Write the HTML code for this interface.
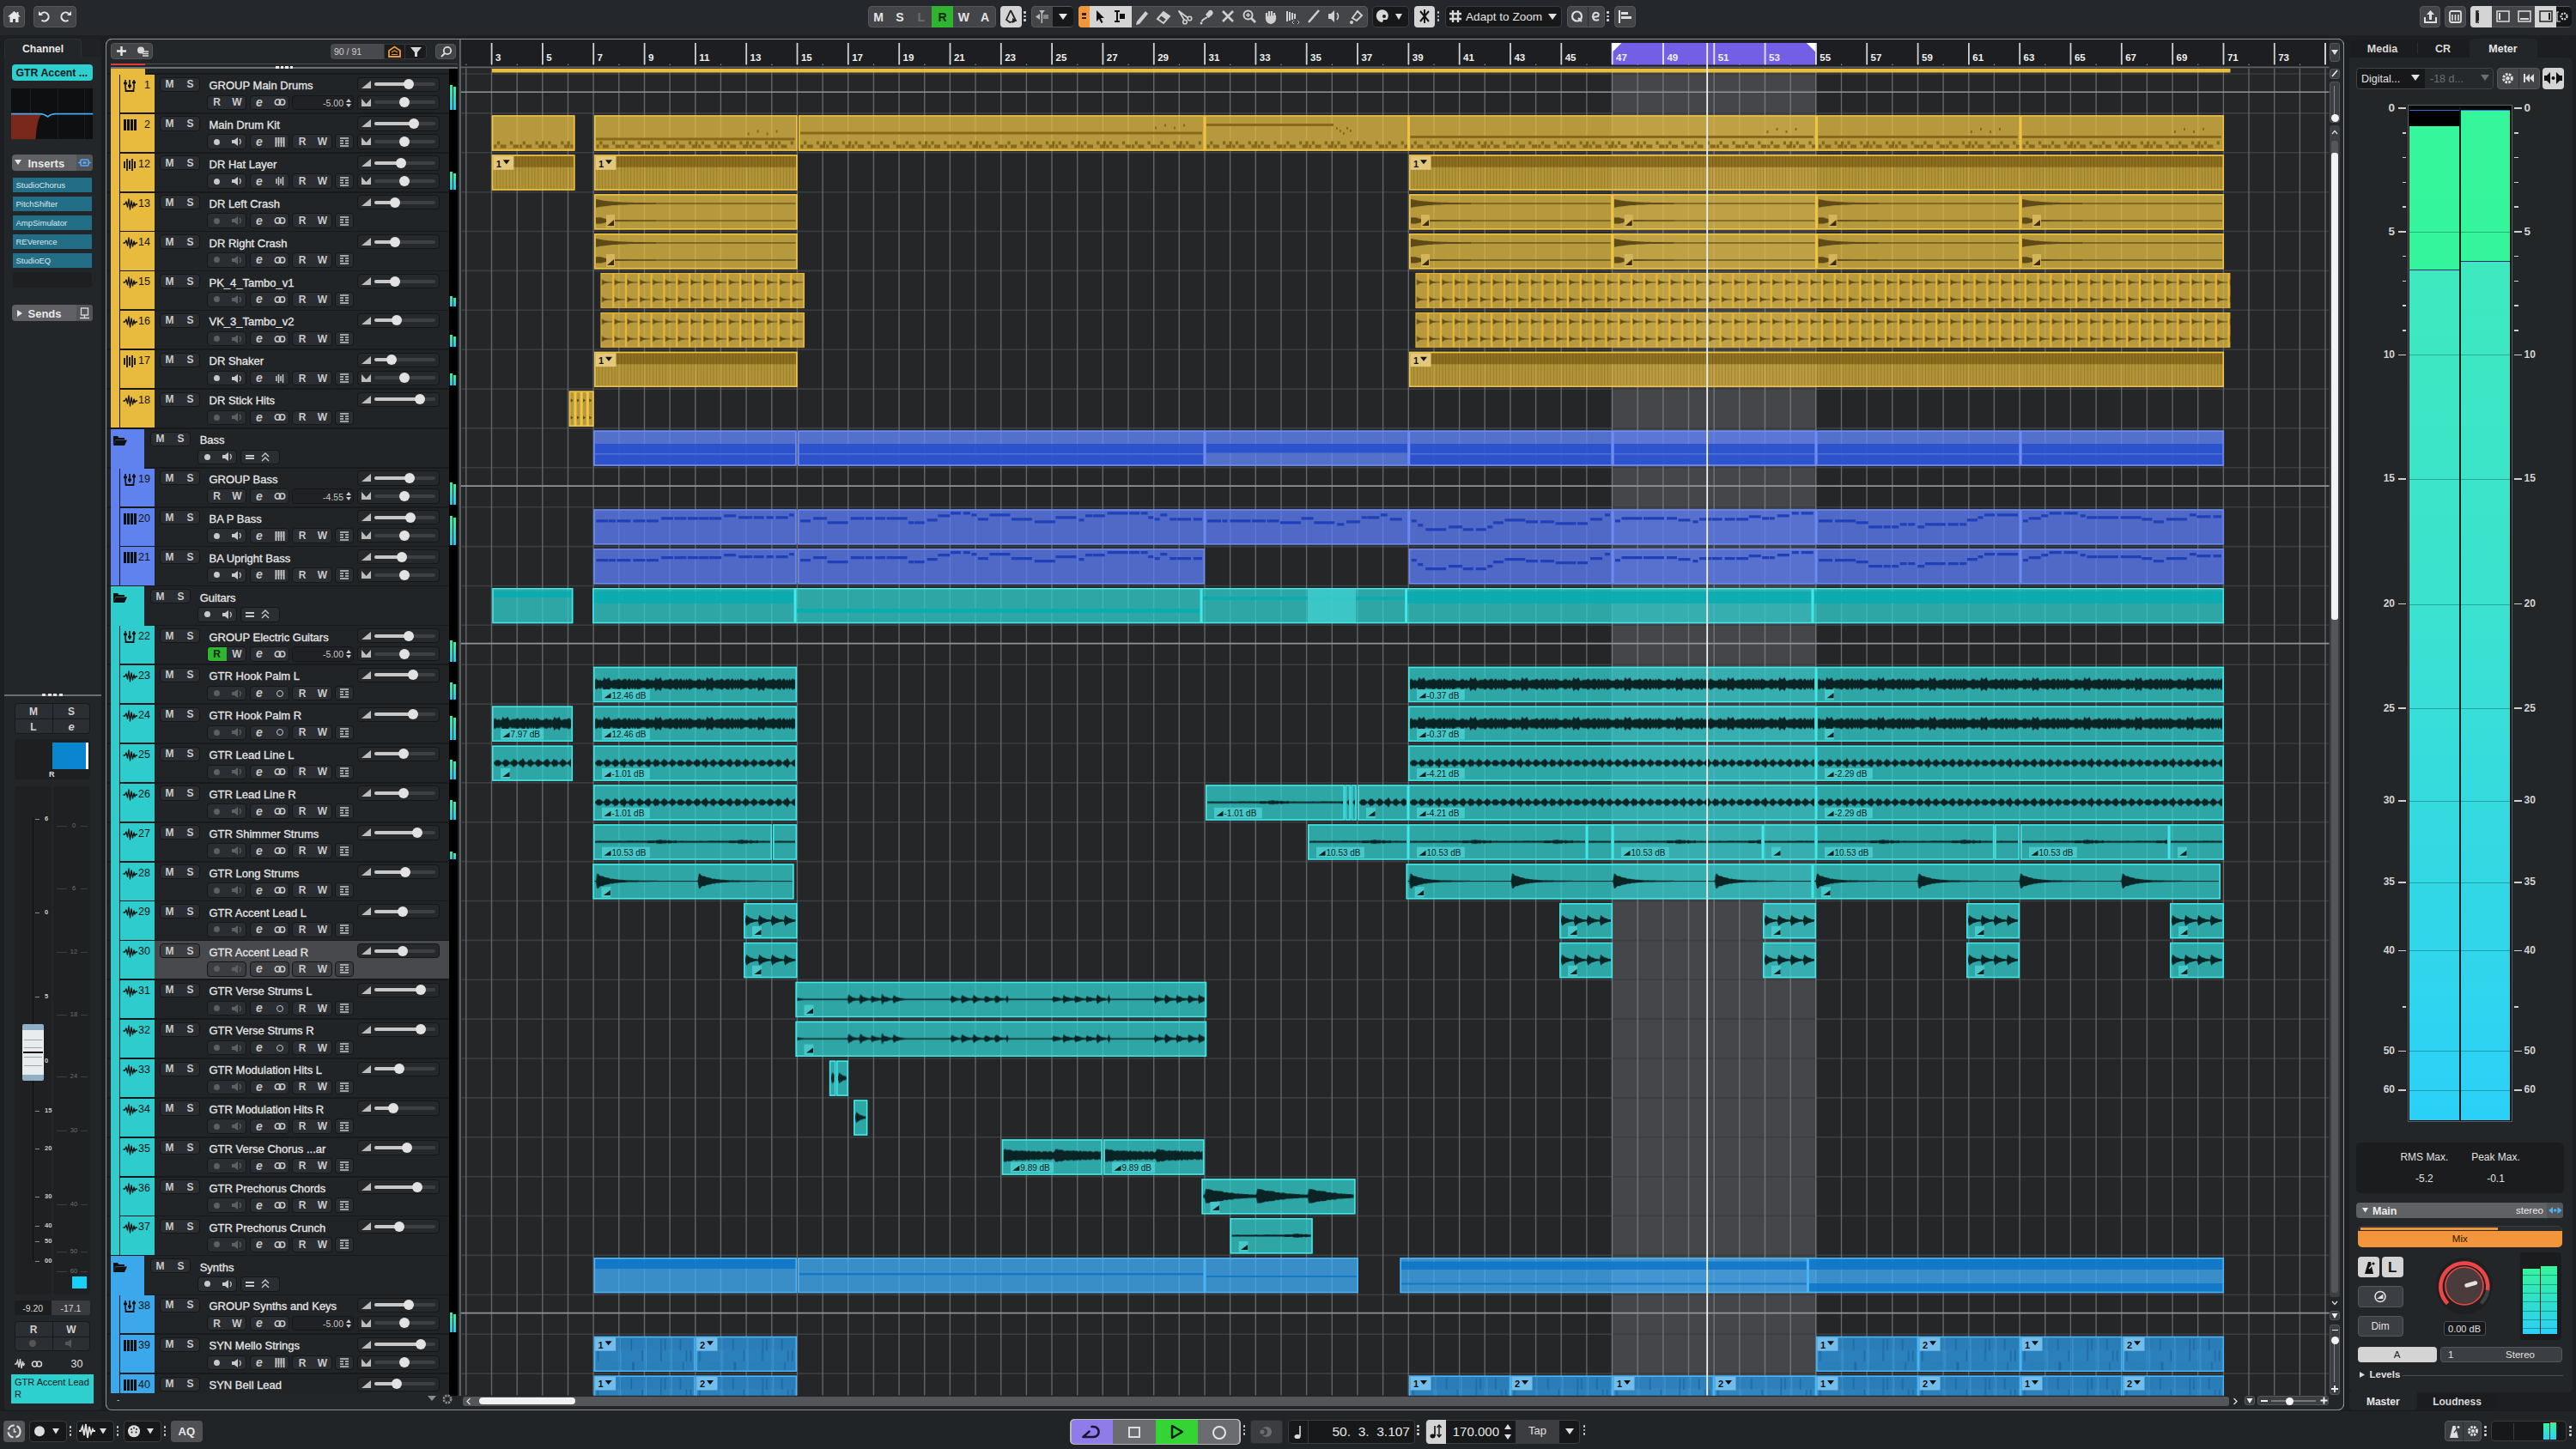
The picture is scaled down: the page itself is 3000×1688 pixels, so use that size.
<!DOCTYPE html><html><head><meta charset="utf-8"><style>
html,body{margin:0;padding:0;}
body{width:3000px;height:1688px;overflow:hidden;background:#1c1e21;position:relative;font-family:"Liberation Sans",sans-serif;}
div,svg{position:absolute;box-sizing:border-box;}
svg{overflow:visible;}
.t{white-space:nowrap;line-height:1;}
.b{border-radius:4px;}
</style></head><body>
<div style="left:0px;top:0px;width:3000px;height:41px;background:#24272b;"></div>
<div style="left:0px;top:41px;width:3000px;height:4px;background:#1d1f22;"></div>
<div style="left:4px;top:7px;width:25px;height:25px;background:#444548;border-radius:4px;border:1px solid #56575a;"></div>
<svg style="left:4px;top:7px;" width="25" height="25" viewBox="0 0 25 25"><path d="M12.5 6 L5 12.5 H7.5 V19 H11 V15 H14 V19 H17.5 V12.5 H20 Z" fill="#e6e6e6"/><rect x="15.5" y="7" width="2" height="4" fill="#e6e6e6"/></svg>
<div style="left:39px;top:7px;width:50px;height:25px;background:#444548;border-radius:4px;border:1px solid #56575a;"></div>
<svg style="left:39px;top:7px;" width="50" height="25" viewBox="0 0 50 25"><path d="M9 9 A5 5 0 1 1 9.5 16.5" stroke="#e6e6e6" stroke-width="2" fill="none"/><path d="M6 6 L6 11 L11 11 Z" fill="#e6e6e6"/><path d="M41 9 A5 5 0 1 0 40.5 16.5" stroke="#e6e6e6" stroke-width="2" fill="none"/><path d="M44 6 L44 11 L39 11 Z" fill="#e6e6e6"/></svg>
<div style="left:1010.7px;top:7.4px;width:149px;height:24.4px;background:#444548;border-radius:4px;border:1px solid #56575a;"></div>
<div style="left:1085px;top:7.4px;width:25px;height:24.4px;background:#2fb52f;"></div>
<div class="t" style="left:1010.7px;top:13px;font-size:14px;color:#e4e4e4;font-weight:bold;width:24.8px;text-align:center;">M</div>
<div class="t" style="left:1035.5px;top:13px;font-size:14px;color:#e4e4e4;font-weight:bold;width:24.8px;text-align:center;">S</div>
<div class="t" style="left:1060.3px;top:13px;font-size:14px;color:#6a6c70;font-weight:bold;width:24.8px;text-align:center;">L</div>
<div class="t" style="left:1085.1px;top:13px;font-size:14px;color:#0b2a0b;font-weight:bold;width:24.8px;text-align:center;">R</div>
<div class="t" style="left:1109.9px;top:13px;font-size:14px;color:#e4e4e4;font-weight:bold;width:24.8px;text-align:center;">W</div>
<div class="t" style="left:1134.7px;top:13px;font-size:14px;color:#e4e4e4;font-weight:bold;width:24.8px;text-align:center;">A</div>
<div style="left:1165px;top:7.4px;width:24.6px;height:24.4px;background:#d4d4d4;border-radius:4px;"></div>
<svg style="left:1165px;top:7.4px;" width="25" height="24.4" viewBox="0 0 25 24.4"><path d="M12 5 L7 16 L11 19 L18 17 L12 5" stroke="#222" stroke-width="1.8" fill="none"/><path d="M14 14 L19 17 L14 20Z" fill="#222"/></svg>
<div style="left:1192px;top:13px;width:2.6px;height:2.6px;background:#d0d0d0;border-radius:1px;"></div>
<div style="left:1192px;top:17.5px;width:2.6px;height:2.6px;background:#d0d0d0;border-radius:1px;"></div>
<div style="left:1192px;top:22px;width:2.6px;height:2.6px;background:#d0d0d0;border-radius:1px;"></div>
<div style="left:1201px;top:7.4px;width:49px;height:24.4px;background:#444548;border-radius:4px;border:1px solid #56575a;"></div>
<div style="left:1226px;top:8px;width:23.5px;height:23px;background:#17181a;border-radius:0 4px 4px 0;"></div>
<svg style="left:1201px;top:7.4px;" width="25" height="24.4" viewBox="0 0 25 24.4"><rect x="11.5" y="5" width="1.6" height="15" fill="#bbb"/><path d="M5 12.5 L10 9 V16Z" fill="#bbb"/><rect x="14" y="10" width="6" height="5" fill="#888"/><path d="M9 5 H16 L12.5 9Z" fill="#bbb"/></svg>
<svg style="left:1226px;top:7.4px;" width="24" height="24.4" viewBox="0 0 24 24.4"><path d="M7 9 H17 L12 16Z" fill="#e6e6e6"/></svg>
<div style="left:1256px;top:7.4px;width:336.5px;height:24.4px;background:#444548;border-radius:4px;border:1px solid #56575a;"></div>
<div style="left:1256px;top:7.4px;width:13px;height:24.4px;background:#f0973a;border-radius:4px 0 0 4px;"></div>
<div style="left:1260px;top:15px;width:5px;height:2.5px;background:#3a2000;"></div>
<div style="left:1260px;top:19.5px;width:5px;height:2.5px;background:#3a2000;"></div>
<div style="left:1269px;top:7.4px;width:49.3px;height:24.4px;background:#d4d4d4;"></div>
<svg style="left:1269px;top:7.4px;" width="50" height="24.4" viewBox="0 0 50 24.4"><path d="M8 5 L8 18 L11 15 L13.5 20 L15.5 19 L13 14 L17 14 Z" fill="#111"/><rect x="31" y="5" width="2" height="14" fill="#111"/><rect x="29" y="5" width="6" height="2" fill="#111"/><rect x="29" y="17" width="6" height="2" fill="#111"/><rect x="35" y="9" width="6" height="6" fill="#111"/></svg>
<svg style="left:1318.3px;top:7.4px;" width="25" height="24.4" viewBox="0 0 25 24.4"><path d="M6 18 L16 6 L19 9 L9 21 L5 22Z" fill="#cfcfcf"/></svg>
<svg style="left:1343.2px;top:7.4px;" width="25" height="24.4" viewBox="0 0 25 24.4"><path d="M5 15 L12 7 L19 12 L12 20Z" fill="none" stroke="#cfcfcf" stroke-width="2"/><path d="M12 7 L19 12 L15.5 16 L8.5 11Z" fill="#cfcfcf"/></svg>
<svg style="left:1368.1px;top:7.4px;" width="25" height="24.4" viewBox="0 0 25 24.4"><path d="M5 6 L15 13.5 M5 6 L11 16" stroke="#cfcfcf" stroke-width="1.8" stroke-linecap="round"/><circle cx="12" cy="18.5" r="2.3" stroke="#cfcfcf" stroke-width="1.6" fill="none"/><circle cx="17.5" cy="14.5" r="2.3" stroke="#cfcfcf" stroke-width="1.6" fill="none"/></svg>
<svg style="left:1393px;top:7.4px;" width="25" height="24.4" viewBox="0 0 25 24.4"><path d="M11 10 L15 5.5 Q17 4 19 6 Q20.5 8 19 10 L14.5 14 Z" fill="#cfcfcf"/><path d="M13 13 L8 16 L6.5 18" stroke="#cfcfcf" stroke-width="2" fill="none"/><circle cx="6" cy="20" r="1.4" fill="#cfcfcf"/></svg>
<svg style="left:1417.9px;top:7.4px;" width="25" height="24.4" viewBox="0 0 25 24.4"><path d="M6 6 L18 18 M18 6 L6 18" stroke="#cfcfcf" stroke-width="2.6"/></svg>
<svg style="left:1442.8px;top:7.4px;" width="25" height="24.4" viewBox="0 0 25 24.4"><circle cx="10.5" cy="10.5" r="5" stroke="#cfcfcf" stroke-width="2" fill="none"/><path d="M14 14 L19 19" stroke="#cfcfcf" stroke-width="2.6"/><path d="M8 10.5 H13 M10.5 8 V13" stroke="#cfcfcf" stroke-width="1.5"/></svg>
<svg style="left:1467.7px;top:7.4px;" width="25" height="24.4" viewBox="0 0 25 24.4"><path d="M7 13 V8 M10 12 V6 M13 12 V6 M16 12 V8 M7 12 Q6 19 12 20 Q18 19 17 11" stroke="#cfcfcf" stroke-width="2.2" fill="#cfcfcf"/></svg>
<svg style="left:1492.6px;top:7.4px;" width="25" height="24.4" viewBox="0 0 25 24.4"><rect x="5" y="6" width="2" height="12" fill="#cfcfcf"/><rect x="8" y="7" width="2" height="10" fill="#cfcfcf"/><rect x="11" y="8" width="2" height="8" fill="#cfcfcf"/><rect x="14" y="9" width="2" height="6" fill="#cfcfcf"/><path d="M14 17 L12 19 L14 21 M18 17 L20 19 L18 21" stroke="#cfcfcf" stroke-width="1"/></svg>
<svg style="left:1517.5px;top:7.4px;" width="25" height="24.4" viewBox="0 0 25 24.4"><path d="M6 19 L18 5" stroke="#cfcfcf" stroke-width="2.5"/></svg>
<svg style="left:1542.4px;top:7.4px;" width="25" height="24.4" viewBox="0 0 25 24.4"><path d="M5 9 H8 L12 5 V19 L8 15 H5Z" fill="#cfcfcf"/><path d="M15 8 Q18 12 15 16" stroke="#cfcfcf" stroke-width="1.6" fill="none"/></svg>
<svg style="left:1567.3px;top:7.4px;" width="25" height="24.4" viewBox="0 0 25 24.4"><path d="M8 14 L14 6 L19 11 L13 17Z" fill="none" stroke="#cfcfcf" stroke-width="2"/><circle cx="7" cy="19" r="2" fill="#cfcfcf"/></svg>
<div style="left:1598px;top:7.4px;width:43.4px;height:24.4px;background:#17181a;border-radius:4px;border:1px solid #3a3d40;"></div>
<svg style="left:1598px;top:7.4px;" width="44" height="24.4" viewBox="0 0 44 24.4"><path d="M5 13 A7 7 0 1 1 17 16 L13 16 L12 19 A7 7 0 0 1 5 13Z" fill="#d8d8d8"/><circle cx="14" cy="12" r="2" fill="#17181a"/><path d="M27 9 H35 L31 16Z" fill="#e0e0e0"/></svg>
<div style="left:1646.8px;top:7.4px;width:24.7px;height:24.4px;background:#d4d4d4;border-radius:4px;"></div>
<svg style="left:1646.8px;top:7.4px;" width="25" height="24.4" viewBox="0 0 25 24.4"><path d="M7 6 L12 12 L7 18 M17 6 L12 12 L17 18 M12 4 V20" stroke="#111" stroke-width="2" fill="none"/></svg>
<div style="left:1673.5px;top:13px;width:2.6px;height:2.6px;background:#d0d0d0;border-radius:1px;"></div>
<div style="left:1673.5px;top:17.5px;width:2.6px;height:2.6px;background:#d0d0d0;border-radius:1px;"></div>
<div style="left:1673.5px;top:22px;width:2.6px;height:2.6px;background:#d0d0d0;border-radius:1px;"></div>
<div style="left:1682.7px;top:7.4px;width:136.7px;height:24.4px;background:#17181a;border-radius:4px;border:1px solid #3a3d40;"></div>
<svg style="left:1682.7px;top:7.4px;" width="24" height="24.4" viewBox="0 0 24 24.4"><path d="M9 5 V19 M15 5 V19 M5 9 H19 M5 15 H19" stroke="#d8d8d8" stroke-width="2.4"/></svg>
<div class="t" style="left:1707px;top:12.5px;font-size:13.6px;color:#e2e2e2;">Adapt to Zoom</div>
<svg style="left:1800px;top:7.4px;" width="18" height="24.4" viewBox="0 0 18 24.4"><path d="M3 9 H13 L8 16Z" fill="#e0e0e0"/></svg>
<div style="left:1825px;top:7.4px;width:43.5px;height:24.4px;background:#444548;border-radius:4px;border:1px solid #56575a;"></div>
<div style="left:1849px;top:8px;width:1px;height:23px;background:#2a2c30;"></div>
<svg style="left:1825px;top:7.4px;" width="44" height="24.4" viewBox="0 0 44 24.4"><circle cx="11.5" cy="12" r="5.5" stroke="#ddd" stroke-width="2.2" fill="none"/><path d="M13 14 L17 18" stroke="#ddd" stroke-width="2.2"/><path d="M30 13 Q30 7 35 8 Q38 9 36 12 L30 13 Q31 18 37 16" stroke="#ddd" stroke-width="2" fill="none"/></svg>
<div style="left:1871px;top:13px;width:2.6px;height:2.6px;background:#d0d0d0;border-radius:1px;"></div>
<div style="left:1871px;top:17.5px;width:2.6px;height:2.6px;background:#d0d0d0;border-radius:1px;"></div>
<div style="left:1871px;top:22px;width:2.6px;height:2.6px;background:#d0d0d0;border-radius:1px;"></div>
<div style="left:1880px;top:7.4px;width:24.8px;height:24.4px;background:#444548;border-radius:4px;border:1px solid #56575a;"></div>
<svg style="left:1880px;top:7.4px;" width="25" height="24.4" viewBox="0 0 25 24.4"><rect x="5" y="5" width="2" height="15" fill="#ddd"/><rect x="8" y="7" width="8" height="3" fill="#ddd"/><rect x="8" y="12" width="12" height="3" fill="#ddd"/></svg>
<div style="left:2817.6px;top:7.2px;width:24.4px;height:24.5px;background:#444548;border-radius:4px;border:1px solid #56575a;"></div>
<svg style="left:2817.6px;top:7.2px;" width="25" height="24.5" viewBox="0 0 25 24.5"><path d="M6 13 V19 H19 V13" stroke="#e0e0e0" stroke-width="2" fill="none"/><path d="M12.5 5 L8 10 H11 V16 H14 V10 H17Z" fill="#e0e0e0"/></svg>
<div style="left:2847px;top:7.2px;width:25px;height:24.5px;background:#444548;border-radius:4px;border:1px solid #56575a;"></div>
<svg style="left:2847px;top:7.2px;" width="25" height="24.5" viewBox="0 0 25 24.5"><rect x="6" y="6" width="13" height="13" rx="2" stroke="#e0e0e0" stroke-width="1.8" fill="none"/><path d="M9 10 V17 M12.5 10 V17 M16 10 V17" stroke="#e0e0e0" stroke-width="1.6"/></svg>
<div style="left:2877px;top:7.2px;width:118.4px;height:24.5px;background:#444548;border-radius:4px;border:1px solid #56575a;"></div>
<div style="left:2877px;top:7.2px;width:25px;height:24.5px;background:#d4d4d4;border-radius:4px 0 0 4px;"></div>
<div style="left:2952px;top:7.2px;width:25px;height:24.5px;background:#d4d4d4;"></div>
<div style="left:2977px;top:8px;width:18px;height:23px;background:#141516;border-radius:0 4px 4px 0;"></div>
<svg style="left:2877px;top:7.2px;" width="120" height="24.5" viewBox="0 0 120 24.5"><path d="M10 6 H7 V19 H10 M8.5 7 V18" stroke="#222" stroke-width="1.6" fill="none"/><rect x="8" y="8" width="2" height="9" fill="#222"/><rect x="31" y="6" width="14" height="12" stroke="#ddd" stroke-width="1.5" fill="none"/><rect x="33" y="8" width="2" height="8" fill="#ddd"/><rect x="56" y="6" width="14" height="12" stroke="#ddd" stroke-width="1.5" fill="none"/><rect x="58" y="14" width="10" height="2" fill="#ddd"/><rect x="81" y="6" width="14" height="12" stroke="#222" stroke-width="1.5" fill="none"/><rect x="91" y="8" width="2" height="8" fill="#222"/><path d="M103 7 H101 V18 H105" stroke="#ddd" stroke-width="1.2" fill="none"/><circle cx="109" cy="12" r="3.5" stroke="#ddd" stroke-width="2.2" fill="none" stroke-dasharray="2 1.2"/></svg>
<div style="left:5px;top:45px;width:112.5px;height:1598px;background:#232629;border-radius:6px;"></div>
<div style="left:5px;top:45px;width:90px;height:22px;background:#232629;border-radius:6px 6px 0 0;border:1px solid #2e3134;border-bottom:none;"></div>
<div style="left:95px;top:45px;width:22.5px;height:21px;background:#1f2124;border-radius:0 6px 0 0;"></div>
<div class="t" style="left:5px;top:51px;font-size:12.2px;color:#e6e6e6;font-weight:bold;width:90px;text-align:center;">Channel</div>
<div style="left:14px;top:75px;width:93.8px;height:18.8px;background:#2ecfcf;border-radius:4px;"></div>
<div class="t" style="left:18.5px;top:79.3px;font-size:12.3px;color:#0c1a1a;font-weight:bold;">GTR Accent ...</div>
<div style="left:13px;top:102.8px;width:95.3px;height:59.2px;background:#0e0f10;"></div>
<div style="left:35px;top:102.8px;width:1px;height:59.2px;background:#1c1e20;"></div>
<div style="left:67px;top:102.8px;width:1px;height:59.2px;background:#1c1e20;"></div>
<div style="left:98px;top:102.8px;width:1px;height:59.2px;background:#1c1e20;"></div>
<svg style="left:13px;top:102.8px;" width="95.3" height="59.2" viewBox="0 0 95.3 59.2"><path d="M0 30 H36 Q30 34 28.5 59.2 H0Z" fill="#7a281c"/><path d="M0 29.6 H34 Q38 29.6 42.8 33 Q46 29.6 52 29.6 H95.3" stroke="#4aa8f0" stroke-width="1.6" fill="none"/></svg>
<div style="left:14px;top:180px;width:94px;height:19px;background:#5f6164;border-radius:4px;"></div>
<div style="left:89px;top:180px;width:19px;height:19px;background:#525457;border-radius:0 4px 4px 0;"></div>
<svg style="left:16px;top:184px;" width="10" height="10" viewBox="0 0 10 10"><path d="M1 2 H9 L5 8Z" fill="#e8e8e8"/></svg>
<div class="t" style="left:32.5px;top:183.5px;font-size:13px;color:#e8e8e8;font-weight:bold;">Inserts</div>
<svg style="left:89px;top:180px;" width="19" height="19" viewBox="0 0 19 19"><rect x="5" y="6" width="9" height="7" rx="1" stroke="#55aaff" stroke-width="1.6" fill="none"/><rect x="7.5" y="8.2" width="4" height="2.6" fill="#55aaff"/><path d="M2 9.5 H5 M14 9.5 H17" stroke="#55aaff" stroke-width="1.4"/></svg>
<div style="left:15px;top:207px;width:91.5px;height:17px;background:#226e86;"></div>
<div class="t" style="left:18.5px;top:211px;font-size:9.5px;color:#dfe8ec;">StudioChorus</div>
<div style="left:15px;top:229.05px;width:91.5px;height:17px;background:#226e86;"></div>
<div class="t" style="left:18.5px;top:233.05px;font-size:9.5px;color:#dfe8ec;">PitchShifter</div>
<div style="left:15px;top:251.1px;width:91.5px;height:17px;background:#226e86;"></div>
<div class="t" style="left:18.5px;top:255.1px;font-size:9.5px;color:#dfe8ec;">AmpSimulator</div>
<div style="left:15px;top:273.15px;width:91.5px;height:17px;background:#226e86;"></div>
<div class="t" style="left:18.5px;top:277.15px;font-size:9.5px;color:#dfe8ec;">REVerence</div>
<div style="left:15px;top:295.2px;width:91.5px;height:17px;background:#226e86;"></div>
<div class="t" style="left:18.5px;top:299.2px;font-size:9.5px;color:#dfe8ec;">StudioEQ</div>
<div style="left:15px;top:317.3px;width:91.5px;height:17.3px;background:#1d1f21;border-radius:2px;"></div>
<div style="left:14px;top:355.4px;width:94px;height:18.8px;background:#5f6164;border-radius:4px;"></div>
<div style="left:89px;top:355.4px;width:19px;height:18.8px;background:#525457;border-radius:0 4px 4px 0;"></div>
<svg style="left:19px;top:360px;" width="8" height="10" viewBox="0 0 8 10"><path d="M1 1 L7 5 L1 9Z" fill="#e8e8e8"/></svg>
<div class="t" style="left:32.5px;top:358.8px;font-size:13px;color:#e8e8e8;font-weight:bold;">Sends</div>
<svg style="left:89px;top:355.4px;" width="19" height="19" viewBox="0 0 19 19"><rect x="5.5" y="4" width="8" height="8" stroke="#ddd" stroke-width="1.3" fill="none"/><path d="M9.5 12 V15 M4 15.5 H15" stroke="#ddd" stroke-width="1.3"/></svg>
<div style="left:5px;top:809px;width:112.5px;height:1.6px;background:#6c6e71;"></div>
<div style="left:49px;top:808.3px;width:4px;height:3px;background:#e0e0e0;"></div>
<div style="left:55.5px;top:808.3px;width:4px;height:3px;background:#e0e0e0;"></div>
<div style="left:62px;top:808.3px;width:4px;height:3px;background:#e0e0e0;"></div>
<div style="left:68.5px;top:808.3px;width:4px;height:3px;background:#e0e0e0;"></div>
<div style="left:17px;top:818.8px;width:88px;height:36.2px;background:#2b2e32;border-radius:4px;border:1px solid #17191b;"></div>
<div style="left:60.5px;top:819px;width:1px;height:36px;background:#17191b;"></div>
<div style="left:17px;top:836.7px;width:88px;height:1px;background:#17191b;"></div>
<div class="t" style="left:17px;top:823px;font-size:12px;color:#d0d0d0;font-weight:bold;width:44px;text-align:center;">M</div>
<div class="t" style="left:61px;top:823px;font-size:12px;color:#d0d0d0;font-weight:bold;width:44px;text-align:center;">S</div>
<div class="t" style="left:17px;top:841px;font-size:12px;color:#d0d0d0;font-weight:bold;width:44px;text-align:center;">L</div>
<div class="t" style="left:61px;top:840px;font-size:13px;color:#d0d0d0;font-weight:bold;width:44px;text-align:center;font-style:italic;">e</div>
<div style="left:17px;top:861.4px;width:88px;height:47px;background:#1d1f21;border-radius:4px;"></div>
<div style="left:61px;top:864.5px;width:42px;height:31px;background:#0a86d0;"></div>
<div style="left:100px;top:864.5px;width:3px;height:31px;background:#ffffff;"></div>
<div class="t" style="left:57px;top:898px;font-size:9px;color:#e0e0e0;font-weight:bold;">R</div>
<div style="left:17px;top:916px;width:42.5px;height:592px;background:#1e2022;border-radius:4px;"></div>
<div style="left:62px;top:916px;width:43px;height:592px;background:#1e2022;border-radius:4px;"></div>
<div style="left:37.5px;top:952px;width:1.6px;height:516px;background:#0c0d0e;"></div>
<div style="left:41px;top:954px;width:5px;height:1px;background:#888;"></div>
<div class="t" style="left:52px;top:950px;font-size:7.5px;color:#cfcfcf;font-weight:bold;">6</div>
<div style="left:41px;top:1063px;width:5px;height:1px;background:#888;"></div>
<div class="t" style="left:52px;top:1059px;font-size:7.5px;color:#cfcfcf;font-weight:bold;">0</div>
<div style="left:41px;top:1161px;width:5px;height:1px;background:#888;"></div>
<div class="t" style="left:52px;top:1157px;font-size:7.5px;color:#cfcfcf;font-weight:bold;">5</div>
<div style="left:41px;top:1236px;width:5px;height:1px;background:#888;"></div>
<div class="t" style="left:52px;top:1232px;font-size:7.5px;color:#cfcfcf;font-weight:bold;">0</div>
<div style="left:41px;top:1294px;width:5px;height:1px;background:#888;"></div>
<div class="t" style="left:52px;top:1290px;font-size:7.5px;color:#cfcfcf;font-weight:bold;">15</div>
<div style="left:41px;top:1338px;width:5px;height:1px;background:#888;"></div>
<div class="t" style="left:52px;top:1334px;font-size:7.5px;color:#cfcfcf;font-weight:bold;">20</div>
<div style="left:41px;top:1394px;width:5px;height:1px;background:#888;"></div>
<div class="t" style="left:52px;top:1390px;font-size:7.5px;color:#cfcfcf;font-weight:bold;">30</div>
<div style="left:41px;top:1428px;width:5px;height:1px;background:#888;"></div>
<div class="t" style="left:52px;top:1424px;font-size:7.5px;color:#cfcfcf;font-weight:bold;">40</div>
<div style="left:41px;top:1446px;width:5px;height:1px;background:#888;"></div>
<div class="t" style="left:52px;top:1442px;font-size:7.5px;color:#cfcfcf;font-weight:bold;">50</div>
<div style="left:41px;top:1469px;width:5px;height:1px;background:#888;"></div>
<div class="t" style="left:52px;top:1465px;font-size:7.5px;color:#cfcfcf;font-weight:bold;">00</div>
<div style="left:66px;top:962px;width:36px;height:1px;background:#3d3f42;"></div>
<div style="left:78px;top:957px;width:16px;height:10px;background:#1e2022;"></div>
<div class="t" style="left:78px;top:958px;font-size:7.5px;color:#6e7073;width:16px;text-align:center;">0</div>
<div style="left:66px;top:1035px;width:36px;height:1px;background:#3d3f42;"></div>
<div style="left:78px;top:1030px;width:16px;height:10px;background:#1e2022;"></div>
<div class="t" style="left:78px;top:1031px;font-size:7.5px;color:#6e7073;width:16px;text-align:center;">6</div>
<div style="left:66px;top:1109px;width:36px;height:1px;background:#3d3f42;"></div>
<div style="left:78px;top:1104px;width:16px;height:10px;background:#1e2022;"></div>
<div class="t" style="left:78px;top:1105px;font-size:7.5px;color:#6e7073;width:16px;text-align:center;">12</div>
<div style="left:66px;top:1182px;width:36px;height:1px;background:#3d3f42;"></div>
<div style="left:78px;top:1177px;width:16px;height:10px;background:#1e2022;"></div>
<div class="t" style="left:78px;top:1178px;font-size:7.5px;color:#6e7073;width:16px;text-align:center;">18</div>
<div style="left:66px;top:1254px;width:36px;height:1px;background:#3d3f42;"></div>
<div style="left:78px;top:1249px;width:16px;height:10px;background:#1e2022;"></div>
<div class="t" style="left:78px;top:1250px;font-size:7.5px;color:#6e7073;width:16px;text-align:center;">24</div>
<div style="left:66px;top:1317px;width:36px;height:1px;background:#3d3f42;"></div>
<div style="left:78px;top:1312px;width:16px;height:10px;background:#1e2022;"></div>
<div class="t" style="left:78px;top:1313px;font-size:7.5px;color:#6e7073;width:16px;text-align:center;">30</div>
<div style="left:66px;top:1403px;width:36px;height:1px;background:#3d3f42;"></div>
<div style="left:78px;top:1398px;width:16px;height:10px;background:#1e2022;"></div>
<div class="t" style="left:78px;top:1399px;font-size:7.5px;color:#6e7073;width:16px;text-align:center;">40</div>
<div style="left:66px;top:1458px;width:36px;height:1px;background:#3d3f42;"></div>
<div style="left:78px;top:1453px;width:16px;height:10px;background:#1e2022;"></div>
<div class="t" style="left:78px;top:1454px;font-size:7.5px;color:#6e7073;width:16px;text-align:center;">50</div>
<div style="left:66px;top:1481px;width:36px;height:1px;background:#3d3f42;"></div>
<div style="left:78px;top:1476px;width:16px;height:10px;background:#1e2022;"></div>
<div class="t" style="left:78px;top:1477px;font-size:7.5px;color:#6e7073;width:16px;text-align:center;">60</div>
<div style="left:84px;top:1487px;width:17px;height:14px;background:#18d0f8;"></div>
<div style="left:26px;top:1193px;width:25px;height:66px;background:#8fb0c4;border-radius:2px;"></div>
<div style="left:26px;top:1200px;width:25px;height:52px;background:#e8ecef;"></div>
<div style="left:28px;top:1211px;width:21px;height:1px;background:#9aa8b0;"></div>
<div style="left:28px;top:1220px;width:21px;height:1px;background:#9aa8b0;"></div>
<div style="left:28px;top:1231px;width:21px;height:1px;background:#9aa8b0;"></div>
<div style="left:28px;top:1241px;width:21px;height:1px;background:#9aa8b0;"></div>
<div style="left:27px;top:1224.5px;width:23px;height:2.5px;background:#111;"></div>
<div style="left:17px;top:1514.8px;width:42.5px;height:17.2px;background:#1b1d1f;border-radius:3px 0 0 3px;"></div>
<div style="left:60px;top:1514.8px;width:45px;height:17.2px;background:#393b3f;border-radius:0 3px 3px 0;"></div>
<div class="t" style="left:17px;top:1519px;font-size:10.5px;color:#d8d8d8;width:42.5px;text-align:center;">-9.20</div>
<div class="t" style="left:60px;top:1519px;font-size:10.5px;color:#d8d8d8;width:45px;text-align:center;">-17.1</div>
<div style="left:17px;top:1539px;width:88px;height:35px;background:#2b2e32;border-radius:4px;border:1px solid #17191b;"></div>
<div style="left:60.5px;top:1539px;width:1px;height:35px;background:#17191b;"></div>
<div style="left:17px;top:1556.5px;width:88px;height:1px;background:#17191b;"></div>
<div class="t" style="left:17px;top:1542.5px;font-size:12px;color:#d0d0d0;font-weight:bold;width:44px;text-align:center;">R</div>
<div class="t" style="left:61px;top:1542.5px;font-size:12px;color:#d0d0d0;font-weight:bold;width:44px;text-align:center;">W</div>
<div style="left:33.5px;top:1561px;width:8px;height:8px;background:#555;border-radius:50%;"></div>
<svg style="left:74px;top:1559px;" width="14" height="12" viewBox="0 0 14 12"><path d="M2 4 H5 L9 1 V11 L5 8 H2Z" fill="#555"/></svg>
<svg style="left:17px;top:1582px;" width="12" height="14" viewBox="0 0 12 14"><path d="M0 7 H2 L3.5 3 L5 11 L6.5 1 L8 12 L9.5 4 L10.5 9 L11 7 H12" stroke="#d0d0d0" stroke-width="1.4" fill="none"/></svg>
<svg style="left:36px;top:1583px;" width="14" height="12" viewBox="0 0 14 12"><circle cx="4.5" cy="6" r="3" stroke="#d0d0d0" stroke-width="1.6" fill="none"/><circle cx="9.5" cy="6" r="3" stroke="#d0d0d0" stroke-width="1.6" fill="none"/></svg>
<div class="t" style="left:82.5px;top:1582.5px;font-size:12.5px;color:#e0e0e0;">30</div>
<div style="left:13px;top:1601px;width:96px;height:34px;background:#2ecfcf;"></div>
<div class="t" style="left:17px;top:1604.5px;font-size:11px;color:#0c1a1a;">GTR Accent Lead</div>
<div class="t" style="left:17px;top:1619px;font-size:11px;color:#0c1a1a;">R</div>
<div style="left:123px;top:44.5px;width:2607px;height:1598.5px;background:#232629;border-radius:7px;border:1.6px solid #8f9194;"></div>
<div style="left:129px;top:50px;width:49px;height:19px;background:#444548;border-radius:4px;border:1px solid #56575a;"></div>
<svg style="left:129px;top:50px;" width="49" height="19" viewBox="0 0 49 19"><path d="M12.5 4 V15 M7 9.5 H18" stroke="#e6e6e6" stroke-width="2.4"/><circle cx="35" cy="8.5" r="4" fill="#d8d8d8"/><path d="M37 10 H44 M37 12.5 H44 M37 15 H44" stroke="#d8d8d8" stroke-width="1.6"/></svg>
<div style="left:384.7px;top:50.9px;width:62px;height:17.8px;background:#47494d;border-radius:4px 0 0 4px;"></div>
<div class="t" style="left:389px;top:55px;font-size:10.5px;color:#cfcfcf;">90 / 91</div>
<div style="left:447px;top:50.9px;width:49.5px;height:17.8px;background:#1a1b1d;border-radius:0 4px 4px 0;border:1px solid #34363a;"></div>
<div style="left:471px;top:51px;width:1px;height:17.6px;background:#34363a;"></div>
<svg style="left:447px;top:50.9px;" width="25" height="18" viewBox="0 0 25 18"><path d="M6 8 L12.5 3.5 L19 8 V15 H6Z" stroke="#f0963a" stroke-width="1.8" fill="none"/><path d="M9 10 L12.5 8 L16 10 M9 12.5 L16 12.5" stroke="#f0963a" stroke-width="1.2"/></svg>
<svg style="left:472px;top:50.9px;" width="25" height="18" viewBox="0 0 25 18"><path d="M6 4 H19 L14 10 V15 H11 V10Z" fill="#d6d6d6"/></svg>
<div style="left:507px;top:50.6px;width:24.4px;height:18.2px;background:#444548;border-radius:4px;border:1px solid #56575a;"></div>
<svg style="left:507px;top:50.6px;" width="25" height="18" viewBox="0 0 25 18"><circle cx="14" cy="8" r="4.2" stroke="#ddd" stroke-width="1.8" fill="none"/><path d="M11 11 L7 15" stroke="#ddd" stroke-width="2"/></svg>
<div style="left:129px;top:74.3px;width:404px;height:1px;background:#4a4c50;"></div>
<div style="left:128.5px;top:74.3px;width:40px;height:1.6px;background:#e23a3a;"></div>
<div style="left:129px;top:77.5px;width:404px;height:2px;background:#6f7174;"></div>
<div style="left:321px;top:77px;width:3.5px;height:2.6px;background:#e8e8e8;"></div>
<div style="left:326.5px;top:77px;width:3.5px;height:2.6px;background:#e8e8e8;"></div>
<div style="left:332px;top:77px;width:3.5px;height:2.6px;background:#e8e8e8;"></div>
<div style="left:337.5px;top:77px;width:3.5px;height:2.6px;background:#e8e8e8;"></div>
<div style="left:124.5px;top:80px;width:398.3px;height:1545px;background:#212427;"></div>
<div style="left:522.8px;top:80px;width:10.5px;height:1545px;background:#000;"></div>
<div style="left:124.5px;top:85.22px;width:398.3px;height:1.7px;background:#17191b;"></div>
<div style="left:124.5px;top:131.1px;width:398.3px;height:1.7px;background:#17191b;"></div>
<div style="left:124.5px;top:176.98px;width:398.3px;height:1.7px;background:#17191b;"></div>
<div style="left:124.5px;top:222.86px;width:398.3px;height:1.7px;background:#17191b;"></div>
<div style="left:124.5px;top:268.74px;width:398.3px;height:1.7px;background:#17191b;"></div>
<div style="left:124.5px;top:314.62px;width:398.3px;height:1.7px;background:#17191b;"></div>
<div style="left:124.5px;top:360.5px;width:398.3px;height:1.7px;background:#17191b;"></div>
<div style="left:124.5px;top:406.38px;width:398.3px;height:1.7px;background:#17191b;"></div>
<div style="left:124.5px;top:452.26px;width:398.3px;height:1.7px;background:#17191b;"></div>
<div style="left:124.5px;top:498.14px;width:398.3px;height:1.7px;background:#17191b;"></div>
<div style="left:124.5px;top:544.02px;width:398.3px;height:1.7px;background:#17191b;"></div>
<div style="left:124.5px;top:589.9px;width:398.3px;height:1.7px;background:#17191b;"></div>
<div style="left:124.5px;top:635.78px;width:398.3px;height:1.7px;background:#17191b;"></div>
<div style="left:124.5px;top:681.66px;width:398.3px;height:1.7px;background:#17191b;"></div>
<div style="left:124.5px;top:727.54px;width:398.3px;height:1.7px;background:#17191b;"></div>
<div style="left:124.5px;top:773.42px;width:398.3px;height:1.7px;background:#17191b;"></div>
<div style="left:124.5px;top:819.3px;width:398.3px;height:1.7px;background:#17191b;"></div>
<div style="left:124.5px;top:865.18px;width:398.3px;height:1.7px;background:#17191b;"></div>
<div style="left:124.5px;top:911.06px;width:398.3px;height:1.7px;background:#17191b;"></div>
<div style="left:124.5px;top:956.94px;width:398.3px;height:1.7px;background:#17191b;"></div>
<div style="left:124.5px;top:1002.82px;width:398.3px;height:1.7px;background:#17191b;"></div>
<div style="left:124.5px;top:1048.7px;width:398.3px;height:1.7px;background:#17191b;"></div>
<div style="left:124.5px;top:1094.58px;width:398.3px;height:1.7px;background:#17191b;"></div>
<div style="left:124.5px;top:1140.46px;width:398.3px;height:1.7px;background:#17191b;"></div>
<div style="left:124.5px;top:1186.34px;width:398.3px;height:1.7px;background:#17191b;"></div>
<div style="left:124.5px;top:1232.22px;width:398.3px;height:1.7px;background:#17191b;"></div>
<div style="left:124.5px;top:1278.1px;width:398.3px;height:1.7px;background:#17191b;"></div>
<div style="left:124.5px;top:1323.98px;width:398.3px;height:1.7px;background:#17191b;"></div>
<div style="left:124.5px;top:1369.86px;width:398.3px;height:1.7px;background:#17191b;"></div>
<div style="left:124.5px;top:1415.74px;width:398.3px;height:1.7px;background:#17191b;"></div>
<div style="left:124.5px;top:1461.62px;width:398.3px;height:1.7px;background:#17191b;"></div>
<div style="left:124.5px;top:1507.5px;width:398.3px;height:1.7px;background:#17191b;"></div>
<div style="left:124.5px;top:1553.38px;width:398.3px;height:1.7px;background:#17191b;"></div>
<div style="left:124.5px;top:1599.26px;width:398.3px;height:1.7px;background:#17191b;"></div>
<div style="left:124.5px;top:1645.14px;width:398.3px;height:1.7px;background:#17191b;"></div>
<div style="left:124.5px;top:1691.02px;width:398.3px;height:1.7px;background:#17191b;"></div>
<div style="left:128.6px;top:85.2px;width:10.4px;height:45.9px;background:#e8bb3e;"></div>
<div style="left:139px;top:86.9px;width:1.2px;height:44.2px;background:#151617;"></div>
<div style="left:140.2px;top:86.9px;width:39.8px;height:44.2px;background:#e8bb3e;"></div>
<svg style="left:142.5px;top:91.9px;" width="18" height="16" viewBox="0 0 18 16"><path d="M3 1 V11 M8 1 V11 M13 1 V11" stroke="#111" stroke-width="1.6"/><path d="M1 5 H5 M6 8 H10 M11 4 H15" stroke="#111" stroke-width="2.4"/><path d="M3.5 11 V14 H12.5 V11" stroke="#111" stroke-width="1.8" fill="none"/></svg>
<div class="t" style="left:147px;top:92.9px;font-size:12.5px;color:#151515;width:28px;text-align:right;">1</div>
<div style="left:185.5px;top:89.6px;width:47.9px;height:17.1px;background:#2a2d31;border-radius:4px;border:1.5px solid #141618;"></div>
<div class="t" style="left:189.5px;top:92.2px;font-size:12px;color:#c9c9c9;font-weight:bold;width:16px;text-align:center;">M</div>
<div class="t" style="left:213.5px;top:92.2px;font-size:12px;color:#c9c9c9;font-weight:bold;width:16px;text-align:center;">S</div>
<div class="t" style="left:243.5px;top:93.2px;font-size:13.0px;color:#e6e6e6;-webkit-text-stroke:0.3px #e6e6e6;">GROUP Main Drums</div>
<div style="left:415.7px;top:89.6px;width:96.3px;height:17.2px;background:#26292c;border-radius:4px;border:1.5px solid #141618;"></div>
<svg style="left:419px;top:91.6px;" width="16" height="13" viewBox="0 0 16 13"><path d="M2 11 L13 2 V11Z" fill="#bdbdbd"/></svg>
<div style="left:435.8px;top:96.2px;width:70.8px;height:4px;background:#3d3f42;border-radius:2px;"></div>
<div style="left:435.8px;top:96.2px;width:40.2px;height:4px;background:#c8c8c8;border-radius:2px;"></div>
<div style="left:470px;top:92.2px;width:12px;height:12px;background:#e2e2e2;border-radius:50%;"></div>
<div style="left:241px;top:110.6px;width:46.2px;height:17.6px;background:#2a2d31;border-radius:4px;border:1.5px solid #141618;"></div>
<div class="t" style="left:244.5px;top:113.4px;font-size:12px;color:#c9c9c9;font-weight:bold;width:16px;text-align:center;">R</div>
<div class="t" style="left:268px;top:113.4px;font-size:12px;color:#c9c9c9;font-weight:bold;width:16px;text-align:center;">W</div>
<div style="left:290.8px;top:110.6px;width:46.2px;height:17.6px;background:#2a2d31;border-radius:4px;border:1.5px solid #141618;"></div>
<div class="t" style="left:296px;top:111.9px;font-size:14px;color:#c9c9c9;font-weight:bold;width:12px;text-align:center;font-style:italic;">e</div>
<svg style="left:318.5px;top:114.4px;" width="14" height="10" viewBox="0 0 14 10"><circle cx="4.5" cy="5" r="3.2" stroke="#c9c9c9" stroke-width="1.6" fill="none"/><circle cx="9.5" cy="5" r="3.2" stroke="#c9c9c9" stroke-width="1.6" fill="none"/></svg>
<div style="left:340.3px;top:110.6px;width:71.7px;height:17.6px;background:#1f2124;border-radius:4px;border:1.5px solid #141618;"></div>
<div class="t" style="left:360px;top:114.9px;font-size:10.5px;color:#c8c8c8;width:40px;text-align:right;">-5.00</div>
<svg style="left:402px;top:113.6px;" width="8" height="12" viewBox="0 0 8 12"><path d="M4 1 L7 5 H1Z M4 11 L7 7 H1Z" fill="#c8c8c8"/></svg>
<div style="left:415.7px;top:110.6px;width:96.3px;height:17.2px;background:#26292c;border-radius:4px;border:1.5px solid #141618;"></div>
<svg style="left:419px;top:112.6px;" width="16" height="13" viewBox="0 0 16 13"><path d="M2 11 V2 L7.5 8 L13 2 V11Z" fill="#bdbdbd"/></svg>
<div style="left:435.8px;top:117.2px;width:70.8px;height:4px;background:#3d3f42;border-radius:2px;"></div>
<div style="left:464.5px;top:113.2px;width:12px;height:12px;background:#e2e2e2;border-radius:50%;"></div>
<div style="left:128.6px;top:131.08px;width:10.4px;height:45.9px;background:#e8bb3e;"></div>
<div style="left:139px;top:132.78px;width:1.2px;height:44.2px;background:#151617;"></div>
<div style="left:140.2px;top:132.78px;width:39.8px;height:44.2px;background:#e8bb3e;"></div>
<svg style="left:142.5px;top:137.78px;" width="18" height="16" viewBox="0 0 18 16"><path d="M1 1h3v13h-3zM5 1h3v13h-3zM9 1h3v13h-3zM13 1h3v13h-3z" fill="#111"/></svg>
<div class="t" style="left:147px;top:138.78px;font-size:12.5px;color:#151515;width:28px;text-align:right;">2</div>
<div style="left:185.5px;top:135.48px;width:47.9px;height:17.1px;background:#2a2d31;border-radius:4px;border:1.5px solid #141618;"></div>
<div class="t" style="left:189.5px;top:138.08px;font-size:12px;color:#c9c9c9;font-weight:bold;width:16px;text-align:center;">M</div>
<div class="t" style="left:213.5px;top:138.08px;font-size:12px;color:#c9c9c9;font-weight:bold;width:16px;text-align:center;">S</div>
<div class="t" style="left:243.5px;top:139.08px;font-size:13.0px;color:#e6e6e6;-webkit-text-stroke:0.3px #e6e6e6;">Main Drum Kit</div>
<div style="left:415.7px;top:135.48px;width:96.3px;height:17.2px;background:#26292c;border-radius:4px;border:1.5px solid #141618;"></div>
<svg style="left:419px;top:137.48px;" width="16" height="13" viewBox="0 0 16 13"><path d="M2 11 L13 2 V11Z" fill="#bdbdbd"/></svg>
<div style="left:435.8px;top:142.08px;width:70.8px;height:4px;background:#3d3f42;border-radius:2px;"></div>
<div style="left:435.8px;top:142.08px;width:46.2px;height:4px;background:#c8c8c8;border-radius:2px;"></div>
<div style="left:476px;top:138.08px;width:12px;height:12px;background:#e2e2e2;border-radius:50%;"></div>
<div style="left:241px;top:156.48px;width:46.2px;height:17.6px;background:#2a2d31;border-radius:4px;border:1.5px solid #141618;"></div>
<div style="left:249px;top:161.78px;width:7px;height:7px;background:#c9c9c9;border-radius:50%;"></div>
<svg style="left:268.5px;top:159.28px;" width="14" height="12" viewBox="0 0 14 12"><path d="M1 4 H4 L8 1 V11 L4 8 H1Z" fill="#c9c9c9"/><path d="M10 3 Q12.5 6 10 9" stroke="#c9c9c9" stroke-width="1.3" fill="none"/></svg>
<div style="left:290.8px;top:156.48px;width:46.2px;height:17.6px;background:#2a2d31;border-radius:4px;border:1.5px solid #141618;"></div>
<div class="t" style="left:296px;top:157.78px;font-size:14px;color:#c9c9c9;font-weight:bold;width:12px;text-align:center;font-style:italic;">e</div>
<svg style="left:319.5px;top:159.78px;" width="12" height="11" viewBox="0 0 12 11"><rect x="0.5" y="0" width="11" height="11" fill="#c9c9c9"/><path d="M3 0 V11 M6 0 V11 M9 0 V11" stroke="#2a2d31" stroke-width="1"/><path d="M3 7 V11 M6 7 V11 M9 7 V11" stroke="#2a2d31" stroke-width="0.8"/></svg>
<div style="left:340.3px;top:156.48px;width:46.5px;height:17.6px;background:#2a2d31;border-radius:4px;border:1.5px solid #141618;"></div>
<div class="t" style="left:344px;top:159.28px;font-size:12px;color:#c9c9c9;font-weight:bold;width:16px;text-align:center;">R</div>
<div class="t" style="left:367.5px;top:159.28px;font-size:12px;color:#c9c9c9;font-weight:bold;width:16px;text-align:center;">W</div>
<div style="left:390.4px;top:156.48px;width:21.6px;height:17.6px;background:#2a2d31;border-radius:4px;border:1.5px solid #141618;"></div>
<svg style="left:395.2px;top:159.78px;" width="12" height="11" viewBox="0 0 12 11"><path d="M1 1 H11 M1 4 H5 M7 4 H11 M1 7 H5 M7 7 H11 M1 10 H11" stroke="#c9c9c9" stroke-width="1.3"/></svg>
<div style="left:415.7px;top:156.48px;width:96.3px;height:17.2px;background:#26292c;border-radius:4px;border:1.5px solid #141618;"></div>
<svg style="left:419px;top:158.48px;" width="16" height="13" viewBox="0 0 16 13"><path d="M2 11 V2 L7.5 8 L13 2 V11Z" fill="#bdbdbd"/></svg>
<div style="left:435.8px;top:163.08px;width:70.8px;height:4px;background:#3d3f42;border-radius:2px;"></div>
<div style="left:464.5px;top:159.08px;width:12px;height:12px;background:#e2e2e2;border-radius:50%;"></div>
<div style="left:128.6px;top:176.96px;width:10.4px;height:45.9px;background:#e8bb3e;"></div>
<div style="left:139px;top:178.66px;width:1.2px;height:44.2px;background:#151617;"></div>
<div style="left:140.2px;top:178.66px;width:39.8px;height:44.2px;background:#e8bb3e;"></div>
<svg style="left:142.5px;top:183.66px;" width="18" height="16" viewBox="0 0 18 16"><path d="M2 4 V12 M5 1 V15 M8 3 V13 M11 1 V15 M14 4 V12" stroke="#111" stroke-width="1.8"/></svg>
<div class="t" style="left:147px;top:184.66px;font-size:12.5px;color:#151515;width:28px;text-align:right;">12</div>
<div style="left:185.5px;top:181.36px;width:47.9px;height:17.1px;background:#2a2d31;border-radius:4px;border:1.5px solid #141618;"></div>
<div class="t" style="left:189.5px;top:183.96px;font-size:12px;color:#c9c9c9;font-weight:bold;width:16px;text-align:center;">M</div>
<div class="t" style="left:213.5px;top:183.96px;font-size:12px;color:#c9c9c9;font-weight:bold;width:16px;text-align:center;">S</div>
<div class="t" style="left:243.5px;top:184.96px;font-size:13.0px;color:#e6e6e6;-webkit-text-stroke:0.3px #e6e6e6;">DR Hat Layer</div>
<div style="left:415.7px;top:181.36px;width:96.3px;height:17.2px;background:#26292c;border-radius:4px;border:1.5px solid #141618;"></div>
<svg style="left:419px;top:183.36px;" width="16" height="13" viewBox="0 0 16 13"><path d="M2 11 L13 2 V11Z" fill="#bdbdbd"/></svg>
<div style="left:435.8px;top:187.96px;width:70.8px;height:4px;background:#3d3f42;border-radius:2px;"></div>
<div style="left:435.8px;top:187.96px;width:31.2px;height:4px;background:#c8c8c8;border-radius:2px;"></div>
<div style="left:461px;top:183.96px;width:12px;height:12px;background:#e2e2e2;border-radius:50%;"></div>
<div style="left:241px;top:202.36px;width:46.2px;height:17.6px;background:#2a2d31;border-radius:4px;border:1.5px solid #141618;"></div>
<div style="left:249px;top:207.66px;width:7px;height:7px;background:#c9c9c9;border-radius:50%;"></div>
<svg style="left:268.5px;top:205.16px;" width="14" height="12" viewBox="0 0 14 12"><path d="M1 4 H4 L8 1 V11 L4 8 H1Z" fill="#c9c9c9"/><path d="M10 3 Q12.5 6 10 9" stroke="#c9c9c9" stroke-width="1.3" fill="none"/></svg>
<div style="left:290.8px;top:202.36px;width:46.2px;height:17.6px;background:#2a2d31;border-radius:4px;border:1.5px solid #141618;"></div>
<div class="t" style="left:296px;top:203.66px;font-size:14px;color:#c9c9c9;font-weight:bold;width:12px;text-align:center;font-style:italic;">e</div>
<svg style="left:319.5px;top:205.16px;" width="12" height="12" viewBox="0 0 12 12"><path d="M2 3 V9 M4.5 1 V11 M7 3 V9 M9.5 1 V11" stroke="#c9c9c9" stroke-width="1.5"/></svg>
<div style="left:340.3px;top:202.36px;width:46.5px;height:17.6px;background:#2a2d31;border-radius:4px;border:1.5px solid #141618;"></div>
<div class="t" style="left:344px;top:205.16px;font-size:12px;color:#c9c9c9;font-weight:bold;width:16px;text-align:center;">R</div>
<div class="t" style="left:367.5px;top:205.16px;font-size:12px;color:#c9c9c9;font-weight:bold;width:16px;text-align:center;">W</div>
<div style="left:390.4px;top:202.36px;width:21.6px;height:17.6px;background:#2a2d31;border-radius:4px;border:1.5px solid #141618;"></div>
<svg style="left:395.2px;top:205.66px;" width="12" height="11" viewBox="0 0 12 11"><path d="M1 1 H11 M1 4 H5 M7 4 H11 M1 7 H5 M7 7 H11 M1 10 H11" stroke="#c9c9c9" stroke-width="1.3"/></svg>
<div style="left:415.7px;top:202.36px;width:96.3px;height:17.2px;background:#26292c;border-radius:4px;border:1.5px solid #141618;"></div>
<svg style="left:419px;top:204.36px;" width="16" height="13" viewBox="0 0 16 13"><path d="M2 11 V2 L7.5 8 L13 2 V11Z" fill="#bdbdbd"/></svg>
<div style="left:435.8px;top:208.96px;width:70.8px;height:4px;background:#3d3f42;border-radius:2px;"></div>
<div style="left:464.5px;top:204.96px;width:12px;height:12px;background:#e2e2e2;border-radius:50%;"></div>
<div style="left:128.6px;top:222.84px;width:10.4px;height:45.9px;background:#e8bb3e;"></div>
<div style="left:139px;top:224.54px;width:1.2px;height:44.2px;background:#151617;"></div>
<div style="left:140.2px;top:224.54px;width:39.8px;height:44.2px;background:#e8bb3e;"></div>
<svg style="left:142.5px;top:229.54px;" width="18" height="16" viewBox="0 0 18 16"><path d="M0.5 8 H2.5 L4 5 L5.5 11 L7 2 L8.5 14 L10 4 L11.5 12 L13 6 L14 10 L15 8 H17" stroke="#111" stroke-width="1.3" fill="none" stroke-linejoin="round"/></svg>
<div class="t" style="left:147px;top:230.54px;font-size:12.5px;color:#151515;width:28px;text-align:right;">13</div>
<div style="left:185.5px;top:227.24px;width:47.9px;height:17.1px;background:#2a2d31;border-radius:4px;border:1.5px solid #141618;"></div>
<div class="t" style="left:189.5px;top:229.84px;font-size:12px;color:#c9c9c9;font-weight:bold;width:16px;text-align:center;">M</div>
<div class="t" style="left:213.5px;top:229.84px;font-size:12px;color:#c9c9c9;font-weight:bold;width:16px;text-align:center;">S</div>
<div class="t" style="left:243.5px;top:230.84px;font-size:13.0px;color:#e6e6e6;-webkit-text-stroke:0.3px #e6e6e6;">DR Left Crash</div>
<div style="left:415.7px;top:227.24px;width:96.3px;height:17.2px;background:#26292c;border-radius:4px;border:1.5px solid #141618;"></div>
<svg style="left:419px;top:229.24px;" width="16" height="13" viewBox="0 0 16 13"><path d="M2 11 L13 2 V11Z" fill="#bdbdbd"/></svg>
<div style="left:435.8px;top:233.84px;width:70.8px;height:4px;background:#3d3f42;border-radius:2px;"></div>
<div style="left:435.8px;top:233.84px;width:24.2px;height:4px;background:#c8c8c8;border-radius:2px;"></div>
<div style="left:454px;top:229.84px;width:12px;height:12px;background:#e2e2e2;border-radius:50%;"></div>
<div style="left:241px;top:248.24px;width:46.2px;height:17.6px;background:#2a2d31;border-radius:4px;border:1.5px solid #141618;"></div>
<div style="left:249px;top:253.54px;width:7px;height:7px;background:#5d5f62;border-radius:50%;"></div>
<svg style="left:268.5px;top:251.04px;" width="14" height="12" viewBox="0 0 14 12"><path d="M1 4 H4 L8 1 V11 L4 8 H1Z" fill="#5d5f62"/><path d="M10 3 Q12.5 6 10 9" stroke="#5d5f62" stroke-width="1.3" fill="none"/></svg>
<div style="left:290.8px;top:248.24px;width:46.2px;height:17.6px;background:#2a2d31;border-radius:4px;border:1.5px solid #141618;"></div>
<div class="t" style="left:296px;top:249.54px;font-size:14px;color:#c9c9c9;font-weight:bold;width:12px;text-align:center;font-style:italic;">e</div>
<svg style="left:318.5px;top:252.04px;" width="14" height="10" viewBox="0 0 14 10"><circle cx="4.5" cy="5" r="3.2" stroke="#c9c9c9" stroke-width="1.6" fill="none"/><circle cx="9.5" cy="5" r="3.2" stroke="#c9c9c9" stroke-width="1.6" fill="none"/></svg>
<div style="left:340.3px;top:248.24px;width:46.5px;height:17.6px;background:#2a2d31;border-radius:4px;border:1.5px solid #141618;"></div>
<div class="t" style="left:344px;top:251.04px;font-size:12px;color:#c9c9c9;font-weight:bold;width:16px;text-align:center;">R</div>
<div class="t" style="left:367.5px;top:251.04px;font-size:12px;color:#c9c9c9;font-weight:bold;width:16px;text-align:center;">W</div>
<div style="left:390.4px;top:248.24px;width:21.6px;height:17.6px;background:#2a2d31;border-radius:4px;border:1.5px solid #141618;"></div>
<svg style="left:395.2px;top:251.54px;" width="12" height="11" viewBox="0 0 12 11"><path d="M1 1 H11 M1 4 H5 M7 4 H11 M1 7 H5 M7 7 H11 M1 10 H11" stroke="#c9c9c9" stroke-width="1.3"/></svg>
<div style="left:128.6px;top:268.72px;width:10.4px;height:45.9px;background:#e8bb3e;"></div>
<div style="left:139px;top:270.42px;width:1.2px;height:44.2px;background:#151617;"></div>
<div style="left:140.2px;top:270.42px;width:39.8px;height:44.2px;background:#e8bb3e;"></div>
<svg style="left:142.5px;top:275.42px;" width="18" height="16" viewBox="0 0 18 16"><path d="M0.5 8 H2.5 L4 5 L5.5 11 L7 2 L8.5 14 L10 4 L11.5 12 L13 6 L14 10 L15 8 H17" stroke="#111" stroke-width="1.3" fill="none" stroke-linejoin="round"/></svg>
<div class="t" style="left:147px;top:276.42px;font-size:12.5px;color:#151515;width:28px;text-align:right;">14</div>
<div style="left:185.5px;top:273.12px;width:47.9px;height:17.1px;background:#2a2d31;border-radius:4px;border:1.5px solid #141618;"></div>
<div class="t" style="left:189.5px;top:275.72px;font-size:12px;color:#c9c9c9;font-weight:bold;width:16px;text-align:center;">M</div>
<div class="t" style="left:213.5px;top:275.72px;font-size:12px;color:#c9c9c9;font-weight:bold;width:16px;text-align:center;">S</div>
<div class="t" style="left:243.5px;top:276.72px;font-size:13.0px;color:#e6e6e6;-webkit-text-stroke:0.3px #e6e6e6;">DR Right Crash</div>
<div style="left:415.7px;top:273.12px;width:96.3px;height:17.2px;background:#26292c;border-radius:4px;border:1.5px solid #141618;"></div>
<svg style="left:419px;top:275.12px;" width="16" height="13" viewBox="0 0 16 13"><path d="M2 11 L13 2 V11Z" fill="#bdbdbd"/></svg>
<div style="left:435.8px;top:279.72px;width:70.8px;height:4px;background:#3d3f42;border-radius:2px;"></div>
<div style="left:435.8px;top:279.72px;width:24.2px;height:4px;background:#c8c8c8;border-radius:2px;"></div>
<div style="left:454px;top:275.72px;width:12px;height:12px;background:#e2e2e2;border-radius:50%;"></div>
<div style="left:241px;top:294.12px;width:46.2px;height:17.6px;background:#2a2d31;border-radius:4px;border:1.5px solid #141618;"></div>
<div style="left:249px;top:299.42px;width:7px;height:7px;background:#5d5f62;border-radius:50%;"></div>
<svg style="left:268.5px;top:296.92px;" width="14" height="12" viewBox="0 0 14 12"><path d="M1 4 H4 L8 1 V11 L4 8 H1Z" fill="#5d5f62"/><path d="M10 3 Q12.5 6 10 9" stroke="#5d5f62" stroke-width="1.3" fill="none"/></svg>
<div style="left:290.8px;top:294.12px;width:46.2px;height:17.6px;background:#2a2d31;border-radius:4px;border:1.5px solid #141618;"></div>
<div class="t" style="left:296px;top:295.42px;font-size:14px;color:#c9c9c9;font-weight:bold;width:12px;text-align:center;font-style:italic;">e</div>
<svg style="left:318.5px;top:297.92px;" width="14" height="10" viewBox="0 0 14 10"><circle cx="4.5" cy="5" r="3.2" stroke="#c9c9c9" stroke-width="1.6" fill="none"/><circle cx="9.5" cy="5" r="3.2" stroke="#c9c9c9" stroke-width="1.6" fill="none"/></svg>
<div style="left:340.3px;top:294.12px;width:46.5px;height:17.6px;background:#2a2d31;border-radius:4px;border:1.5px solid #141618;"></div>
<div class="t" style="left:344px;top:296.92px;font-size:12px;color:#c9c9c9;font-weight:bold;width:16px;text-align:center;">R</div>
<div class="t" style="left:367.5px;top:296.92px;font-size:12px;color:#c9c9c9;font-weight:bold;width:16px;text-align:center;">W</div>
<div style="left:390.4px;top:294.12px;width:21.6px;height:17.6px;background:#2a2d31;border-radius:4px;border:1.5px solid #141618;"></div>
<svg style="left:395.2px;top:297.42px;" width="12" height="11" viewBox="0 0 12 11"><path d="M1 1 H11 M1 4 H5 M7 4 H11 M1 7 H5 M7 7 H11 M1 10 H11" stroke="#c9c9c9" stroke-width="1.3"/></svg>
<div style="left:128.6px;top:314.6px;width:10.4px;height:45.9px;background:#e8bb3e;"></div>
<div style="left:139px;top:316.3px;width:1.2px;height:44.2px;background:#151617;"></div>
<div style="left:140.2px;top:316.3px;width:39.8px;height:44.2px;background:#e8bb3e;"></div>
<svg style="left:142.5px;top:321.3px;" width="18" height="16" viewBox="0 0 18 16"><path d="M0.5 8 H2.5 L4 5 L5.5 11 L7 2 L8.5 14 L10 4 L11.5 12 L13 6 L14 10 L15 8 H17" stroke="#111" stroke-width="1.3" fill="none" stroke-linejoin="round"/></svg>
<div class="t" style="left:147px;top:322.3px;font-size:12.5px;color:#151515;width:28px;text-align:right;">15</div>
<div style="left:185.5px;top:319px;width:47.9px;height:17.1px;background:#2a2d31;border-radius:4px;border:1.5px solid #141618;"></div>
<div class="t" style="left:189.5px;top:321.6px;font-size:12px;color:#c9c9c9;font-weight:bold;width:16px;text-align:center;">M</div>
<div class="t" style="left:213.5px;top:321.6px;font-size:12px;color:#c9c9c9;font-weight:bold;width:16px;text-align:center;">S</div>
<div class="t" style="left:243.5px;top:322.6px;font-size:13.0px;color:#e6e6e6;-webkit-text-stroke:0.3px #e6e6e6;">PK_4_Tambo_v1</div>
<div style="left:415.7px;top:319px;width:96.3px;height:17.2px;background:#26292c;border-radius:4px;border:1.5px solid #141618;"></div>
<svg style="left:419px;top:321px;" width="16" height="13" viewBox="0 0 16 13"><path d="M2 11 L13 2 V11Z" fill="#bdbdbd"/></svg>
<div style="left:435.8px;top:325.6px;width:70.8px;height:4px;background:#3d3f42;border-radius:2px;"></div>
<div style="left:435.8px;top:325.6px;width:24.2px;height:4px;background:#c8c8c8;border-radius:2px;"></div>
<div style="left:454px;top:321.6px;width:12px;height:12px;background:#e2e2e2;border-radius:50%;"></div>
<div style="left:241px;top:340px;width:46.2px;height:17.6px;background:#2a2d31;border-radius:4px;border:1.5px solid #141618;"></div>
<div style="left:249px;top:345.3px;width:7px;height:7px;background:#5d5f62;border-radius:50%;"></div>
<svg style="left:268.5px;top:342.8px;" width="14" height="12" viewBox="0 0 14 12"><path d="M1 4 H4 L8 1 V11 L4 8 H1Z" fill="#5d5f62"/><path d="M10 3 Q12.5 6 10 9" stroke="#5d5f62" stroke-width="1.3" fill="none"/></svg>
<div style="left:290.8px;top:340px;width:46.2px;height:17.6px;background:#2a2d31;border-radius:4px;border:1.5px solid #141618;"></div>
<div class="t" style="left:296px;top:341.3px;font-size:14px;color:#c9c9c9;font-weight:bold;width:12px;text-align:center;font-style:italic;">e</div>
<svg style="left:318.5px;top:343.8px;" width="14" height="10" viewBox="0 0 14 10"><circle cx="4.5" cy="5" r="3.2" stroke="#c9c9c9" stroke-width="1.6" fill="none"/><circle cx="9.5" cy="5" r="3.2" stroke="#c9c9c9" stroke-width="1.6" fill="none"/></svg>
<div style="left:340.3px;top:340px;width:46.5px;height:17.6px;background:#2a2d31;border-radius:4px;border:1.5px solid #141618;"></div>
<div class="t" style="left:344px;top:342.8px;font-size:12px;color:#c9c9c9;font-weight:bold;width:16px;text-align:center;">R</div>
<div class="t" style="left:367.5px;top:342.8px;font-size:12px;color:#c9c9c9;font-weight:bold;width:16px;text-align:center;">W</div>
<div style="left:390.4px;top:340px;width:21.6px;height:17.6px;background:#2a2d31;border-radius:4px;border:1.5px solid #141618;"></div>
<svg style="left:395.2px;top:343.3px;" width="12" height="11" viewBox="0 0 12 11"><path d="M1 1 H11 M1 4 H5 M7 4 H11 M1 7 H5 M7 7 H11 M1 10 H11" stroke="#c9c9c9" stroke-width="1.3"/></svg>
<div style="left:128.6px;top:360.48px;width:10.4px;height:45.9px;background:#e8bb3e;"></div>
<div style="left:139px;top:362.18px;width:1.2px;height:44.2px;background:#151617;"></div>
<div style="left:140.2px;top:362.18px;width:39.8px;height:44.2px;background:#e8bb3e;"></div>
<svg style="left:142.5px;top:367.18px;" width="18" height="16" viewBox="0 0 18 16"><path d="M0.5 8 H2.5 L4 5 L5.5 11 L7 2 L8.5 14 L10 4 L11.5 12 L13 6 L14 10 L15 8 H17" stroke="#111" stroke-width="1.3" fill="none" stroke-linejoin="round"/></svg>
<div class="t" style="left:147px;top:368.18px;font-size:12.5px;color:#151515;width:28px;text-align:right;">16</div>
<div style="left:185.5px;top:364.88px;width:47.9px;height:17.1px;background:#2a2d31;border-radius:4px;border:1.5px solid #141618;"></div>
<div class="t" style="left:189.5px;top:367.48px;font-size:12px;color:#c9c9c9;font-weight:bold;width:16px;text-align:center;">M</div>
<div class="t" style="left:213.5px;top:367.48px;font-size:12px;color:#c9c9c9;font-weight:bold;width:16px;text-align:center;">S</div>
<div class="t" style="left:243.5px;top:368.48px;font-size:13.0px;color:#e6e6e6;-webkit-text-stroke:0.3px #e6e6e6;">VK_3_Tambo_v2</div>
<div style="left:415.7px;top:364.88px;width:96.3px;height:17.2px;background:#26292c;border-radius:4px;border:1.5px solid #141618;"></div>
<svg style="left:419px;top:366.88px;" width="16" height="13" viewBox="0 0 16 13"><path d="M2 11 L13 2 V11Z" fill="#bdbdbd"/></svg>
<div style="left:435.8px;top:371.48px;width:70.8px;height:4px;background:#3d3f42;border-radius:2px;"></div>
<div style="left:435.8px;top:371.48px;width:26.2px;height:4px;background:#c8c8c8;border-radius:2px;"></div>
<div style="left:456px;top:367.48px;width:12px;height:12px;background:#e2e2e2;border-radius:50%;"></div>
<div style="left:241px;top:385.88px;width:46.2px;height:17.6px;background:#2a2d31;border-radius:4px;border:1.5px solid #141618;"></div>
<div style="left:249px;top:391.18px;width:7px;height:7px;background:#5d5f62;border-radius:50%;"></div>
<svg style="left:268.5px;top:388.68px;" width="14" height="12" viewBox="0 0 14 12"><path d="M1 4 H4 L8 1 V11 L4 8 H1Z" fill="#5d5f62"/><path d="M10 3 Q12.5 6 10 9" stroke="#5d5f62" stroke-width="1.3" fill="none"/></svg>
<div style="left:290.8px;top:385.88px;width:46.2px;height:17.6px;background:#2a2d31;border-radius:4px;border:1.5px solid #141618;"></div>
<div class="t" style="left:296px;top:387.18px;font-size:14px;color:#c9c9c9;font-weight:bold;width:12px;text-align:center;font-style:italic;">e</div>
<svg style="left:318.5px;top:389.68px;" width="14" height="10" viewBox="0 0 14 10"><circle cx="4.5" cy="5" r="3.2" stroke="#c9c9c9" stroke-width="1.6" fill="none"/><circle cx="9.5" cy="5" r="3.2" stroke="#c9c9c9" stroke-width="1.6" fill="none"/></svg>
<div style="left:340.3px;top:385.88px;width:46.5px;height:17.6px;background:#2a2d31;border-radius:4px;border:1.5px solid #141618;"></div>
<div class="t" style="left:344px;top:388.68px;font-size:12px;color:#c9c9c9;font-weight:bold;width:16px;text-align:center;">R</div>
<div class="t" style="left:367.5px;top:388.68px;font-size:12px;color:#c9c9c9;font-weight:bold;width:16px;text-align:center;">W</div>
<div style="left:390.4px;top:385.88px;width:21.6px;height:17.6px;background:#2a2d31;border-radius:4px;border:1.5px solid #141618;"></div>
<svg style="left:395.2px;top:389.18px;" width="12" height="11" viewBox="0 0 12 11"><path d="M1 1 H11 M1 4 H5 M7 4 H11 M1 7 H5 M7 7 H11 M1 10 H11" stroke="#c9c9c9" stroke-width="1.3"/></svg>
<div style="left:128.6px;top:406.36px;width:10.4px;height:45.9px;background:#e8bb3e;"></div>
<div style="left:139px;top:408.06px;width:1.2px;height:44.2px;background:#151617;"></div>
<div style="left:140.2px;top:408.06px;width:39.8px;height:44.2px;background:#e8bb3e;"></div>
<svg style="left:142.5px;top:413.06px;" width="18" height="16" viewBox="0 0 18 16"><path d="M2 4 V12 M5 1 V15 M8 3 V13 M11 1 V15 M14 4 V12" stroke="#111" stroke-width="1.8"/></svg>
<div class="t" style="left:147px;top:414.06px;font-size:12.5px;color:#151515;width:28px;text-align:right;">17</div>
<div style="left:185.5px;top:410.76px;width:47.9px;height:17.1px;background:#2a2d31;border-radius:4px;border:1.5px solid #141618;"></div>
<div class="t" style="left:189.5px;top:413.36px;font-size:12px;color:#c9c9c9;font-weight:bold;width:16px;text-align:center;">M</div>
<div class="t" style="left:213.5px;top:413.36px;font-size:12px;color:#c9c9c9;font-weight:bold;width:16px;text-align:center;">S</div>
<div class="t" style="left:243.5px;top:414.36px;font-size:13.0px;color:#e6e6e6;-webkit-text-stroke:0.3px #e6e6e6;">DR Shaker</div>
<div style="left:415.7px;top:410.76px;width:96.3px;height:17.2px;background:#26292c;border-radius:4px;border:1.5px solid #141618;"></div>
<svg style="left:419px;top:412.76px;" width="16" height="13" viewBox="0 0 16 13"><path d="M2 11 L13 2 V11Z" fill="#bdbdbd"/></svg>
<div style="left:435.8px;top:417.36px;width:70.8px;height:4px;background:#3d3f42;border-radius:2px;"></div>
<div style="left:435.8px;top:417.36px;width:20.2px;height:4px;background:#c8c8c8;border-radius:2px;"></div>
<div style="left:450px;top:413.36px;width:12px;height:12px;background:#e2e2e2;border-radius:50%;"></div>
<div style="left:241px;top:431.76px;width:46.2px;height:17.6px;background:#2a2d31;border-radius:4px;border:1.5px solid #141618;"></div>
<div style="left:249px;top:437.06px;width:7px;height:7px;background:#c9c9c9;border-radius:50%;"></div>
<svg style="left:268.5px;top:434.56px;" width="14" height="12" viewBox="0 0 14 12"><path d="M1 4 H4 L8 1 V11 L4 8 H1Z" fill="#c9c9c9"/><path d="M10 3 Q12.5 6 10 9" stroke="#c9c9c9" stroke-width="1.3" fill="none"/></svg>
<div style="left:290.8px;top:431.76px;width:46.2px;height:17.6px;background:#2a2d31;border-radius:4px;border:1.5px solid #141618;"></div>
<div class="t" style="left:296px;top:433.06px;font-size:14px;color:#c9c9c9;font-weight:bold;width:12px;text-align:center;font-style:italic;">e</div>
<svg style="left:319.5px;top:434.56px;" width="12" height="12" viewBox="0 0 12 12"><path d="M2 3 V9 M4.5 1 V11 M7 3 V9 M9.5 1 V11" stroke="#c9c9c9" stroke-width="1.5"/></svg>
<div style="left:340.3px;top:431.76px;width:46.5px;height:17.6px;background:#2a2d31;border-radius:4px;border:1.5px solid #141618;"></div>
<div class="t" style="left:344px;top:434.56px;font-size:12px;color:#c9c9c9;font-weight:bold;width:16px;text-align:center;">R</div>
<div class="t" style="left:367.5px;top:434.56px;font-size:12px;color:#c9c9c9;font-weight:bold;width:16px;text-align:center;">W</div>
<div style="left:390.4px;top:431.76px;width:21.6px;height:17.6px;background:#2a2d31;border-radius:4px;border:1.5px solid #141618;"></div>
<svg style="left:395.2px;top:435.06px;" width="12" height="11" viewBox="0 0 12 11"><path d="M1 1 H11 M1 4 H5 M7 4 H11 M1 7 H5 M7 7 H11 M1 10 H11" stroke="#c9c9c9" stroke-width="1.3"/></svg>
<div style="left:415.7px;top:431.76px;width:96.3px;height:17.2px;background:#26292c;border-radius:4px;border:1.5px solid #141618;"></div>
<svg style="left:419px;top:433.76px;" width="16" height="13" viewBox="0 0 16 13"><path d="M2 11 V2 L7.5 8 L13 2 V11Z" fill="#bdbdbd"/></svg>
<div style="left:435.8px;top:438.36px;width:70.8px;height:4px;background:#3d3f42;border-radius:2px;"></div>
<div style="left:464.5px;top:434.36px;width:12px;height:12px;background:#e2e2e2;border-radius:50%;"></div>
<div style="left:128.6px;top:452.24px;width:10.4px;height:45.9px;background:#e8bb3e;"></div>
<div style="left:139px;top:453.94px;width:1.2px;height:44.2px;background:#151617;"></div>
<div style="left:140.2px;top:453.94px;width:39.8px;height:44.2px;background:#e8bb3e;"></div>
<svg style="left:142.5px;top:458.94px;" width="18" height="16" viewBox="0 0 18 16"><path d="M0.5 8 H2.5 L4 5 L5.5 11 L7 2 L8.5 14 L10 4 L11.5 12 L13 6 L14 10 L15 8 H17" stroke="#111" stroke-width="1.3" fill="none" stroke-linejoin="round"/></svg>
<div class="t" style="left:147px;top:459.94px;font-size:12.5px;color:#151515;width:28px;text-align:right;">18</div>
<div style="left:185.5px;top:456.64px;width:47.9px;height:17.1px;background:#2a2d31;border-radius:4px;border:1.5px solid #141618;"></div>
<div class="t" style="left:189.5px;top:459.24px;font-size:12px;color:#c9c9c9;font-weight:bold;width:16px;text-align:center;">M</div>
<div class="t" style="left:213.5px;top:459.24px;font-size:12px;color:#c9c9c9;font-weight:bold;width:16px;text-align:center;">S</div>
<div class="t" style="left:243.5px;top:460.24px;font-size:13.0px;color:#e6e6e6;-webkit-text-stroke:0.3px #e6e6e6;">DR Stick Hits</div>
<div style="left:415.7px;top:456.64px;width:96.3px;height:17.2px;background:#26292c;border-radius:4px;border:1.5px solid #141618;"></div>
<svg style="left:419px;top:458.64px;" width="16" height="13" viewBox="0 0 16 13"><path d="M2 11 L13 2 V11Z" fill="#bdbdbd"/></svg>
<div style="left:435.8px;top:463.24px;width:70.8px;height:4px;background:#3d3f42;border-radius:2px;"></div>
<div style="left:435.8px;top:463.24px;width:53.2px;height:4px;background:#c8c8c8;border-radius:2px;"></div>
<div style="left:483px;top:459.24px;width:12px;height:12px;background:#e2e2e2;border-radius:50%;"></div>
<div style="left:241px;top:477.64px;width:46.2px;height:17.6px;background:#2a2d31;border-radius:4px;border:1.5px solid #141618;"></div>
<div style="left:249px;top:482.94px;width:7px;height:7px;background:#5d5f62;border-radius:50%;"></div>
<svg style="left:268.5px;top:480.44px;" width="14" height="12" viewBox="0 0 14 12"><path d="M1 4 H4 L8 1 V11 L4 8 H1Z" fill="#5d5f62"/><path d="M10 3 Q12.5 6 10 9" stroke="#5d5f62" stroke-width="1.3" fill="none"/></svg>
<div style="left:290.8px;top:477.64px;width:46.2px;height:17.6px;background:#2a2d31;border-radius:4px;border:1.5px solid #141618;"></div>
<div class="t" style="left:296px;top:478.94px;font-size:14px;color:#c9c9c9;font-weight:bold;width:12px;text-align:center;font-style:italic;">e</div>
<svg style="left:318.5px;top:481.44px;" width="14" height="10" viewBox="0 0 14 10"><circle cx="4.5" cy="5" r="3.2" stroke="#c9c9c9" stroke-width="1.6" fill="none"/><circle cx="9.5" cy="5" r="3.2" stroke="#c9c9c9" stroke-width="1.6" fill="none"/></svg>
<div style="left:340.3px;top:477.64px;width:46.5px;height:17.6px;background:#2a2d31;border-radius:4px;border:1.5px solid #141618;"></div>
<div class="t" style="left:344px;top:480.44px;font-size:12px;color:#c9c9c9;font-weight:bold;width:16px;text-align:center;">R</div>
<div class="t" style="left:367.5px;top:480.44px;font-size:12px;color:#c9c9c9;font-weight:bold;width:16px;text-align:center;">W</div>
<div style="left:390.4px;top:477.64px;width:21.6px;height:17.6px;background:#2a2d31;border-radius:4px;border:1.5px solid #141618;"></div>
<svg style="left:395.2px;top:480.94px;" width="12" height="11" viewBox="0 0 12 11"><path d="M1 1 H11 M1 4 H5 M7 4 H11 M1 7 H5 M7 7 H11 M1 10 H11" stroke="#c9c9c9" stroke-width="1.3"/></svg>
<div style="left:128.6px;top:499.82px;width:39.9px;height:45.9px;background:#5f82ee;"></div>
<svg style="left:131px;top:505.82px;" width="18" height="14" viewBox="0 0 18 14"><path d="M1 2 H6 L7.5 4 H14 V6 H4 L1 13Z" fill="#111"/><path d="M4 6.5 H17 L14 13 H1Z" fill="#111"/></svg>
<div style="left:174.7px;top:502.52px;width:47.6px;height:17.1px;background:#2a2d31;border-radius:4px;border:1.5px solid #141618;"></div>
<div class="t" style="left:178.5px;top:505.12px;font-size:12px;color:#c9c9c9;font-weight:bold;width:16px;text-align:center;">M</div>
<div class="t" style="left:202.5px;top:505.12px;font-size:12px;color:#c9c9c9;font-weight:bold;width:16px;text-align:center;">S</div>
<div class="t" style="left:232.7px;top:506.12px;font-size:13.0px;color:#e6e6e6;-webkit-text-stroke:0.3px #e6e6e6;">Bass</div>
<div style="left:230px;top:523.52px;width:46px;height:17.6px;background:#2a2d31;border-radius:4px;border:1.5px solid #141618;"></div>
<div style="left:238px;top:528.82px;width:7px;height:7px;background:#c9c9c9;border-radius:50%;"></div>
<svg style="left:257.5px;top:526.32px;" width="14" height="12" viewBox="0 0 14 12"><path d="M1 4 H4 L8 1 V11 L4 8 H1Z" fill="#c9c9c9"/><path d="M10 3 Q12.5 6 10 9" stroke="#c9c9c9" stroke-width="1.3" fill="none"/></svg>
<div style="left:279.7px;top:523.52px;width:46.6px;height:17.6px;background:#2a2d31;border-radius:4px;border:1.5px solid #141618;"></div>
<div style="left:285.5px;top:529.82px;width:10px;height:1.8px;background:#c9c9c9;"></div>
<div style="left:285.5px;top:533.32px;width:10px;height:1.8px;background:#c9c9c9;"></div>
<svg style="left:303px;top:525.82px;" width="12" height="13" viewBox="0 0 12 13"><path d="M2 6 L6 2 L10 6 M2 11 L6 7 L10 11" stroke="#c9c9c9" stroke-width="1.4" fill="none"/></svg>
<div style="left:128.6px;top:544px;width:10.4px;height:45.9px;background:#5f82ee;"></div>
<div style="left:139px;top:545.7px;width:1.2px;height:44.2px;background:#151617;"></div>
<div style="left:140.2px;top:545.7px;width:39.8px;height:44.2px;background:#5f82ee;"></div>
<svg style="left:142.5px;top:550.7px;" width="18" height="16" viewBox="0 0 18 16"><path d="M3 1 V11 M8 1 V11 M13 1 V11" stroke="#111" stroke-width="1.6"/><path d="M1 5 H5 M6 8 H10 M11 4 H15" stroke="#111" stroke-width="2.4"/><path d="M3.5 11 V14 H12.5 V11" stroke="#111" stroke-width="1.8" fill="none"/></svg>
<div class="t" style="left:147px;top:551.7px;font-size:12.5px;color:#151515;width:28px;text-align:right;">19</div>
<div style="left:185.5px;top:548.4px;width:47.9px;height:17.1px;background:#2a2d31;border-radius:4px;border:1.5px solid #141618;"></div>
<div class="t" style="left:189.5px;top:551px;font-size:12px;color:#c9c9c9;font-weight:bold;width:16px;text-align:center;">M</div>
<div class="t" style="left:213.5px;top:551px;font-size:12px;color:#c9c9c9;font-weight:bold;width:16px;text-align:center;">S</div>
<div class="t" style="left:243.5px;top:552px;font-size:13.0px;color:#e6e6e6;-webkit-text-stroke:0.3px #e6e6e6;">GROUP Bass</div>
<div style="left:415.7px;top:548.4px;width:96.3px;height:17.2px;background:#26292c;border-radius:4px;border:1.5px solid #141618;"></div>
<svg style="left:419px;top:550.4px;" width="16" height="13" viewBox="0 0 16 13"><path d="M2 11 L13 2 V11Z" fill="#bdbdbd"/></svg>
<div style="left:435.8px;top:555px;width:70.8px;height:4px;background:#3d3f42;border-radius:2px;"></div>
<div style="left:435.8px;top:555px;width:41.2px;height:4px;background:#c8c8c8;border-radius:2px;"></div>
<div style="left:471px;top:551px;width:12px;height:12px;background:#e2e2e2;border-radius:50%;"></div>
<div style="left:241px;top:569.4px;width:46.2px;height:17.6px;background:#2a2d31;border-radius:4px;border:1.5px solid #141618;"></div>
<div class="t" style="left:244.5px;top:572.2px;font-size:12px;color:#c9c9c9;font-weight:bold;width:16px;text-align:center;">R</div>
<div class="t" style="left:268px;top:572.2px;font-size:12px;color:#c9c9c9;font-weight:bold;width:16px;text-align:center;">W</div>
<div style="left:290.8px;top:569.4px;width:46.2px;height:17.6px;background:#2a2d31;border-radius:4px;border:1.5px solid #141618;"></div>
<div class="t" style="left:296px;top:570.7px;font-size:14px;color:#c9c9c9;font-weight:bold;width:12px;text-align:center;font-style:italic;">e</div>
<svg style="left:318.5px;top:573.2px;" width="14" height="10" viewBox="0 0 14 10"><circle cx="4.5" cy="5" r="3.2" stroke="#c9c9c9" stroke-width="1.6" fill="none"/><circle cx="9.5" cy="5" r="3.2" stroke="#c9c9c9" stroke-width="1.6" fill="none"/></svg>
<div style="left:340.3px;top:569.4px;width:71.7px;height:17.6px;background:#1f2124;border-radius:4px;border:1.5px solid #141618;"></div>
<div class="t" style="left:360px;top:573.7px;font-size:10.5px;color:#c8c8c8;width:40px;text-align:right;">-4.55</div>
<svg style="left:402px;top:572.4px;" width="8" height="12" viewBox="0 0 8 12"><path d="M4 1 L7 5 H1Z M4 11 L7 7 H1Z" fill="#c8c8c8"/></svg>
<div style="left:415.7px;top:569.4px;width:96.3px;height:17.2px;background:#26292c;border-radius:4px;border:1.5px solid #141618;"></div>
<svg style="left:419px;top:571.4px;" width="16" height="13" viewBox="0 0 16 13"><path d="M2 11 V2 L7.5 8 L13 2 V11Z" fill="#bdbdbd"/></svg>
<div style="left:435.8px;top:576px;width:70.8px;height:4px;background:#3d3f42;border-radius:2px;"></div>
<div style="left:464.5px;top:572px;width:12px;height:12px;background:#e2e2e2;border-radius:50%;"></div>
<div style="left:128.6px;top:589.88px;width:10.4px;height:45.9px;background:#5f82ee;"></div>
<div style="left:139px;top:591.58px;width:1.2px;height:44.2px;background:#151617;"></div>
<div style="left:140.2px;top:591.58px;width:39.8px;height:44.2px;background:#5f82ee;"></div>
<svg style="left:142.5px;top:596.58px;" width="18" height="16" viewBox="0 0 18 16"><path d="M1 1h3v13h-3zM5 1h3v13h-3zM9 1h3v13h-3zM13 1h3v13h-3z" fill="#111"/></svg>
<div class="t" style="left:147px;top:597.58px;font-size:12.5px;color:#151515;width:28px;text-align:right;">20</div>
<div style="left:185.5px;top:594.28px;width:47.9px;height:17.1px;background:#2a2d31;border-radius:4px;border:1.5px solid #141618;"></div>
<div class="t" style="left:189.5px;top:596.88px;font-size:12px;color:#c9c9c9;font-weight:bold;width:16px;text-align:center;">M</div>
<div class="t" style="left:213.5px;top:596.88px;font-size:12px;color:#c9c9c9;font-weight:bold;width:16px;text-align:center;">S</div>
<div class="t" style="left:243.5px;top:597.88px;font-size:13.0px;color:#e6e6e6;-webkit-text-stroke:0.3px #e6e6e6;">BA P Bass</div>
<div style="left:415.7px;top:594.28px;width:96.3px;height:17.2px;background:#26292c;border-radius:4px;border:1.5px solid #141618;"></div>
<svg style="left:419px;top:596.28px;" width="16" height="13" viewBox="0 0 16 13"><path d="M2 11 L13 2 V11Z" fill="#bdbdbd"/></svg>
<div style="left:435.8px;top:600.88px;width:70.8px;height:4px;background:#3d3f42;border-radius:2px;"></div>
<div style="left:435.8px;top:600.88px;width:42.2px;height:4px;background:#c8c8c8;border-radius:2px;"></div>
<div style="left:472px;top:596.88px;width:12px;height:12px;background:#e2e2e2;border-radius:50%;"></div>
<div style="left:241px;top:615.28px;width:46.2px;height:17.6px;background:#2a2d31;border-radius:4px;border:1.5px solid #141618;"></div>
<div style="left:249px;top:620.58px;width:7px;height:7px;background:#c9c9c9;border-radius:50%;"></div>
<svg style="left:268.5px;top:618.08px;" width="14" height="12" viewBox="0 0 14 12"><path d="M1 4 H4 L8 1 V11 L4 8 H1Z" fill="#c9c9c9"/><path d="M10 3 Q12.5 6 10 9" stroke="#c9c9c9" stroke-width="1.3" fill="none"/></svg>
<div style="left:290.8px;top:615.28px;width:46.2px;height:17.6px;background:#2a2d31;border-radius:4px;border:1.5px solid #141618;"></div>
<div class="t" style="left:296px;top:616.58px;font-size:14px;color:#c9c9c9;font-weight:bold;width:12px;text-align:center;font-style:italic;">e</div>
<svg style="left:319.5px;top:618.58px;" width="12" height="11" viewBox="0 0 12 11"><rect x="0.5" y="0" width="11" height="11" fill="#c9c9c9"/><path d="M3 0 V11 M6 0 V11 M9 0 V11" stroke="#2a2d31" stroke-width="1"/><path d="M3 7 V11 M6 7 V11 M9 7 V11" stroke="#2a2d31" stroke-width="0.8"/></svg>
<div style="left:340.3px;top:615.28px;width:46.5px;height:17.6px;background:#2a2d31;border-radius:4px;border:1.5px solid #141618;"></div>
<div class="t" style="left:344px;top:618.08px;font-size:12px;color:#c9c9c9;font-weight:bold;width:16px;text-align:center;">R</div>
<div class="t" style="left:367.5px;top:618.08px;font-size:12px;color:#c9c9c9;font-weight:bold;width:16px;text-align:center;">W</div>
<div style="left:390.4px;top:615.28px;width:21.6px;height:17.6px;background:#2a2d31;border-radius:4px;border:1.5px solid #141618;"></div>
<svg style="left:395.2px;top:618.58px;" width="12" height="11" viewBox="0 0 12 11"><path d="M1 1 H11 M1 4 H5 M7 4 H11 M1 7 H5 M7 7 H11 M1 10 H11" stroke="#c9c9c9" stroke-width="1.3"/></svg>
<div style="left:415.7px;top:615.28px;width:96.3px;height:17.2px;background:#26292c;border-radius:4px;border:1.5px solid #141618;"></div>
<svg style="left:419px;top:617.28px;" width="16" height="13" viewBox="0 0 16 13"><path d="M2 11 V2 L7.5 8 L13 2 V11Z" fill="#bdbdbd"/></svg>
<div style="left:435.8px;top:621.88px;width:70.8px;height:4px;background:#3d3f42;border-radius:2px;"></div>
<div style="left:464.5px;top:617.88px;width:12px;height:12px;background:#e2e2e2;border-radius:50%;"></div>
<div style="left:128.6px;top:635.76px;width:10.4px;height:45.9px;background:#5f82ee;"></div>
<div style="left:139px;top:637.46px;width:1.2px;height:44.2px;background:#151617;"></div>
<div style="left:140.2px;top:637.46px;width:39.8px;height:44.2px;background:#5f82ee;"></div>
<svg style="left:142.5px;top:642.46px;" width="18" height="16" viewBox="0 0 18 16"><path d="M1 1h3v13h-3zM5 1h3v13h-3zM9 1h3v13h-3zM13 1h3v13h-3z" fill="#111"/></svg>
<div class="t" style="left:147px;top:643.46px;font-size:12.5px;color:#151515;width:28px;text-align:right;">21</div>
<div style="left:185.5px;top:640.16px;width:47.9px;height:17.1px;background:#2a2d31;border-radius:4px;border:1.5px solid #141618;"></div>
<div class="t" style="left:189.5px;top:642.76px;font-size:12px;color:#c9c9c9;font-weight:bold;width:16px;text-align:center;">M</div>
<div class="t" style="left:213.5px;top:642.76px;font-size:12px;color:#c9c9c9;font-weight:bold;width:16px;text-align:center;">S</div>
<div class="t" style="left:243.5px;top:643.76px;font-size:13.0px;color:#e6e6e6;-webkit-text-stroke:0.3px #e6e6e6;">BA Upright Bass</div>
<div style="left:415.7px;top:640.16px;width:96.3px;height:17.2px;background:#26292c;border-radius:4px;border:1.5px solid #141618;"></div>
<svg style="left:419px;top:642.16px;" width="16" height="13" viewBox="0 0 16 13"><path d="M2 11 L13 2 V11Z" fill="#bdbdbd"/></svg>
<div style="left:435.8px;top:646.76px;width:70.8px;height:4px;background:#3d3f42;border-radius:2px;"></div>
<div style="left:435.8px;top:646.76px;width:32.2px;height:4px;background:#c8c8c8;border-radius:2px;"></div>
<div style="left:462px;top:642.76px;width:12px;height:12px;background:#e2e2e2;border-radius:50%;"></div>
<div style="left:241px;top:661.16px;width:46.2px;height:17.6px;background:#2a2d31;border-radius:4px;border:1.5px solid #141618;"></div>
<div style="left:249px;top:666.46px;width:7px;height:7px;background:#c9c9c9;border-radius:50%;"></div>
<svg style="left:268.5px;top:663.96px;" width="14" height="12" viewBox="0 0 14 12"><path d="M1 4 H4 L8 1 V11 L4 8 H1Z" fill="#c9c9c9"/><path d="M10 3 Q12.5 6 10 9" stroke="#c9c9c9" stroke-width="1.3" fill="none"/></svg>
<div style="left:290.8px;top:661.16px;width:46.2px;height:17.6px;background:#2a2d31;border-radius:4px;border:1.5px solid #141618;"></div>
<div class="t" style="left:296px;top:662.46px;font-size:14px;color:#c9c9c9;font-weight:bold;width:12px;text-align:center;font-style:italic;">e</div>
<svg style="left:319.5px;top:664.46px;" width="12" height="11" viewBox="0 0 12 11"><rect x="0.5" y="0" width="11" height="11" fill="#c9c9c9"/><path d="M3 0 V11 M6 0 V11 M9 0 V11" stroke="#2a2d31" stroke-width="1"/><path d="M3 7 V11 M6 7 V11 M9 7 V11" stroke="#2a2d31" stroke-width="0.8"/></svg>
<div style="left:340.3px;top:661.16px;width:46.5px;height:17.6px;background:#2a2d31;border-radius:4px;border:1.5px solid #141618;"></div>
<div class="t" style="left:344px;top:663.96px;font-size:12px;color:#c9c9c9;font-weight:bold;width:16px;text-align:center;">R</div>
<div class="t" style="left:367.5px;top:663.96px;font-size:12px;color:#c9c9c9;font-weight:bold;width:16px;text-align:center;">W</div>
<div style="left:390.4px;top:661.16px;width:21.6px;height:17.6px;background:#2a2d31;border-radius:4px;border:1.5px solid #141618;"></div>
<svg style="left:395.2px;top:664.46px;" width="12" height="11" viewBox="0 0 12 11"><path d="M1 1 H11 M1 4 H5 M7 4 H11 M1 7 H5 M7 7 H11 M1 10 H11" stroke="#c9c9c9" stroke-width="1.3"/></svg>
<div style="left:415.7px;top:661.16px;width:96.3px;height:17.2px;background:#26292c;border-radius:4px;border:1.5px solid #141618;"></div>
<svg style="left:419px;top:663.16px;" width="16" height="13" viewBox="0 0 16 13"><path d="M2 11 V2 L7.5 8 L13 2 V11Z" fill="#bdbdbd"/></svg>
<div style="left:435.8px;top:667.76px;width:70.8px;height:4px;background:#3d3f42;border-radius:2px;"></div>
<div style="left:464.5px;top:663.76px;width:12px;height:12px;background:#e2e2e2;border-radius:50%;"></div>
<div style="left:128.6px;top:683.34px;width:39.9px;height:45.9px;background:#2ecccc;"></div>
<svg style="left:131px;top:689.34px;" width="18" height="14" viewBox="0 0 18 14"><path d="M1 2 H6 L7.5 4 H14 V6 H4 L1 13Z" fill="#111"/><path d="M4 6.5 H17 L14 13 H1Z" fill="#111"/></svg>
<div style="left:174.7px;top:686.04px;width:47.6px;height:17.1px;background:#2a2d31;border-radius:4px;border:1.5px solid #141618;"></div>
<div class="t" style="left:178.5px;top:688.64px;font-size:12px;color:#c9c9c9;font-weight:bold;width:16px;text-align:center;">M</div>
<div class="t" style="left:202.5px;top:688.64px;font-size:12px;color:#c9c9c9;font-weight:bold;width:16px;text-align:center;">S</div>
<div class="t" style="left:232.7px;top:689.64px;font-size:13.0px;color:#e6e6e6;-webkit-text-stroke:0.3px #e6e6e6;">Guitars</div>
<div style="left:230px;top:707.04px;width:46px;height:17.6px;background:#2a2d31;border-radius:4px;border:1.5px solid #141618;"></div>
<div style="left:238px;top:712.34px;width:7px;height:7px;background:#c9c9c9;border-radius:50%;"></div>
<svg style="left:257.5px;top:709.84px;" width="14" height="12" viewBox="0 0 14 12"><path d="M1 4 H4 L8 1 V11 L4 8 H1Z" fill="#c9c9c9"/><path d="M10 3 Q12.5 6 10 9" stroke="#c9c9c9" stroke-width="1.3" fill="none"/></svg>
<div style="left:279.7px;top:707.04px;width:46.6px;height:17.6px;background:#2a2d31;border-radius:4px;border:1.5px solid #141618;"></div>
<div style="left:285.5px;top:713.34px;width:10px;height:1.8px;background:#c9c9c9;"></div>
<div style="left:285.5px;top:716.84px;width:10px;height:1.8px;background:#c9c9c9;"></div>
<svg style="left:303px;top:709.34px;" width="12" height="13" viewBox="0 0 12 13"><path d="M2 6 L6 2 L10 6 M2 11 L6 7 L10 11" stroke="#c9c9c9" stroke-width="1.4" fill="none"/></svg>
<div style="left:128.6px;top:727.52px;width:10.4px;height:45.9px;background:#2ecccc;"></div>
<div style="left:139px;top:729.22px;width:1.2px;height:44.2px;background:#151617;"></div>
<div style="left:140.2px;top:729.22px;width:39.8px;height:44.2px;background:#2ecccc;"></div>
<svg style="left:142.5px;top:734.22px;" width="18" height="16" viewBox="0 0 18 16"><path d="M3 1 V11 M8 1 V11 M13 1 V11" stroke="#111" stroke-width="1.6"/><path d="M1 5 H5 M6 8 H10 M11 4 H15" stroke="#111" stroke-width="2.4"/><path d="M3.5 11 V14 H12.5 V11" stroke="#111" stroke-width="1.8" fill="none"/></svg>
<div class="t" style="left:147px;top:735.22px;font-size:12.5px;color:#151515;width:28px;text-align:right;">22</div>
<div style="left:185.5px;top:731.92px;width:47.9px;height:17.1px;background:#2a2d31;border-radius:4px;border:1.5px solid #141618;"></div>
<div class="t" style="left:189.5px;top:734.52px;font-size:12px;color:#c9c9c9;font-weight:bold;width:16px;text-align:center;">M</div>
<div class="t" style="left:213.5px;top:734.52px;font-size:12px;color:#c9c9c9;font-weight:bold;width:16px;text-align:center;">S</div>
<div class="t" style="left:243.5px;top:735.52px;font-size:13.0px;color:#e6e6e6;-webkit-text-stroke:0.3px #e6e6e6;">GROUP Electric Guitars</div>
<div style="left:415.7px;top:731.92px;width:96.3px;height:17.2px;background:#26292c;border-radius:4px;border:1.5px solid #141618;"></div>
<svg style="left:419px;top:733.92px;" width="16" height="13" viewBox="0 0 16 13"><path d="M2 11 L13 2 V11Z" fill="#bdbdbd"/></svg>
<div style="left:435.8px;top:738.52px;width:70.8px;height:4px;background:#3d3f42;border-radius:2px;"></div>
<div style="left:435.8px;top:738.52px;width:40.2px;height:4px;background:#c8c8c8;border-radius:2px;"></div>
<div style="left:470px;top:734.52px;width:12px;height:12px;background:#e2e2e2;border-radius:50%;"></div>
<div style="left:241px;top:752.92px;width:46.2px;height:17.6px;background:#2a2d31;border-radius:4px;border:1.5px solid #141618;"></div>
<div class="t" style="left:244.5px;top:755.72px;font-size:12px;color:#c9c9c9;font-weight:bold;width:16px;text-align:center;">R</div>
<div class="t" style="left:268px;top:755.72px;font-size:12px;color:#c9c9c9;font-weight:bold;width:16px;text-align:center;">W</div>
<div style="left:290.8px;top:752.92px;width:46.2px;height:17.6px;background:#2a2d31;border-radius:4px;border:1.5px solid #141618;"></div>
<div class="t" style="left:296px;top:754.22px;font-size:14px;color:#c9c9c9;font-weight:bold;width:12px;text-align:center;font-style:italic;">e</div>
<svg style="left:318.5px;top:756.72px;" width="14" height="10" viewBox="0 0 14 10"><circle cx="4.5" cy="5" r="3.2" stroke="#c9c9c9" stroke-width="1.6" fill="none"/><circle cx="9.5" cy="5" r="3.2" stroke="#c9c9c9" stroke-width="1.6" fill="none"/></svg>
<div style="left:340.3px;top:752.92px;width:71.7px;height:17.6px;background:#1f2124;border-radius:4px;border:1.5px solid #141618;"></div>
<div class="t" style="left:360px;top:757.22px;font-size:10.5px;color:#c8c8c8;width:40px;text-align:right;">-5.00</div>
<svg style="left:402px;top:755.92px;" width="8" height="12" viewBox="0 0 8 12"><path d="M4 1 L7 5 H1Z M4 11 L7 7 H1Z" fill="#c8c8c8"/></svg>
<div style="left:415.7px;top:752.92px;width:96.3px;height:17.2px;background:#26292c;border-radius:4px;border:1.5px solid #141618;"></div>
<svg style="left:419px;top:754.92px;" width="16" height="13" viewBox="0 0 16 13"><path d="M2 11 V2 L7.5 8 L13 2 V11Z" fill="#bdbdbd"/></svg>
<div style="left:435.8px;top:759.52px;width:70.8px;height:4px;background:#3d3f42;border-radius:2px;"></div>
<div style="left:464.5px;top:755.52px;width:12px;height:12px;background:#e2e2e2;border-radius:50%;"></div>
<div style="left:241.8px;top:753.72px;width:22px;height:16px;background:#2fb52f;border-radius:3px 0 0 3px;"></div>
<div class="t" style="left:244.5px;top:755.72px;font-size:12px;color:#0b230b;font-weight:bold;width:16px;text-align:center;">R</div>
<div style="left:128.6px;top:773.4px;width:10.4px;height:45.9px;background:#2ecccc;"></div>
<div style="left:139px;top:775.1px;width:1.2px;height:44.2px;background:#151617;"></div>
<div style="left:140.2px;top:775.1px;width:39.8px;height:44.2px;background:#2ecccc;"></div>
<svg style="left:142.5px;top:780.1px;" width="18" height="16" viewBox="0 0 18 16"><path d="M0.5 8 H2.5 L4 5 L5.5 11 L7 2 L8.5 14 L10 4 L11.5 12 L13 6 L14 10 L15 8 H17" stroke="#111" stroke-width="1.3" fill="none" stroke-linejoin="round"/></svg>
<div class="t" style="left:147px;top:781.1px;font-size:12.5px;color:#151515;width:28px;text-align:right;">23</div>
<div style="left:185.5px;top:777.8px;width:47.9px;height:17.1px;background:#2a2d31;border-radius:4px;border:1.5px solid #141618;"></div>
<div class="t" style="left:189.5px;top:780.4px;font-size:12px;color:#c9c9c9;font-weight:bold;width:16px;text-align:center;">M</div>
<div class="t" style="left:213.5px;top:780.4px;font-size:12px;color:#c9c9c9;font-weight:bold;width:16px;text-align:center;">S</div>
<div class="t" style="left:243.5px;top:781.4px;font-size:13.0px;color:#e6e6e6;-webkit-text-stroke:0.3px #e6e6e6;">GTR Hook Palm L</div>
<div style="left:415.7px;top:777.8px;width:96.3px;height:17.2px;background:#26292c;border-radius:4px;border:1.5px solid #141618;"></div>
<svg style="left:419px;top:779.8px;" width="16" height="13" viewBox="0 0 16 13"><path d="M2 11 L13 2 V11Z" fill="#bdbdbd"/></svg>
<div style="left:435.8px;top:784.4px;width:70.8px;height:4px;background:#3d3f42;border-radius:2px;"></div>
<div style="left:435.8px;top:784.4px;width:45.2px;height:4px;background:#c8c8c8;border-radius:2px;"></div>
<div style="left:475px;top:780.4px;width:12px;height:12px;background:#e2e2e2;border-radius:50%;"></div>
<div style="left:241px;top:798.8px;width:46.2px;height:17.6px;background:#2a2d31;border-radius:4px;border:1.5px solid #141618;"></div>
<div style="left:249px;top:804.1px;width:7px;height:7px;background:#5d5f62;border-radius:50%;"></div>
<svg style="left:268.5px;top:801.6px;" width="14" height="12" viewBox="0 0 14 12"><path d="M1 4 H4 L8 1 V11 L4 8 H1Z" fill="#5d5f62"/><path d="M10 3 Q12.5 6 10 9" stroke="#5d5f62" stroke-width="1.3" fill="none"/></svg>
<div style="left:290.8px;top:798.8px;width:46.2px;height:17.6px;background:#2a2d31;border-radius:4px;border:1.5px solid #141618;"></div>
<div class="t" style="left:296px;top:800.1px;font-size:14px;color:#c9c9c9;font-weight:bold;width:12px;text-align:center;font-style:italic;">e</div>
<div style="left:321.5px;top:803.6px;width:8px;height:8px;border:1.6px solid #c9c9c9;border-radius:50%;"></div>
<div style="left:340.3px;top:798.8px;width:46.5px;height:17.6px;background:#2a2d31;border-radius:4px;border:1.5px solid #141618;"></div>
<div class="t" style="left:344px;top:801.6px;font-size:12px;color:#c9c9c9;font-weight:bold;width:16px;text-align:center;">R</div>
<div class="t" style="left:367.5px;top:801.6px;font-size:12px;color:#c9c9c9;font-weight:bold;width:16px;text-align:center;">W</div>
<div style="left:390.4px;top:798.8px;width:21.6px;height:17.6px;background:#2a2d31;border-radius:4px;border:1.5px solid #141618;"></div>
<svg style="left:395.2px;top:802.1px;" width="12" height="11" viewBox="0 0 12 11"><path d="M1 1 H11 M1 4 H5 M7 4 H11 M1 7 H5 M7 7 H11 M1 10 H11" stroke="#c9c9c9" stroke-width="1.3"/></svg>
<div style="left:128.6px;top:819.28px;width:10.4px;height:45.9px;background:#2ecccc;"></div>
<div style="left:139px;top:820.98px;width:1.2px;height:44.2px;background:#151617;"></div>
<div style="left:140.2px;top:820.98px;width:39.8px;height:44.2px;background:#2ecccc;"></div>
<svg style="left:142.5px;top:825.98px;" width="18" height="16" viewBox="0 0 18 16"><path d="M0.5 8 H2.5 L4 5 L5.5 11 L7 2 L8.5 14 L10 4 L11.5 12 L13 6 L14 10 L15 8 H17" stroke="#111" stroke-width="1.3" fill="none" stroke-linejoin="round"/></svg>
<div class="t" style="left:147px;top:826.98px;font-size:12.5px;color:#151515;width:28px;text-align:right;">24</div>
<div style="left:185.5px;top:823.68px;width:47.9px;height:17.1px;background:#2a2d31;border-radius:4px;border:1.5px solid #141618;"></div>
<div class="t" style="left:189.5px;top:826.28px;font-size:12px;color:#c9c9c9;font-weight:bold;width:16px;text-align:center;">M</div>
<div class="t" style="left:213.5px;top:826.28px;font-size:12px;color:#c9c9c9;font-weight:bold;width:16px;text-align:center;">S</div>
<div class="t" style="left:243.5px;top:827.28px;font-size:13.0px;color:#e6e6e6;-webkit-text-stroke:0.3px #e6e6e6;">GTR Hook Palm R</div>
<div style="left:415.7px;top:823.68px;width:96.3px;height:17.2px;background:#26292c;border-radius:4px;border:1.5px solid #141618;"></div>
<svg style="left:419px;top:825.68px;" width="16" height="13" viewBox="0 0 16 13"><path d="M2 11 L13 2 V11Z" fill="#bdbdbd"/></svg>
<div style="left:435.8px;top:830.28px;width:70.8px;height:4px;background:#3d3f42;border-radius:2px;"></div>
<div style="left:435.8px;top:830.28px;width:45.2px;height:4px;background:#c8c8c8;border-radius:2px;"></div>
<div style="left:475px;top:826.28px;width:12px;height:12px;background:#e2e2e2;border-radius:50%;"></div>
<div style="left:241px;top:844.68px;width:46.2px;height:17.6px;background:#2a2d31;border-radius:4px;border:1.5px solid #141618;"></div>
<div style="left:249px;top:849.98px;width:7px;height:7px;background:#5d5f62;border-radius:50%;"></div>
<svg style="left:268.5px;top:847.48px;" width="14" height="12" viewBox="0 0 14 12"><path d="M1 4 H4 L8 1 V11 L4 8 H1Z" fill="#5d5f62"/><path d="M10 3 Q12.5 6 10 9" stroke="#5d5f62" stroke-width="1.3" fill="none"/></svg>
<div style="left:290.8px;top:844.68px;width:46.2px;height:17.6px;background:#2a2d31;border-radius:4px;border:1.5px solid #141618;"></div>
<div class="t" style="left:296px;top:845.98px;font-size:14px;color:#c9c9c9;font-weight:bold;width:12px;text-align:center;font-style:italic;">e</div>
<div style="left:321.5px;top:849.48px;width:8px;height:8px;border:1.6px solid #c9c9c9;border-radius:50%;"></div>
<div style="left:340.3px;top:844.68px;width:46.5px;height:17.6px;background:#2a2d31;border-radius:4px;border:1.5px solid #141618;"></div>
<div class="t" style="left:344px;top:847.48px;font-size:12px;color:#c9c9c9;font-weight:bold;width:16px;text-align:center;">R</div>
<div class="t" style="left:367.5px;top:847.48px;font-size:12px;color:#c9c9c9;font-weight:bold;width:16px;text-align:center;">W</div>
<div style="left:390.4px;top:844.68px;width:21.6px;height:17.6px;background:#2a2d31;border-radius:4px;border:1.5px solid #141618;"></div>
<svg style="left:395.2px;top:847.98px;" width="12" height="11" viewBox="0 0 12 11"><path d="M1 1 H11 M1 4 H5 M7 4 H11 M1 7 H5 M7 7 H11 M1 10 H11" stroke="#c9c9c9" stroke-width="1.3"/></svg>
<div style="left:128.6px;top:865.16px;width:10.4px;height:45.9px;background:#2ecccc;"></div>
<div style="left:139px;top:866.86px;width:1.2px;height:44.2px;background:#151617;"></div>
<div style="left:140.2px;top:866.86px;width:39.8px;height:44.2px;background:#2ecccc;"></div>
<svg style="left:142.5px;top:871.86px;" width="18" height="16" viewBox="0 0 18 16"><path d="M0.5 8 H2.5 L4 5 L5.5 11 L7 2 L8.5 14 L10 4 L11.5 12 L13 6 L14 10 L15 8 H17" stroke="#111" stroke-width="1.3" fill="none" stroke-linejoin="round"/></svg>
<div class="t" style="left:147px;top:872.86px;font-size:12.5px;color:#151515;width:28px;text-align:right;">25</div>
<div style="left:185.5px;top:869.56px;width:47.9px;height:17.1px;background:#2a2d31;border-radius:4px;border:1.5px solid #141618;"></div>
<div class="t" style="left:189.5px;top:872.16px;font-size:12px;color:#c9c9c9;font-weight:bold;width:16px;text-align:center;">M</div>
<div class="t" style="left:213.5px;top:872.16px;font-size:12px;color:#c9c9c9;font-weight:bold;width:16px;text-align:center;">S</div>
<div class="t" style="left:243.5px;top:873.16px;font-size:13.0px;color:#e6e6e6;-webkit-text-stroke:0.3px #e6e6e6;">GTR Lead Line L</div>
<div style="left:415.7px;top:869.56px;width:96.3px;height:17.2px;background:#26292c;border-radius:4px;border:1.5px solid #141618;"></div>
<svg style="left:419px;top:871.56px;" width="16" height="13" viewBox="0 0 16 13"><path d="M2 11 L13 2 V11Z" fill="#bdbdbd"/></svg>
<div style="left:435.8px;top:876.16px;width:70.8px;height:4px;background:#3d3f42;border-radius:2px;"></div>
<div style="left:435.8px;top:876.16px;width:34.2px;height:4px;background:#c8c8c8;border-radius:2px;"></div>
<div style="left:464px;top:872.16px;width:12px;height:12px;background:#e2e2e2;border-radius:50%;"></div>
<div style="left:241px;top:890.56px;width:46.2px;height:17.6px;background:#2a2d31;border-radius:4px;border:1.5px solid #141618;"></div>
<div style="left:249px;top:895.86px;width:7px;height:7px;background:#5d5f62;border-radius:50%;"></div>
<svg style="left:268.5px;top:893.36px;" width="14" height="12" viewBox="0 0 14 12"><path d="M1 4 H4 L8 1 V11 L4 8 H1Z" fill="#5d5f62"/><path d="M10 3 Q12.5 6 10 9" stroke="#5d5f62" stroke-width="1.3" fill="none"/></svg>
<div style="left:290.8px;top:890.56px;width:46.2px;height:17.6px;background:#2a2d31;border-radius:4px;border:1.5px solid #141618;"></div>
<div class="t" style="left:296px;top:891.86px;font-size:14px;color:#c9c9c9;font-weight:bold;width:12px;text-align:center;font-style:italic;">e</div>
<svg style="left:318.5px;top:894.36px;" width="14" height="10" viewBox="0 0 14 10"><circle cx="4.5" cy="5" r="3.2" stroke="#c9c9c9" stroke-width="1.6" fill="none"/><circle cx="9.5" cy="5" r="3.2" stroke="#c9c9c9" stroke-width="1.6" fill="none"/></svg>
<div style="left:340.3px;top:890.56px;width:46.5px;height:17.6px;background:#2a2d31;border-radius:4px;border:1.5px solid #141618;"></div>
<div class="t" style="left:344px;top:893.36px;font-size:12px;color:#c9c9c9;font-weight:bold;width:16px;text-align:center;">R</div>
<div class="t" style="left:367.5px;top:893.36px;font-size:12px;color:#c9c9c9;font-weight:bold;width:16px;text-align:center;">W</div>
<div style="left:390.4px;top:890.56px;width:21.6px;height:17.6px;background:#2a2d31;border-radius:4px;border:1.5px solid #141618;"></div>
<svg style="left:395.2px;top:893.86px;" width="12" height="11" viewBox="0 0 12 11"><path d="M1 1 H11 M1 4 H5 M7 4 H11 M1 7 H5 M7 7 H11 M1 10 H11" stroke="#c9c9c9" stroke-width="1.3"/></svg>
<div style="left:128.6px;top:911.04px;width:10.4px;height:45.9px;background:#2ecccc;"></div>
<div style="left:139px;top:912.74px;width:1.2px;height:44.2px;background:#151617;"></div>
<div style="left:140.2px;top:912.74px;width:39.8px;height:44.2px;background:#2ecccc;"></div>
<svg style="left:142.5px;top:917.74px;" width="18" height="16" viewBox="0 0 18 16"><path d="M0.5 8 H2.5 L4 5 L5.5 11 L7 2 L8.5 14 L10 4 L11.5 12 L13 6 L14 10 L15 8 H17" stroke="#111" stroke-width="1.3" fill="none" stroke-linejoin="round"/></svg>
<div class="t" style="left:147px;top:918.74px;font-size:12.5px;color:#151515;width:28px;text-align:right;">26</div>
<div style="left:185.5px;top:915.44px;width:47.9px;height:17.1px;background:#2a2d31;border-radius:4px;border:1.5px solid #141618;"></div>
<div class="t" style="left:189.5px;top:918.04px;font-size:12px;color:#c9c9c9;font-weight:bold;width:16px;text-align:center;">M</div>
<div class="t" style="left:213.5px;top:918.04px;font-size:12px;color:#c9c9c9;font-weight:bold;width:16px;text-align:center;">S</div>
<div class="t" style="left:243.5px;top:919.04px;font-size:13.0px;color:#e6e6e6;-webkit-text-stroke:0.3px #e6e6e6;">GTR Lead Line R</div>
<div style="left:415.7px;top:915.44px;width:96.3px;height:17.2px;background:#26292c;border-radius:4px;border:1.5px solid #141618;"></div>
<svg style="left:419px;top:917.44px;" width="16" height="13" viewBox="0 0 16 13"><path d="M2 11 L13 2 V11Z" fill="#bdbdbd"/></svg>
<div style="left:435.8px;top:922.04px;width:70.8px;height:4px;background:#3d3f42;border-radius:2px;"></div>
<div style="left:435.8px;top:922.04px;width:34.2px;height:4px;background:#c8c8c8;border-radius:2px;"></div>
<div style="left:464px;top:918.04px;width:12px;height:12px;background:#e2e2e2;border-radius:50%;"></div>
<div style="left:241px;top:936.44px;width:46.2px;height:17.6px;background:#2a2d31;border-radius:4px;border:1.5px solid #141618;"></div>
<div style="left:249px;top:941.74px;width:7px;height:7px;background:#5d5f62;border-radius:50%;"></div>
<svg style="left:268.5px;top:939.24px;" width="14" height="12" viewBox="0 0 14 12"><path d="M1 4 H4 L8 1 V11 L4 8 H1Z" fill="#5d5f62"/><path d="M10 3 Q12.5 6 10 9" stroke="#5d5f62" stroke-width="1.3" fill="none"/></svg>
<div style="left:290.8px;top:936.44px;width:46.2px;height:17.6px;background:#2a2d31;border-radius:4px;border:1.5px solid #141618;"></div>
<div class="t" style="left:296px;top:937.74px;font-size:14px;color:#c9c9c9;font-weight:bold;width:12px;text-align:center;font-style:italic;">e</div>
<svg style="left:318.5px;top:940.24px;" width="14" height="10" viewBox="0 0 14 10"><circle cx="4.5" cy="5" r="3.2" stroke="#c9c9c9" stroke-width="1.6" fill="none"/><circle cx="9.5" cy="5" r="3.2" stroke="#c9c9c9" stroke-width="1.6" fill="none"/></svg>
<div style="left:340.3px;top:936.44px;width:46.5px;height:17.6px;background:#2a2d31;border-radius:4px;border:1.5px solid #141618;"></div>
<div class="t" style="left:344px;top:939.24px;font-size:12px;color:#c9c9c9;font-weight:bold;width:16px;text-align:center;">R</div>
<div class="t" style="left:367.5px;top:939.24px;font-size:12px;color:#c9c9c9;font-weight:bold;width:16px;text-align:center;">W</div>
<div style="left:390.4px;top:936.44px;width:21.6px;height:17.6px;background:#2a2d31;border-radius:4px;border:1.5px solid #141618;"></div>
<svg style="left:395.2px;top:939.74px;" width="12" height="11" viewBox="0 0 12 11"><path d="M1 1 H11 M1 4 H5 M7 4 H11 M1 7 H5 M7 7 H11 M1 10 H11" stroke="#c9c9c9" stroke-width="1.3"/></svg>
<div style="left:128.6px;top:956.92px;width:10.4px;height:45.9px;background:#2ecccc;"></div>
<div style="left:139px;top:958.62px;width:1.2px;height:44.2px;background:#151617;"></div>
<div style="left:140.2px;top:958.62px;width:39.8px;height:44.2px;background:#2ecccc;"></div>
<svg style="left:142.5px;top:963.62px;" width="18" height="16" viewBox="0 0 18 16"><path d="M0.5 8 H2.5 L4 5 L5.5 11 L7 2 L8.5 14 L10 4 L11.5 12 L13 6 L14 10 L15 8 H17" stroke="#111" stroke-width="1.3" fill="none" stroke-linejoin="round"/></svg>
<div class="t" style="left:147px;top:964.62px;font-size:12.5px;color:#151515;width:28px;text-align:right;">27</div>
<div style="left:185.5px;top:961.32px;width:47.9px;height:17.1px;background:#2a2d31;border-radius:4px;border:1.5px solid #141618;"></div>
<div class="t" style="left:189.5px;top:963.92px;font-size:12px;color:#c9c9c9;font-weight:bold;width:16px;text-align:center;">M</div>
<div class="t" style="left:213.5px;top:963.92px;font-size:12px;color:#c9c9c9;font-weight:bold;width:16px;text-align:center;">S</div>
<div class="t" style="left:243.5px;top:964.92px;font-size:13.0px;color:#e6e6e6;-webkit-text-stroke:0.3px #e6e6e6;">GTR Shimmer Strums</div>
<div style="left:415.7px;top:961.32px;width:96.3px;height:17.2px;background:#26292c;border-radius:4px;border:1.5px solid #141618;"></div>
<svg style="left:419px;top:963.32px;" width="16" height="13" viewBox="0 0 16 13"><path d="M2 11 L13 2 V11Z" fill="#bdbdbd"/></svg>
<div style="left:435.8px;top:967.92px;width:70.8px;height:4px;background:#3d3f42;border-radius:2px;"></div>
<div style="left:435.8px;top:967.92px;width:50.2px;height:4px;background:#c8c8c8;border-radius:2px;"></div>
<div style="left:480px;top:963.92px;width:12px;height:12px;background:#e2e2e2;border-radius:50%;"></div>
<div style="left:241px;top:982.32px;width:46.2px;height:17.6px;background:#2a2d31;border-radius:4px;border:1.5px solid #141618;"></div>
<div style="left:249px;top:987.62px;width:7px;height:7px;background:#5d5f62;border-radius:50%;"></div>
<svg style="left:268.5px;top:985.12px;" width="14" height="12" viewBox="0 0 14 12"><path d="M1 4 H4 L8 1 V11 L4 8 H1Z" fill="#5d5f62"/><path d="M10 3 Q12.5 6 10 9" stroke="#5d5f62" stroke-width="1.3" fill="none"/></svg>
<div style="left:290.8px;top:982.32px;width:46.2px;height:17.6px;background:#2a2d31;border-radius:4px;border:1.5px solid #141618;"></div>
<div class="t" style="left:296px;top:983.62px;font-size:14px;color:#c9c9c9;font-weight:bold;width:12px;text-align:center;font-style:italic;">e</div>
<svg style="left:318.5px;top:986.12px;" width="14" height="10" viewBox="0 0 14 10"><circle cx="4.5" cy="5" r="3.2" stroke="#c9c9c9" stroke-width="1.6" fill="none"/><circle cx="9.5" cy="5" r="3.2" stroke="#c9c9c9" stroke-width="1.6" fill="none"/></svg>
<div style="left:340.3px;top:982.32px;width:46.5px;height:17.6px;background:#2a2d31;border-radius:4px;border:1.5px solid #141618;"></div>
<div class="t" style="left:344px;top:985.12px;font-size:12px;color:#c9c9c9;font-weight:bold;width:16px;text-align:center;">R</div>
<div class="t" style="left:367.5px;top:985.12px;font-size:12px;color:#c9c9c9;font-weight:bold;width:16px;text-align:center;">W</div>
<div style="left:390.4px;top:982.32px;width:21.6px;height:17.6px;background:#2a2d31;border-radius:4px;border:1.5px solid #141618;"></div>
<svg style="left:395.2px;top:985.62px;" width="12" height="11" viewBox="0 0 12 11"><path d="M1 1 H11 M1 4 H5 M7 4 H11 M1 7 H5 M7 7 H11 M1 10 H11" stroke="#c9c9c9" stroke-width="1.3"/></svg>
<div style="left:128.6px;top:1002.8px;width:10.4px;height:45.9px;background:#2ecccc;"></div>
<div style="left:139px;top:1004.5px;width:1.2px;height:44.2px;background:#151617;"></div>
<div style="left:140.2px;top:1004.5px;width:39.8px;height:44.2px;background:#2ecccc;"></div>
<svg style="left:142.5px;top:1009.5px;" width="18" height="16" viewBox="0 0 18 16"><path d="M0.5 8 H2.5 L4 5 L5.5 11 L7 2 L8.5 14 L10 4 L11.5 12 L13 6 L14 10 L15 8 H17" stroke="#111" stroke-width="1.3" fill="none" stroke-linejoin="round"/></svg>
<div class="t" style="left:147px;top:1010.5px;font-size:12.5px;color:#151515;width:28px;text-align:right;">28</div>
<div style="left:185.5px;top:1007.2px;width:47.9px;height:17.1px;background:#2a2d31;border-radius:4px;border:1.5px solid #141618;"></div>
<div class="t" style="left:189.5px;top:1009.8px;font-size:12px;color:#c9c9c9;font-weight:bold;width:16px;text-align:center;">M</div>
<div class="t" style="left:213.5px;top:1009.8px;font-size:12px;color:#c9c9c9;font-weight:bold;width:16px;text-align:center;">S</div>
<div class="t" style="left:243.5px;top:1010.8px;font-size:13.0px;color:#e6e6e6;-webkit-text-stroke:0.3px #e6e6e6;">GTR Long Strums</div>
<div style="left:415.7px;top:1007.2px;width:96.3px;height:17.2px;background:#26292c;border-radius:4px;border:1.5px solid #141618;"></div>
<svg style="left:419px;top:1009.2px;" width="16" height="13" viewBox="0 0 16 13"><path d="M2 11 L13 2 V11Z" fill="#bdbdbd"/></svg>
<div style="left:435.8px;top:1013.8px;width:70.8px;height:4px;background:#3d3f42;border-radius:2px;"></div>
<div style="left:435.8px;top:1013.8px;width:36.2px;height:4px;background:#c8c8c8;border-radius:2px;"></div>
<div style="left:466px;top:1009.8px;width:12px;height:12px;background:#e2e2e2;border-radius:50%;"></div>
<div style="left:241px;top:1028.2px;width:46.2px;height:17.6px;background:#2a2d31;border-radius:4px;border:1.5px solid #141618;"></div>
<div style="left:249px;top:1033.5px;width:7px;height:7px;background:#5d5f62;border-radius:50%;"></div>
<svg style="left:268.5px;top:1031px;" width="14" height="12" viewBox="0 0 14 12"><path d="M1 4 H4 L8 1 V11 L4 8 H1Z" fill="#5d5f62"/><path d="M10 3 Q12.5 6 10 9" stroke="#5d5f62" stroke-width="1.3" fill="none"/></svg>
<div style="left:290.8px;top:1028.2px;width:46.2px;height:17.6px;background:#2a2d31;border-radius:4px;border:1.5px solid #141618;"></div>
<div class="t" style="left:296px;top:1029.5px;font-size:14px;color:#c9c9c9;font-weight:bold;width:12px;text-align:center;font-style:italic;">e</div>
<svg style="left:318.5px;top:1032px;" width="14" height="10" viewBox="0 0 14 10"><circle cx="4.5" cy="5" r="3.2" stroke="#c9c9c9" stroke-width="1.6" fill="none"/><circle cx="9.5" cy="5" r="3.2" stroke="#c9c9c9" stroke-width="1.6" fill="none"/></svg>
<div style="left:340.3px;top:1028.2px;width:46.5px;height:17.6px;background:#2a2d31;border-radius:4px;border:1.5px solid #141618;"></div>
<div class="t" style="left:344px;top:1031px;font-size:12px;color:#c9c9c9;font-weight:bold;width:16px;text-align:center;">R</div>
<div class="t" style="left:367.5px;top:1031px;font-size:12px;color:#c9c9c9;font-weight:bold;width:16px;text-align:center;">W</div>
<div style="left:390.4px;top:1028.2px;width:21.6px;height:17.6px;background:#2a2d31;border-radius:4px;border:1.5px solid #141618;"></div>
<svg style="left:395.2px;top:1031.5px;" width="12" height="11" viewBox="0 0 12 11"><path d="M1 1 H11 M1 4 H5 M7 4 H11 M1 7 H5 M7 7 H11 M1 10 H11" stroke="#c9c9c9" stroke-width="1.3"/></svg>
<div style="left:128.6px;top:1048.68px;width:10.4px;height:45.9px;background:#2ecccc;"></div>
<div style="left:139px;top:1050.38px;width:1.2px;height:44.2px;background:#151617;"></div>
<div style="left:140.2px;top:1050.38px;width:39.8px;height:44.2px;background:#2ecccc;"></div>
<svg style="left:142.5px;top:1055.38px;" width="18" height="16" viewBox="0 0 18 16"><path d="M0.5 8 H2.5 L4 5 L5.5 11 L7 2 L8.5 14 L10 4 L11.5 12 L13 6 L14 10 L15 8 H17" stroke="#111" stroke-width="1.3" fill="none" stroke-linejoin="round"/></svg>
<div class="t" style="left:147px;top:1056.38px;font-size:12.5px;color:#151515;width:28px;text-align:right;">29</div>
<div style="left:185.5px;top:1053.08px;width:47.9px;height:17.1px;background:#2a2d31;border-radius:4px;border:1.5px solid #141618;"></div>
<div class="t" style="left:189.5px;top:1055.68px;font-size:12px;color:#c9c9c9;font-weight:bold;width:16px;text-align:center;">M</div>
<div class="t" style="left:213.5px;top:1055.68px;font-size:12px;color:#c9c9c9;font-weight:bold;width:16px;text-align:center;">S</div>
<div class="t" style="left:243.5px;top:1056.68px;font-size:13.0px;color:#e6e6e6;-webkit-text-stroke:0.3px #e6e6e6;">GTR Accent Lead L</div>
<div style="left:415.7px;top:1053.08px;width:96.3px;height:17.2px;background:#26292c;border-radius:4px;border:1.5px solid #141618;"></div>
<svg style="left:419px;top:1055.08px;" width="16" height="13" viewBox="0 0 16 13"><path d="M2 11 L13 2 V11Z" fill="#bdbdbd"/></svg>
<div style="left:435.8px;top:1059.68px;width:70.8px;height:4px;background:#3d3f42;border-radius:2px;"></div>
<div style="left:435.8px;top:1059.68px;width:33.2px;height:4px;background:#c8c8c8;border-radius:2px;"></div>
<div style="left:463px;top:1055.68px;width:12px;height:12px;background:#e2e2e2;border-radius:50%;"></div>
<div style="left:241px;top:1074.08px;width:46.2px;height:17.6px;background:#2a2d31;border-radius:4px;border:1.5px solid #141618;"></div>
<div style="left:249px;top:1079.38px;width:7px;height:7px;background:#5d5f62;border-radius:50%;"></div>
<svg style="left:268.5px;top:1076.88px;" width="14" height="12" viewBox="0 0 14 12"><path d="M1 4 H4 L8 1 V11 L4 8 H1Z" fill="#5d5f62"/><path d="M10 3 Q12.5 6 10 9" stroke="#5d5f62" stroke-width="1.3" fill="none"/></svg>
<div style="left:290.8px;top:1074.08px;width:46.2px;height:17.6px;background:#2a2d31;border-radius:4px;border:1.5px solid #141618;"></div>
<div class="t" style="left:296px;top:1075.38px;font-size:14px;color:#c9c9c9;font-weight:bold;width:12px;text-align:center;font-style:italic;">e</div>
<svg style="left:318.5px;top:1077.88px;" width="14" height="10" viewBox="0 0 14 10"><circle cx="4.5" cy="5" r="3.2" stroke="#c9c9c9" stroke-width="1.6" fill="none"/><circle cx="9.5" cy="5" r="3.2" stroke="#c9c9c9" stroke-width="1.6" fill="none"/></svg>
<div style="left:340.3px;top:1074.08px;width:46.5px;height:17.6px;background:#2a2d31;border-radius:4px;border:1.5px solid #141618;"></div>
<div class="t" style="left:344px;top:1076.88px;font-size:12px;color:#c9c9c9;font-weight:bold;width:16px;text-align:center;">R</div>
<div class="t" style="left:367.5px;top:1076.88px;font-size:12px;color:#c9c9c9;font-weight:bold;width:16px;text-align:center;">W</div>
<div style="left:390.4px;top:1074.08px;width:21.6px;height:17.6px;background:#2a2d31;border-radius:4px;border:1.5px solid #141618;"></div>
<svg style="left:395.2px;top:1077.38px;" width="12" height="11" viewBox="0 0 12 11"><path d="M1 1 H11 M1 4 H5 M7 4 H11 M1 7 H5 M7 7 H11 M1 10 H11" stroke="#c9c9c9" stroke-width="1.3"/></svg>
<div style="left:180px;top:1096.26px;width:342.8px;height:44.2px;background:#47494d;"></div>
<div style="left:128.6px;top:1094.56px;width:10.4px;height:45.9px;background:#2ecccc;"></div>
<div style="left:139px;top:1096.26px;width:1.2px;height:44.2px;background:#151617;"></div>
<div style="left:140.2px;top:1096.26px;width:39.8px;height:44.2px;background:#2ecccc;"></div>
<svg style="left:142.5px;top:1101.26px;" width="18" height="16" viewBox="0 0 18 16"><path d="M0.5 8 H2.5 L4 5 L5.5 11 L7 2 L8.5 14 L10 4 L11.5 12 L13 6 L14 10 L15 8 H17" stroke="#111" stroke-width="1.3" fill="none" stroke-linejoin="round"/></svg>
<div class="t" style="left:147px;top:1102.26px;font-size:12.5px;color:#151515;width:28px;text-align:right;">30</div>
<div style="left:185.5px;top:1098.96px;width:47.9px;height:17.1px;background:#3b3d41;border-radius:4px;border:1.5px solid #141618;"></div>
<div class="t" style="left:189.5px;top:1101.56px;font-size:12px;color:#c9c9c9;font-weight:bold;width:16px;text-align:center;">M</div>
<div class="t" style="left:213.5px;top:1101.56px;font-size:12px;color:#c9c9c9;font-weight:bold;width:16px;text-align:center;">S</div>
<div class="t" style="left:243.5px;top:1102.56px;font-size:13.0px;color:#e6e6e6;-webkit-text-stroke:0.3px #e6e6e6;">GTR Accent Lead R</div>
<div style="left:415.7px;top:1098.96px;width:96.3px;height:17.2px;background:#26292c;border-radius:4px;border:1.5px solid #141618;"></div>
<svg style="left:419px;top:1100.96px;" width="16" height="13" viewBox="0 0 16 13"><path d="M2 11 L13 2 V11Z" fill="#bdbdbd"/></svg>
<div style="left:435.8px;top:1105.56px;width:70.8px;height:4px;background:#3d3f42;border-radius:2px;"></div>
<div style="left:435.8px;top:1105.56px;width:33.2px;height:4px;background:#c8c8c8;border-radius:2px;"></div>
<div style="left:463px;top:1101.56px;width:12px;height:12px;background:#e2e2e2;border-radius:50%;"></div>
<div style="left:241px;top:1119.96px;width:46.2px;height:17.6px;background:#3b3d41;border-radius:4px;border:1.5px solid #141618;"></div>
<div style="left:249px;top:1125.26px;width:7px;height:7px;background:#5d5f62;border-radius:50%;"></div>
<svg style="left:268.5px;top:1122.76px;" width="14" height="12" viewBox="0 0 14 12"><path d="M1 4 H4 L8 1 V11 L4 8 H1Z" fill="#5d5f62"/><path d="M10 3 Q12.5 6 10 9" stroke="#5d5f62" stroke-width="1.3" fill="none"/></svg>
<div style="left:290.8px;top:1119.96px;width:46.2px;height:17.6px;background:#3b3d41;border-radius:4px;border:1.5px solid #141618;"></div>
<div class="t" style="left:296px;top:1121.26px;font-size:14px;color:#c9c9c9;font-weight:bold;width:12px;text-align:center;font-style:italic;">e</div>
<svg style="left:318.5px;top:1123.76px;" width="14" height="10" viewBox="0 0 14 10"><circle cx="4.5" cy="5" r="3.2" stroke="#c9c9c9" stroke-width="1.6" fill="none"/><circle cx="9.5" cy="5" r="3.2" stroke="#c9c9c9" stroke-width="1.6" fill="none"/></svg>
<div style="left:340.3px;top:1119.96px;width:46.5px;height:17.6px;background:#3b3d41;border-radius:4px;border:1.5px solid #141618;"></div>
<div class="t" style="left:344px;top:1122.76px;font-size:12px;color:#c9c9c9;font-weight:bold;width:16px;text-align:center;">R</div>
<div class="t" style="left:367.5px;top:1122.76px;font-size:12px;color:#c9c9c9;font-weight:bold;width:16px;text-align:center;">W</div>
<div style="left:390.4px;top:1119.96px;width:21.6px;height:17.6px;background:#3b3d41;border-radius:4px;border:1.5px solid #141618;"></div>
<svg style="left:395.2px;top:1123.26px;" width="12" height="11" viewBox="0 0 12 11"><path d="M1 1 H11 M1 4 H5 M7 4 H11 M1 7 H5 M7 7 H11 M1 10 H11" stroke="#c9c9c9" stroke-width="1.3"/></svg>
<div style="left:128.6px;top:1140.44px;width:10.4px;height:45.9px;background:#2ecccc;"></div>
<div style="left:139px;top:1142.14px;width:1.2px;height:44.2px;background:#151617;"></div>
<div style="left:140.2px;top:1142.14px;width:39.8px;height:44.2px;background:#2ecccc;"></div>
<svg style="left:142.5px;top:1147.14px;" width="18" height="16" viewBox="0 0 18 16"><path d="M0.5 8 H2.5 L4 5 L5.5 11 L7 2 L8.5 14 L10 4 L11.5 12 L13 6 L14 10 L15 8 H17" stroke="#111" stroke-width="1.3" fill="none" stroke-linejoin="round"/></svg>
<div class="t" style="left:147px;top:1148.14px;font-size:12.5px;color:#151515;width:28px;text-align:right;">31</div>
<div style="left:185.5px;top:1144.84px;width:47.9px;height:17.1px;background:#2a2d31;border-radius:4px;border:1.5px solid #141618;"></div>
<div class="t" style="left:189.5px;top:1147.44px;font-size:12px;color:#c9c9c9;font-weight:bold;width:16px;text-align:center;">M</div>
<div class="t" style="left:213.5px;top:1147.44px;font-size:12px;color:#c9c9c9;font-weight:bold;width:16px;text-align:center;">S</div>
<div class="t" style="left:243.5px;top:1148.44px;font-size:13.0px;color:#e6e6e6;-webkit-text-stroke:0.3px #e6e6e6;">GTR Verse Strums L</div>
<div style="left:415.7px;top:1144.84px;width:96.3px;height:17.2px;background:#26292c;border-radius:4px;border:1.5px solid #141618;"></div>
<svg style="left:419px;top:1146.84px;" width="16" height="13" viewBox="0 0 16 13"><path d="M2 11 L13 2 V11Z" fill="#bdbdbd"/></svg>
<div style="left:435.8px;top:1151.44px;width:70.8px;height:4px;background:#3d3f42;border-radius:2px;"></div>
<div style="left:435.8px;top:1151.44px;width:54.2px;height:4px;background:#c8c8c8;border-radius:2px;"></div>
<div style="left:484px;top:1147.44px;width:12px;height:12px;background:#e2e2e2;border-radius:50%;"></div>
<div style="left:241px;top:1165.84px;width:46.2px;height:17.6px;background:#2a2d31;border-radius:4px;border:1.5px solid #141618;"></div>
<div style="left:249px;top:1171.14px;width:7px;height:7px;background:#5d5f62;border-radius:50%;"></div>
<svg style="left:268.5px;top:1168.64px;" width="14" height="12" viewBox="0 0 14 12"><path d="M1 4 H4 L8 1 V11 L4 8 H1Z" fill="#5d5f62"/><path d="M10 3 Q12.5 6 10 9" stroke="#5d5f62" stroke-width="1.3" fill="none"/></svg>
<div style="left:290.8px;top:1165.84px;width:46.2px;height:17.6px;background:#2a2d31;border-radius:4px;border:1.5px solid #141618;"></div>
<div class="t" style="left:296px;top:1167.14px;font-size:14px;color:#c9c9c9;font-weight:bold;width:12px;text-align:center;font-style:italic;">e</div>
<div style="left:321.5px;top:1170.64px;width:8px;height:8px;border:1.6px solid #c9c9c9;border-radius:50%;"></div>
<div style="left:340.3px;top:1165.84px;width:46.5px;height:17.6px;background:#2a2d31;border-radius:4px;border:1.5px solid #141618;"></div>
<div class="t" style="left:344px;top:1168.64px;font-size:12px;color:#c9c9c9;font-weight:bold;width:16px;text-align:center;">R</div>
<div class="t" style="left:367.5px;top:1168.64px;font-size:12px;color:#c9c9c9;font-weight:bold;width:16px;text-align:center;">W</div>
<div style="left:390.4px;top:1165.84px;width:21.6px;height:17.6px;background:#2a2d31;border-radius:4px;border:1.5px solid #141618;"></div>
<svg style="left:395.2px;top:1169.14px;" width="12" height="11" viewBox="0 0 12 11"><path d="M1 1 H11 M1 4 H5 M7 4 H11 M1 7 H5 M7 7 H11 M1 10 H11" stroke="#c9c9c9" stroke-width="1.3"/></svg>
<div style="left:128.6px;top:1186.32px;width:10.4px;height:45.9px;background:#2ecccc;"></div>
<div style="left:139px;top:1188.02px;width:1.2px;height:44.2px;background:#151617;"></div>
<div style="left:140.2px;top:1188.02px;width:39.8px;height:44.2px;background:#2ecccc;"></div>
<svg style="left:142.5px;top:1193.02px;" width="18" height="16" viewBox="0 0 18 16"><path d="M0.5 8 H2.5 L4 5 L5.5 11 L7 2 L8.5 14 L10 4 L11.5 12 L13 6 L14 10 L15 8 H17" stroke="#111" stroke-width="1.3" fill="none" stroke-linejoin="round"/></svg>
<div class="t" style="left:147px;top:1194.02px;font-size:12.5px;color:#151515;width:28px;text-align:right;">32</div>
<div style="left:185.5px;top:1190.72px;width:47.9px;height:17.1px;background:#2a2d31;border-radius:4px;border:1.5px solid #141618;"></div>
<div class="t" style="left:189.5px;top:1193.32px;font-size:12px;color:#c9c9c9;font-weight:bold;width:16px;text-align:center;">M</div>
<div class="t" style="left:213.5px;top:1193.32px;font-size:12px;color:#c9c9c9;font-weight:bold;width:16px;text-align:center;">S</div>
<div class="t" style="left:243.5px;top:1194.32px;font-size:13.0px;color:#e6e6e6;-webkit-text-stroke:0.3px #e6e6e6;">GTR Verse Strums R</div>
<div style="left:415.7px;top:1190.72px;width:96.3px;height:17.2px;background:#26292c;border-radius:4px;border:1.5px solid #141618;"></div>
<svg style="left:419px;top:1192.72px;" width="16" height="13" viewBox="0 0 16 13"><path d="M2 11 L13 2 V11Z" fill="#bdbdbd"/></svg>
<div style="left:435.8px;top:1197.32px;width:70.8px;height:4px;background:#3d3f42;border-radius:2px;"></div>
<div style="left:435.8px;top:1197.32px;width:54.2px;height:4px;background:#c8c8c8;border-radius:2px;"></div>
<div style="left:484px;top:1193.32px;width:12px;height:12px;background:#e2e2e2;border-radius:50%;"></div>
<div style="left:241px;top:1211.72px;width:46.2px;height:17.6px;background:#2a2d31;border-radius:4px;border:1.5px solid #141618;"></div>
<div style="left:249px;top:1217.02px;width:7px;height:7px;background:#5d5f62;border-radius:50%;"></div>
<svg style="left:268.5px;top:1214.52px;" width="14" height="12" viewBox="0 0 14 12"><path d="M1 4 H4 L8 1 V11 L4 8 H1Z" fill="#5d5f62"/><path d="M10 3 Q12.5 6 10 9" stroke="#5d5f62" stroke-width="1.3" fill="none"/></svg>
<div style="left:290.8px;top:1211.72px;width:46.2px;height:17.6px;background:#2a2d31;border-radius:4px;border:1.5px solid #141618;"></div>
<div class="t" style="left:296px;top:1213.02px;font-size:14px;color:#c9c9c9;font-weight:bold;width:12px;text-align:center;font-style:italic;">e</div>
<div style="left:321.5px;top:1216.52px;width:8px;height:8px;border:1.6px solid #c9c9c9;border-radius:50%;"></div>
<div style="left:340.3px;top:1211.72px;width:46.5px;height:17.6px;background:#2a2d31;border-radius:4px;border:1.5px solid #141618;"></div>
<div class="t" style="left:344px;top:1214.52px;font-size:12px;color:#c9c9c9;font-weight:bold;width:16px;text-align:center;">R</div>
<div class="t" style="left:367.5px;top:1214.52px;font-size:12px;color:#c9c9c9;font-weight:bold;width:16px;text-align:center;">W</div>
<div style="left:390.4px;top:1211.72px;width:21.6px;height:17.6px;background:#2a2d31;border-radius:4px;border:1.5px solid #141618;"></div>
<svg style="left:395.2px;top:1215.02px;" width="12" height="11" viewBox="0 0 12 11"><path d="M1 1 H11 M1 4 H5 M7 4 H11 M1 7 H5 M7 7 H11 M1 10 H11" stroke="#c9c9c9" stroke-width="1.3"/></svg>
<div style="left:128.6px;top:1232.2px;width:10.4px;height:45.9px;background:#2ecccc;"></div>
<div style="left:139px;top:1233.9px;width:1.2px;height:44.2px;background:#151617;"></div>
<div style="left:140.2px;top:1233.9px;width:39.8px;height:44.2px;background:#2ecccc;"></div>
<svg style="left:142.5px;top:1238.9px;" width="18" height="16" viewBox="0 0 18 16"><path d="M0.5 8 H2.5 L4 5 L5.5 11 L7 2 L8.5 14 L10 4 L11.5 12 L13 6 L14 10 L15 8 H17" stroke="#111" stroke-width="1.3" fill="none" stroke-linejoin="round"/></svg>
<div class="t" style="left:147px;top:1239.9px;font-size:12.5px;color:#151515;width:28px;text-align:right;">33</div>
<div style="left:185.5px;top:1236.6px;width:47.9px;height:17.1px;background:#2a2d31;border-radius:4px;border:1.5px solid #141618;"></div>
<div class="t" style="left:189.5px;top:1239.2px;font-size:12px;color:#c9c9c9;font-weight:bold;width:16px;text-align:center;">M</div>
<div class="t" style="left:213.5px;top:1239.2px;font-size:12px;color:#c9c9c9;font-weight:bold;width:16px;text-align:center;">S</div>
<div class="t" style="left:243.5px;top:1240.2px;font-size:13.0px;color:#e6e6e6;-webkit-text-stroke:0.3px #e6e6e6;">GTR Modulation Hits L</div>
<div style="left:415.7px;top:1236.6px;width:96.3px;height:17.2px;background:#26292c;border-radius:4px;border:1.5px solid #141618;"></div>
<svg style="left:419px;top:1238.6px;" width="16" height="13" viewBox="0 0 16 13"><path d="M2 11 L13 2 V11Z" fill="#bdbdbd"/></svg>
<div style="left:435.8px;top:1243.2px;width:70.8px;height:4px;background:#3d3f42;border-radius:2px;"></div>
<div style="left:435.8px;top:1243.2px;width:29.2px;height:4px;background:#c8c8c8;border-radius:2px;"></div>
<div style="left:459px;top:1239.2px;width:12px;height:12px;background:#e2e2e2;border-radius:50%;"></div>
<div style="left:241px;top:1257.6px;width:46.2px;height:17.6px;background:#2a2d31;border-radius:4px;border:1.5px solid #141618;"></div>
<div style="left:249px;top:1262.9px;width:7px;height:7px;background:#5d5f62;border-radius:50%;"></div>
<svg style="left:268.5px;top:1260.4px;" width="14" height="12" viewBox="0 0 14 12"><path d="M1 4 H4 L8 1 V11 L4 8 H1Z" fill="#5d5f62"/><path d="M10 3 Q12.5 6 10 9" stroke="#5d5f62" stroke-width="1.3" fill="none"/></svg>
<div style="left:290.8px;top:1257.6px;width:46.2px;height:17.6px;background:#2a2d31;border-radius:4px;border:1.5px solid #141618;"></div>
<div class="t" style="left:296px;top:1258.9px;font-size:14px;color:#c9c9c9;font-weight:bold;width:12px;text-align:center;font-style:italic;">e</div>
<svg style="left:318.5px;top:1261.4px;" width="14" height="10" viewBox="0 0 14 10"><circle cx="4.5" cy="5" r="3.2" stroke="#c9c9c9" stroke-width="1.6" fill="none"/><circle cx="9.5" cy="5" r="3.2" stroke="#c9c9c9" stroke-width="1.6" fill="none"/></svg>
<div style="left:340.3px;top:1257.6px;width:46.5px;height:17.6px;background:#2a2d31;border-radius:4px;border:1.5px solid #141618;"></div>
<div class="t" style="left:344px;top:1260.4px;font-size:12px;color:#c9c9c9;font-weight:bold;width:16px;text-align:center;">R</div>
<div class="t" style="left:367.5px;top:1260.4px;font-size:12px;color:#c9c9c9;font-weight:bold;width:16px;text-align:center;">W</div>
<div style="left:390.4px;top:1257.6px;width:21.6px;height:17.6px;background:#2a2d31;border-radius:4px;border:1.5px solid #141618;"></div>
<svg style="left:395.2px;top:1260.9px;" width="12" height="11" viewBox="0 0 12 11"><path d="M1 1 H11 M1 4 H5 M7 4 H11 M1 7 H5 M7 7 H11 M1 10 H11" stroke="#c9c9c9" stroke-width="1.3"/></svg>
<div style="left:128.6px;top:1278.08px;width:10.4px;height:45.9px;background:#2ecccc;"></div>
<div style="left:139px;top:1279.78px;width:1.2px;height:44.2px;background:#151617;"></div>
<div style="left:140.2px;top:1279.78px;width:39.8px;height:44.2px;background:#2ecccc;"></div>
<svg style="left:142.5px;top:1284.78px;" width="18" height="16" viewBox="0 0 18 16"><path d="M0.5 8 H2.5 L4 5 L5.5 11 L7 2 L8.5 14 L10 4 L11.5 12 L13 6 L14 10 L15 8 H17" stroke="#111" stroke-width="1.3" fill="none" stroke-linejoin="round"/></svg>
<div class="t" style="left:147px;top:1285.78px;font-size:12.5px;color:#151515;width:28px;text-align:right;">34</div>
<div style="left:185.5px;top:1282.48px;width:47.9px;height:17.1px;background:#2a2d31;border-radius:4px;border:1.5px solid #141618;"></div>
<div class="t" style="left:189.5px;top:1285.08px;font-size:12px;color:#c9c9c9;font-weight:bold;width:16px;text-align:center;">M</div>
<div class="t" style="left:213.5px;top:1285.08px;font-size:12px;color:#c9c9c9;font-weight:bold;width:16px;text-align:center;">S</div>
<div class="t" style="left:243.5px;top:1286.08px;font-size:13.0px;color:#e6e6e6;-webkit-text-stroke:0.3px #e6e6e6;">GTR Modulation Hits R</div>
<div style="left:415.7px;top:1282.48px;width:96.3px;height:17.2px;background:#26292c;border-radius:4px;border:1.5px solid #141618;"></div>
<svg style="left:419px;top:1284.48px;" width="16" height="13" viewBox="0 0 16 13"><path d="M2 11 L13 2 V11Z" fill="#bdbdbd"/></svg>
<div style="left:435.8px;top:1289.08px;width:70.8px;height:4px;background:#3d3f42;border-radius:2px;"></div>
<div style="left:435.8px;top:1289.08px;width:22.2px;height:4px;background:#c8c8c8;border-radius:2px;"></div>
<div style="left:452px;top:1285.08px;width:12px;height:12px;background:#e2e2e2;border-radius:50%;"></div>
<div style="left:241px;top:1303.48px;width:46.2px;height:17.6px;background:#2a2d31;border-radius:4px;border:1.5px solid #141618;"></div>
<div style="left:249px;top:1308.78px;width:7px;height:7px;background:#5d5f62;border-radius:50%;"></div>
<svg style="left:268.5px;top:1306.28px;" width="14" height="12" viewBox="0 0 14 12"><path d="M1 4 H4 L8 1 V11 L4 8 H1Z" fill="#5d5f62"/><path d="M10 3 Q12.5 6 10 9" stroke="#5d5f62" stroke-width="1.3" fill="none"/></svg>
<div style="left:290.8px;top:1303.48px;width:46.2px;height:17.6px;background:#2a2d31;border-radius:4px;border:1.5px solid #141618;"></div>
<div class="t" style="left:296px;top:1304.78px;font-size:14px;color:#c9c9c9;font-weight:bold;width:12px;text-align:center;font-style:italic;">e</div>
<svg style="left:318.5px;top:1307.28px;" width="14" height="10" viewBox="0 0 14 10"><circle cx="4.5" cy="5" r="3.2" stroke="#c9c9c9" stroke-width="1.6" fill="none"/><circle cx="9.5" cy="5" r="3.2" stroke="#c9c9c9" stroke-width="1.6" fill="none"/></svg>
<div style="left:340.3px;top:1303.48px;width:46.5px;height:17.6px;background:#2a2d31;border-radius:4px;border:1.5px solid #141618;"></div>
<div class="t" style="left:344px;top:1306.28px;font-size:12px;color:#c9c9c9;font-weight:bold;width:16px;text-align:center;">R</div>
<div class="t" style="left:367.5px;top:1306.28px;font-size:12px;color:#c9c9c9;font-weight:bold;width:16px;text-align:center;">W</div>
<div style="left:390.4px;top:1303.48px;width:21.6px;height:17.6px;background:#2a2d31;border-radius:4px;border:1.5px solid #141618;"></div>
<svg style="left:395.2px;top:1306.78px;" width="12" height="11" viewBox="0 0 12 11"><path d="M1 1 H11 M1 4 H5 M7 4 H11 M1 7 H5 M7 7 H11 M1 10 H11" stroke="#c9c9c9" stroke-width="1.3"/></svg>
<div style="left:128.6px;top:1323.96px;width:10.4px;height:45.9px;background:#2ecccc;"></div>
<div style="left:139px;top:1325.66px;width:1.2px;height:44.2px;background:#151617;"></div>
<div style="left:140.2px;top:1325.66px;width:39.8px;height:44.2px;background:#2ecccc;"></div>
<svg style="left:142.5px;top:1330.66px;" width="18" height="16" viewBox="0 0 18 16"><path d="M0.5 8 H2.5 L4 5 L5.5 11 L7 2 L8.5 14 L10 4 L11.5 12 L13 6 L14 10 L15 8 H17" stroke="#111" stroke-width="1.3" fill="none" stroke-linejoin="round"/></svg>
<div class="t" style="left:147px;top:1331.66px;font-size:12.5px;color:#151515;width:28px;text-align:right;">35</div>
<div style="left:185.5px;top:1328.36px;width:47.9px;height:17.1px;background:#2a2d31;border-radius:4px;border:1.5px solid #141618;"></div>
<div class="t" style="left:189.5px;top:1330.96px;font-size:12px;color:#c9c9c9;font-weight:bold;width:16px;text-align:center;">M</div>
<div class="t" style="left:213.5px;top:1330.96px;font-size:12px;color:#c9c9c9;font-weight:bold;width:16px;text-align:center;">S</div>
<div class="t" style="left:243.5px;top:1331.96px;font-size:13.0px;color:#e6e6e6;-webkit-text-stroke:0.3px #e6e6e6;">GTR Verse Chorus ...ar</div>
<div style="left:415.7px;top:1328.36px;width:96.3px;height:17.2px;background:#26292c;border-radius:4px;border:1.5px solid #141618;"></div>
<svg style="left:419px;top:1330.36px;" width="16" height="13" viewBox="0 0 16 13"><path d="M2 11 L13 2 V11Z" fill="#bdbdbd"/></svg>
<div style="left:435.8px;top:1334.96px;width:70.8px;height:4px;background:#3d3f42;border-radius:2px;"></div>
<div style="left:435.8px;top:1334.96px;width:38.2px;height:4px;background:#c8c8c8;border-radius:2px;"></div>
<div style="left:468px;top:1330.96px;width:12px;height:12px;background:#e2e2e2;border-radius:50%;"></div>
<div style="left:241px;top:1349.36px;width:46.2px;height:17.6px;background:#2a2d31;border-radius:4px;border:1.5px solid #141618;"></div>
<div style="left:249px;top:1354.66px;width:7px;height:7px;background:#5d5f62;border-radius:50%;"></div>
<svg style="left:268.5px;top:1352.16px;" width="14" height="12" viewBox="0 0 14 12"><path d="M1 4 H4 L8 1 V11 L4 8 H1Z" fill="#5d5f62"/><path d="M10 3 Q12.5 6 10 9" stroke="#5d5f62" stroke-width="1.3" fill="none"/></svg>
<div style="left:290.8px;top:1349.36px;width:46.2px;height:17.6px;background:#2a2d31;border-radius:4px;border:1.5px solid #141618;"></div>
<div class="t" style="left:296px;top:1350.66px;font-size:14px;color:#c9c9c9;font-weight:bold;width:12px;text-align:center;font-style:italic;">e</div>
<svg style="left:318.5px;top:1353.16px;" width="14" height="10" viewBox="0 0 14 10"><circle cx="4.5" cy="5" r="3.2" stroke="#c9c9c9" stroke-width="1.6" fill="none"/><circle cx="9.5" cy="5" r="3.2" stroke="#c9c9c9" stroke-width="1.6" fill="none"/></svg>
<div style="left:340.3px;top:1349.36px;width:46.5px;height:17.6px;background:#2a2d31;border-radius:4px;border:1.5px solid #141618;"></div>
<div class="t" style="left:344px;top:1352.16px;font-size:12px;color:#c9c9c9;font-weight:bold;width:16px;text-align:center;">R</div>
<div class="t" style="left:367.5px;top:1352.16px;font-size:12px;color:#c9c9c9;font-weight:bold;width:16px;text-align:center;">W</div>
<div style="left:390.4px;top:1349.36px;width:21.6px;height:17.6px;background:#2a2d31;border-radius:4px;border:1.5px solid #141618;"></div>
<svg style="left:395.2px;top:1352.66px;" width="12" height="11" viewBox="0 0 12 11"><path d="M1 1 H11 M1 4 H5 M7 4 H11 M1 7 H5 M7 7 H11 M1 10 H11" stroke="#c9c9c9" stroke-width="1.3"/></svg>
<div style="left:128.6px;top:1369.84px;width:10.4px;height:45.9px;background:#2ecccc;"></div>
<div style="left:139px;top:1371.54px;width:1.2px;height:44.2px;background:#151617;"></div>
<div style="left:140.2px;top:1371.54px;width:39.8px;height:44.2px;background:#2ecccc;"></div>
<svg style="left:142.5px;top:1376.54px;" width="18" height="16" viewBox="0 0 18 16"><path d="M0.5 8 H2.5 L4 5 L5.5 11 L7 2 L8.5 14 L10 4 L11.5 12 L13 6 L14 10 L15 8 H17" stroke="#111" stroke-width="1.3" fill="none" stroke-linejoin="round"/></svg>
<div class="t" style="left:147px;top:1377.54px;font-size:12.5px;color:#151515;width:28px;text-align:right;">36</div>
<div style="left:185.5px;top:1374.24px;width:47.9px;height:17.1px;background:#2a2d31;border-radius:4px;border:1.5px solid #141618;"></div>
<div class="t" style="left:189.5px;top:1376.84px;font-size:12px;color:#c9c9c9;font-weight:bold;width:16px;text-align:center;">M</div>
<div class="t" style="left:213.5px;top:1376.84px;font-size:12px;color:#c9c9c9;font-weight:bold;width:16px;text-align:center;">S</div>
<div class="t" style="left:243.5px;top:1377.84px;font-size:13.0px;color:#e6e6e6;-webkit-text-stroke:0.3px #e6e6e6;">GTR Prechorus Chords</div>
<div style="left:415.7px;top:1374.24px;width:96.3px;height:17.2px;background:#26292c;border-radius:4px;border:1.5px solid #141618;"></div>
<svg style="left:419px;top:1376.24px;" width="16" height="13" viewBox="0 0 16 13"><path d="M2 11 L13 2 V11Z" fill="#bdbdbd"/></svg>
<div style="left:435.8px;top:1380.84px;width:70.8px;height:4px;background:#3d3f42;border-radius:2px;"></div>
<div style="left:435.8px;top:1380.84px;width:50.2px;height:4px;background:#c8c8c8;border-radius:2px;"></div>
<div style="left:480px;top:1376.84px;width:12px;height:12px;background:#e2e2e2;border-radius:50%;"></div>
<div style="left:241px;top:1395.24px;width:46.2px;height:17.6px;background:#2a2d31;border-radius:4px;border:1.5px solid #141618;"></div>
<div style="left:249px;top:1400.54px;width:7px;height:7px;background:#5d5f62;border-radius:50%;"></div>
<svg style="left:268.5px;top:1398.04px;" width="14" height="12" viewBox="0 0 14 12"><path d="M1 4 H4 L8 1 V11 L4 8 H1Z" fill="#5d5f62"/><path d="M10 3 Q12.5 6 10 9" stroke="#5d5f62" stroke-width="1.3" fill="none"/></svg>
<div style="left:290.8px;top:1395.24px;width:46.2px;height:17.6px;background:#2a2d31;border-radius:4px;border:1.5px solid #141618;"></div>
<div class="t" style="left:296px;top:1396.54px;font-size:14px;color:#c9c9c9;font-weight:bold;width:12px;text-align:center;font-style:italic;">e</div>
<svg style="left:318.5px;top:1399.04px;" width="14" height="10" viewBox="0 0 14 10"><circle cx="4.5" cy="5" r="3.2" stroke="#c9c9c9" stroke-width="1.6" fill="none"/><circle cx="9.5" cy="5" r="3.2" stroke="#c9c9c9" stroke-width="1.6" fill="none"/></svg>
<div style="left:340.3px;top:1395.24px;width:46.5px;height:17.6px;background:#2a2d31;border-radius:4px;border:1.5px solid #141618;"></div>
<div class="t" style="left:344px;top:1398.04px;font-size:12px;color:#c9c9c9;font-weight:bold;width:16px;text-align:center;">R</div>
<div class="t" style="left:367.5px;top:1398.04px;font-size:12px;color:#c9c9c9;font-weight:bold;width:16px;text-align:center;">W</div>
<div style="left:390.4px;top:1395.24px;width:21.6px;height:17.6px;background:#2a2d31;border-radius:4px;border:1.5px solid #141618;"></div>
<svg style="left:395.2px;top:1398.54px;" width="12" height="11" viewBox="0 0 12 11"><path d="M1 1 H11 M1 4 H5 M7 4 H11 M1 7 H5 M7 7 H11 M1 10 H11" stroke="#c9c9c9" stroke-width="1.3"/></svg>
<div style="left:128.6px;top:1415.72px;width:10.4px;height:45.9px;background:#2ecccc;"></div>
<div style="left:139px;top:1417.42px;width:1.2px;height:44.2px;background:#151617;"></div>
<div style="left:140.2px;top:1417.42px;width:39.8px;height:44.2px;background:#2ecccc;"></div>
<svg style="left:142.5px;top:1422.42px;" width="18" height="16" viewBox="0 0 18 16"><path d="M0.5 8 H2.5 L4 5 L5.5 11 L7 2 L8.5 14 L10 4 L11.5 12 L13 6 L14 10 L15 8 H17" stroke="#111" stroke-width="1.3" fill="none" stroke-linejoin="round"/></svg>
<div class="t" style="left:147px;top:1423.42px;font-size:12.5px;color:#151515;width:28px;text-align:right;">37</div>
<div style="left:185.5px;top:1420.12px;width:47.9px;height:17.1px;background:#2a2d31;border-radius:4px;border:1.5px solid #141618;"></div>
<div class="t" style="left:189.5px;top:1422.72px;font-size:12px;color:#c9c9c9;font-weight:bold;width:16px;text-align:center;">M</div>
<div class="t" style="left:213.5px;top:1422.72px;font-size:12px;color:#c9c9c9;font-weight:bold;width:16px;text-align:center;">S</div>
<div class="t" style="left:243.5px;top:1423.72px;font-size:13.0px;color:#e6e6e6;-webkit-text-stroke:0.3px #e6e6e6;">GTR Prechorus Crunch</div>
<div style="left:415.7px;top:1420.12px;width:96.3px;height:17.2px;background:#26292c;border-radius:4px;border:1.5px solid #141618;"></div>
<svg style="left:419px;top:1422.12px;" width="16" height="13" viewBox="0 0 16 13"><path d="M2 11 L13 2 V11Z" fill="#bdbdbd"/></svg>
<div style="left:435.8px;top:1426.72px;width:70.8px;height:4px;background:#3d3f42;border-radius:2px;"></div>
<div style="left:435.8px;top:1426.72px;width:29.2px;height:4px;background:#c8c8c8;border-radius:2px;"></div>
<div style="left:459px;top:1422.72px;width:12px;height:12px;background:#e2e2e2;border-radius:50%;"></div>
<div style="left:241px;top:1441.12px;width:46.2px;height:17.6px;background:#2a2d31;border-radius:4px;border:1.5px solid #141618;"></div>
<div style="left:249px;top:1446.42px;width:7px;height:7px;background:#5d5f62;border-radius:50%;"></div>
<svg style="left:268.5px;top:1443.92px;" width="14" height="12" viewBox="0 0 14 12"><path d="M1 4 H4 L8 1 V11 L4 8 H1Z" fill="#5d5f62"/><path d="M10 3 Q12.5 6 10 9" stroke="#5d5f62" stroke-width="1.3" fill="none"/></svg>
<div style="left:290.8px;top:1441.12px;width:46.2px;height:17.6px;background:#2a2d31;border-radius:4px;border:1.5px solid #141618;"></div>
<div class="t" style="left:296px;top:1442.42px;font-size:14px;color:#c9c9c9;font-weight:bold;width:12px;text-align:center;font-style:italic;">e</div>
<svg style="left:318.5px;top:1444.92px;" width="14" height="10" viewBox="0 0 14 10"><circle cx="4.5" cy="5" r="3.2" stroke="#c9c9c9" stroke-width="1.6" fill="none"/><circle cx="9.5" cy="5" r="3.2" stroke="#c9c9c9" stroke-width="1.6" fill="none"/></svg>
<div style="left:340.3px;top:1441.12px;width:46.5px;height:17.6px;background:#2a2d31;border-radius:4px;border:1.5px solid #141618;"></div>
<div class="t" style="left:344px;top:1443.92px;font-size:12px;color:#c9c9c9;font-weight:bold;width:16px;text-align:center;">R</div>
<div class="t" style="left:367.5px;top:1443.92px;font-size:12px;color:#c9c9c9;font-weight:bold;width:16px;text-align:center;">W</div>
<div style="left:390.4px;top:1441.12px;width:21.6px;height:17.6px;background:#2a2d31;border-radius:4px;border:1.5px solid #141618;"></div>
<svg style="left:395.2px;top:1444.42px;" width="12" height="11" viewBox="0 0 12 11"><path d="M1 1 H11 M1 4 H5 M7 4 H11 M1 7 H5 M7 7 H11 M1 10 H11" stroke="#c9c9c9" stroke-width="1.3"/></svg>
<div style="left:128.6px;top:1463.3px;width:39.9px;height:45.9px;background:#3aa8ea;"></div>
<svg style="left:131px;top:1469.3px;" width="18" height="14" viewBox="0 0 18 14"><path d="M1 2 H6 L7.5 4 H14 V6 H4 L1 13Z" fill="#111"/><path d="M4 6.5 H17 L14 13 H1Z" fill="#111"/></svg>
<div style="left:174.7px;top:1466px;width:47.6px;height:17.1px;background:#2a2d31;border-radius:4px;border:1.5px solid #141618;"></div>
<div class="t" style="left:178.5px;top:1468.6px;font-size:12px;color:#c9c9c9;font-weight:bold;width:16px;text-align:center;">M</div>
<div class="t" style="left:202.5px;top:1468.6px;font-size:12px;color:#c9c9c9;font-weight:bold;width:16px;text-align:center;">S</div>
<div class="t" style="left:232.7px;top:1469.6px;font-size:13.0px;color:#e6e6e6;-webkit-text-stroke:0.3px #e6e6e6;">Synths</div>
<div style="left:230px;top:1487px;width:46px;height:17.6px;background:#2a2d31;border-radius:4px;border:1.5px solid #141618;"></div>
<div style="left:238px;top:1492.3px;width:7px;height:7px;background:#c9c9c9;border-radius:50%;"></div>
<svg style="left:257.5px;top:1489.8px;" width="14" height="12" viewBox="0 0 14 12"><path d="M1 4 H4 L8 1 V11 L4 8 H1Z" fill="#c9c9c9"/><path d="M10 3 Q12.5 6 10 9" stroke="#c9c9c9" stroke-width="1.3" fill="none"/></svg>
<div style="left:279.7px;top:1487px;width:46.6px;height:17.6px;background:#2a2d31;border-radius:4px;border:1.5px solid #141618;"></div>
<div style="left:285.5px;top:1493.3px;width:10px;height:1.8px;background:#c9c9c9;"></div>
<div style="left:285.5px;top:1496.8px;width:10px;height:1.8px;background:#c9c9c9;"></div>
<svg style="left:303px;top:1489.3px;" width="12" height="13" viewBox="0 0 12 13"><path d="M2 6 L6 2 L10 6 M2 11 L6 7 L10 11" stroke="#c9c9c9" stroke-width="1.4" fill="none"/></svg>
<div style="left:128.6px;top:1507.48px;width:10.4px;height:45.9px;background:#3aa8ea;"></div>
<div style="left:139px;top:1509.18px;width:1.2px;height:44.2px;background:#151617;"></div>
<div style="left:140.2px;top:1509.18px;width:39.8px;height:44.2px;background:#3aa8ea;"></div>
<svg style="left:142.5px;top:1514.18px;" width="18" height="16" viewBox="0 0 18 16"><path d="M3 1 V11 M8 1 V11 M13 1 V11" stroke="#111" stroke-width="1.6"/><path d="M1 5 H5 M6 8 H10 M11 4 H15" stroke="#111" stroke-width="2.4"/><path d="M3.5 11 V14 H12.5 V11" stroke="#111" stroke-width="1.8" fill="none"/></svg>
<div class="t" style="left:147px;top:1515.18px;font-size:12.5px;color:#151515;width:28px;text-align:right;">38</div>
<div style="left:185.5px;top:1511.88px;width:47.9px;height:17.1px;background:#2a2d31;border-radius:4px;border:1.5px solid #141618;"></div>
<div class="t" style="left:189.5px;top:1514.48px;font-size:12px;color:#c9c9c9;font-weight:bold;width:16px;text-align:center;">M</div>
<div class="t" style="left:213.5px;top:1514.48px;font-size:12px;color:#c9c9c9;font-weight:bold;width:16px;text-align:center;">S</div>
<div class="t" style="left:243.5px;top:1515.48px;font-size:13.0px;color:#e6e6e6;-webkit-text-stroke:0.3px #e6e6e6;">GROUP Synths and Keys</div>
<div style="left:415.7px;top:1511.88px;width:96.3px;height:17.2px;background:#26292c;border-radius:4px;border:1.5px solid #141618;"></div>
<svg style="left:419px;top:1513.88px;" width="16" height="13" viewBox="0 0 16 13"><path d="M2 11 L13 2 V11Z" fill="#bdbdbd"/></svg>
<div style="left:435.8px;top:1518.48px;width:70.8px;height:4px;background:#3d3f42;border-radius:2px;"></div>
<div style="left:435.8px;top:1518.48px;width:40.2px;height:4px;background:#c8c8c8;border-radius:2px;"></div>
<div style="left:470px;top:1514.48px;width:12px;height:12px;background:#e2e2e2;border-radius:50%;"></div>
<div style="left:241px;top:1532.88px;width:46.2px;height:17.6px;background:#2a2d31;border-radius:4px;border:1.5px solid #141618;"></div>
<div class="t" style="left:244.5px;top:1535.68px;font-size:12px;color:#c9c9c9;font-weight:bold;width:16px;text-align:center;">R</div>
<div class="t" style="left:268px;top:1535.68px;font-size:12px;color:#c9c9c9;font-weight:bold;width:16px;text-align:center;">W</div>
<div style="left:290.8px;top:1532.88px;width:46.2px;height:17.6px;background:#2a2d31;border-radius:4px;border:1.5px solid #141618;"></div>
<div class="t" style="left:296px;top:1534.18px;font-size:14px;color:#c9c9c9;font-weight:bold;width:12px;text-align:center;font-style:italic;">e</div>
<svg style="left:318.5px;top:1536.68px;" width="14" height="10" viewBox="0 0 14 10"><circle cx="4.5" cy="5" r="3.2" stroke="#c9c9c9" stroke-width="1.6" fill="none"/><circle cx="9.5" cy="5" r="3.2" stroke="#c9c9c9" stroke-width="1.6" fill="none"/></svg>
<div style="left:340.3px;top:1532.88px;width:71.7px;height:17.6px;background:#1f2124;border-radius:4px;border:1.5px solid #141618;"></div>
<div class="t" style="left:360px;top:1537.18px;font-size:10.5px;color:#c8c8c8;width:40px;text-align:right;">-5.00</div>
<svg style="left:402px;top:1535.88px;" width="8" height="12" viewBox="0 0 8 12"><path d="M4 1 L7 5 H1Z M4 11 L7 7 H1Z" fill="#c8c8c8"/></svg>
<div style="left:415.7px;top:1532.88px;width:96.3px;height:17.2px;background:#26292c;border-radius:4px;border:1.5px solid #141618;"></div>
<svg style="left:419px;top:1534.88px;" width="16" height="13" viewBox="0 0 16 13"><path d="M2 11 V2 L7.5 8 L13 2 V11Z" fill="#bdbdbd"/></svg>
<div style="left:435.8px;top:1539.48px;width:70.8px;height:4px;background:#3d3f42;border-radius:2px;"></div>
<div style="left:464.5px;top:1535.48px;width:12px;height:12px;background:#e2e2e2;border-radius:50%;"></div>
<div style="left:128.6px;top:1553.36px;width:10.4px;height:45.9px;background:#3aa8ea;"></div>
<div style="left:139px;top:1555.06px;width:1.2px;height:44.2px;background:#151617;"></div>
<div style="left:140.2px;top:1555.06px;width:39.8px;height:44.2px;background:#3aa8ea;"></div>
<svg style="left:142.5px;top:1560.06px;" width="18" height="16" viewBox="0 0 18 16"><path d="M1 1h3v13h-3zM5 1h3v13h-3zM9 1h3v13h-3zM13 1h3v13h-3z" fill="#111"/></svg>
<div class="t" style="left:147px;top:1561.06px;font-size:12.5px;color:#151515;width:28px;text-align:right;">39</div>
<div style="left:185.5px;top:1557.76px;width:47.9px;height:17.1px;background:#2a2d31;border-radius:4px;border:1.5px solid #141618;"></div>
<div class="t" style="left:189.5px;top:1560.36px;font-size:12px;color:#c9c9c9;font-weight:bold;width:16px;text-align:center;">M</div>
<div class="t" style="left:213.5px;top:1560.36px;font-size:12px;color:#c9c9c9;font-weight:bold;width:16px;text-align:center;">S</div>
<div class="t" style="left:243.5px;top:1561.36px;font-size:13.0px;color:#e6e6e6;-webkit-text-stroke:0.3px #e6e6e6;">SYN Mello Strings</div>
<div style="left:415.7px;top:1557.76px;width:96.3px;height:17.2px;background:#26292c;border-radius:4px;border:1.5px solid #141618;"></div>
<svg style="left:419px;top:1559.76px;" width="16" height="13" viewBox="0 0 16 13"><path d="M2 11 L13 2 V11Z" fill="#bdbdbd"/></svg>
<div style="left:435.8px;top:1564.36px;width:70.8px;height:4px;background:#3d3f42;border-radius:2px;"></div>
<div style="left:435.8px;top:1564.36px;width:54.2px;height:4px;background:#c8c8c8;border-radius:2px;"></div>
<div style="left:484px;top:1560.36px;width:12px;height:12px;background:#e2e2e2;border-radius:50%;"></div>
<div style="left:241px;top:1578.76px;width:46.2px;height:17.6px;background:#2a2d31;border-radius:4px;border:1.5px solid #141618;"></div>
<div style="left:249px;top:1584.06px;width:7px;height:7px;background:#c9c9c9;border-radius:50%;"></div>
<svg style="left:268.5px;top:1581.56px;" width="14" height="12" viewBox="0 0 14 12"><path d="M1 4 H4 L8 1 V11 L4 8 H1Z" fill="#c9c9c9"/><path d="M10 3 Q12.5 6 10 9" stroke="#c9c9c9" stroke-width="1.3" fill="none"/></svg>
<div style="left:290.8px;top:1578.76px;width:46.2px;height:17.6px;background:#2a2d31;border-radius:4px;border:1.5px solid #141618;"></div>
<div class="t" style="left:296px;top:1580.06px;font-size:14px;color:#c9c9c9;font-weight:bold;width:12px;text-align:center;font-style:italic;">e</div>
<svg style="left:319.5px;top:1582.06px;" width="12" height="11" viewBox="0 0 12 11"><rect x="0.5" y="0" width="11" height="11" fill="#c9c9c9"/><path d="M3 0 V11 M6 0 V11 M9 0 V11" stroke="#2a2d31" stroke-width="1"/><path d="M3 7 V11 M6 7 V11 M9 7 V11" stroke="#2a2d31" stroke-width="0.8"/></svg>
<div style="left:340.3px;top:1578.76px;width:46.5px;height:17.6px;background:#2a2d31;border-radius:4px;border:1.5px solid #141618;"></div>
<div class="t" style="left:344px;top:1581.56px;font-size:12px;color:#c9c9c9;font-weight:bold;width:16px;text-align:center;">R</div>
<div class="t" style="left:367.5px;top:1581.56px;font-size:12px;color:#c9c9c9;font-weight:bold;width:16px;text-align:center;">W</div>
<div style="left:390.4px;top:1578.76px;width:21.6px;height:17.6px;background:#2a2d31;border-radius:4px;border:1.5px solid #141618;"></div>
<svg style="left:395.2px;top:1582.06px;" width="12" height="11" viewBox="0 0 12 11"><path d="M1 1 H11 M1 4 H5 M7 4 H11 M1 7 H5 M7 7 H11 M1 10 H11" stroke="#c9c9c9" stroke-width="1.3"/></svg>
<div style="left:415.7px;top:1578.76px;width:96.3px;height:17.2px;background:#26292c;border-radius:4px;border:1.5px solid #141618;"></div>
<svg style="left:419px;top:1580.76px;" width="16" height="13" viewBox="0 0 16 13"><path d="M2 11 V2 L7.5 8 L13 2 V11Z" fill="#bdbdbd"/></svg>
<div style="left:435.8px;top:1585.36px;width:70.8px;height:4px;background:#3d3f42;border-radius:2px;"></div>
<div style="left:464.5px;top:1581.36px;width:12px;height:12px;background:#e2e2e2;border-radius:50%;"></div>
<div style="left:128.6px;top:1599.24px;width:10.4px;height:45.9px;background:#3aa8ea;"></div>
<div style="left:139px;top:1600.94px;width:1.2px;height:44.2px;background:#151617;"></div>
<div style="left:140.2px;top:1600.94px;width:39.8px;height:44.2px;background:#3aa8ea;"></div>
<svg style="left:142.5px;top:1605.94px;" width="18" height="16" viewBox="0 0 18 16"><path d="M1 1h3v13h-3zM5 1h3v13h-3zM9 1h3v13h-3zM13 1h3v13h-3z" fill="#111"/></svg>
<div class="t" style="left:147px;top:1606.94px;font-size:12.5px;color:#151515;width:28px;text-align:right;">40</div>
<div style="left:185.5px;top:1603.64px;width:47.9px;height:17.1px;background:#2a2d31;border-radius:4px;border:1.5px solid #141618;"></div>
<div class="t" style="left:189.5px;top:1606.24px;font-size:12px;color:#c9c9c9;font-weight:bold;width:16px;text-align:center;">M</div>
<div class="t" style="left:213.5px;top:1606.24px;font-size:12px;color:#c9c9c9;font-weight:bold;width:16px;text-align:center;">S</div>
<div class="t" style="left:243.5px;top:1607.24px;font-size:13.0px;color:#e6e6e6;-webkit-text-stroke:0.3px #e6e6e6;">SYN Bell Lead</div>
<div style="left:415.7px;top:1603.64px;width:96.3px;height:17.2px;background:#26292c;border-radius:4px;border:1.5px solid #141618;"></div>
<svg style="left:419px;top:1605.64px;" width="16" height="13" viewBox="0 0 16 13"><path d="M2 11 L13 2 V11Z" fill="#bdbdbd"/></svg>
<div style="left:435.8px;top:1610.24px;width:70.8px;height:4px;background:#3d3f42;border-radius:2px;"></div>
<div style="left:435.8px;top:1610.24px;width:26.2px;height:4px;background:#c8c8c8;border-radius:2px;"></div>
<div style="left:456px;top:1606.24px;width:12px;height:12px;background:#e2e2e2;border-radius:50%;"></div>
<div style="left:241px;top:1624.64px;width:46.2px;height:17.6px;background:#2a2d31;border-radius:4px;border:1.5px solid #141618;"></div>
<div style="left:249px;top:1629.94px;width:7px;height:7px;background:#c9c9c9;border-radius:50%;"></div>
<svg style="left:268.5px;top:1627.44px;" width="14" height="12" viewBox="0 0 14 12"><path d="M1 4 H4 L8 1 V11 L4 8 H1Z" fill="#c9c9c9"/><path d="M10 3 Q12.5 6 10 9" stroke="#c9c9c9" stroke-width="1.3" fill="none"/></svg>
<div style="left:290.8px;top:1624.64px;width:46.2px;height:17.6px;background:#2a2d31;border-radius:4px;border:1.5px solid #141618;"></div>
<div class="t" style="left:296px;top:1625.94px;font-size:14px;color:#c9c9c9;font-weight:bold;width:12px;text-align:center;font-style:italic;">e</div>
<svg style="left:319.5px;top:1627.94px;" width="12" height="11" viewBox="0 0 12 11"><rect x="0.5" y="0" width="11" height="11" fill="#c9c9c9"/><path d="M3 0 V11 M6 0 V11 M9 0 V11" stroke="#2a2d31" stroke-width="1"/><path d="M3 7 V11 M6 7 V11 M9 7 V11" stroke="#2a2d31" stroke-width="0.8"/></svg>
<div style="left:340.3px;top:1624.64px;width:46.5px;height:17.6px;background:#2a2d31;border-radius:4px;border:1.5px solid #141618;"></div>
<div class="t" style="left:344px;top:1627.44px;font-size:12px;color:#c9c9c9;font-weight:bold;width:16px;text-align:center;">R</div>
<div class="t" style="left:367.5px;top:1627.44px;font-size:12px;color:#c9c9c9;font-weight:bold;width:16px;text-align:center;">W</div>
<div style="left:390.4px;top:1624.64px;width:21.6px;height:17.6px;background:#2a2d31;border-radius:4px;border:1.5px solid #141618;"></div>
<svg style="left:395.2px;top:1627.94px;" width="12" height="11" viewBox="0 0 12 11"><path d="M1 1 H11 M1 4 H5 M7 4 H11 M1 7 H5 M7 7 H11 M1 10 H11" stroke="#c9c9c9" stroke-width="1.3"/></svg>
<div style="left:415.7px;top:1624.64px;width:96.3px;height:17.2px;background:#26292c;border-radius:4px;border:1.5px solid #141618;"></div>
<svg style="left:419px;top:1626.64px;" width="16" height="13" viewBox="0 0 16 13"><path d="M2 11 V2 L7.5 8 L13 2 V11Z" fill="#bdbdbd"/></svg>
<div style="left:435.8px;top:1631.24px;width:70.8px;height:4px;background:#3d3f42;border-radius:2px;"></div>
<div style="left:464.5px;top:1627.24px;width:12px;height:12px;background:#e2e2e2;border-radius:50%;"></div>
<div style="left:128.5px;top:80px;width:40.5px;height:7px;background:#e8bb3e;"></div>
<div style="left:124.5px;top:80px;width:398.3px;height:0.1px;"></div>
<div style="left:124.5px;top:1623px;width:398.3px;height:19.5px;background:#232629;"></div>
<div style="left:522.8px;top:1623px;width:10.5px;height:3px;background:#000;"></div>
<div class="t" style="left:136px;top:1626px;font-size:10px;color:#bbb;">-</div>
<svg style="left:496px;top:1624px;" width="14" height="10" viewBox="0 0 14 10"><path d="M2 2 H12 L7 8Z" fill="#8a8c8f"/></svg>
<svg style="left:514px;top:1623px;" width="14" height="14" viewBox="0 0 14 14"><circle cx="7" cy="7" r="4.2" stroke="#8a8c8f" stroke-width="2.6" fill="none" stroke-dasharray="2.2 1.1"/></svg>
<div style="left:524.3px;top:99px;width:2.8px;height:29px;background:linear-gradient(#3cf0a0,#25c8f0);"></div>
<div style="left:528.3px;top:101px;width:2.8px;height:27px;background:linear-gradient(#3cf0a0,#25c8f0);"></div>
<div style="left:524.3px;top:200px;width:2.8px;height:21px;background:linear-gradient(#3cf0a0,#25c8f0);"></div>
<div style="left:528.3px;top:202px;width:2.8px;height:19px;background:linear-gradient(#3cf0a0,#25c8f0);"></div>
<div style="left:524.3px;top:345px;width:2.8px;height:12px;background:linear-gradient(#3cf0a0,#25c8f0);"></div>
<div style="left:528.3px;top:347px;width:2.8px;height:10px;background:linear-gradient(#3cf0a0,#25c8f0);"></div>
<div style="left:524.3px;top:390px;width:2.8px;height:14px;background:linear-gradient(#3cf0a0,#25c8f0);"></div>
<div style="left:528.3px;top:392px;width:2.8px;height:12px;background:linear-gradient(#3cf0a0,#25c8f0);"></div>
<div style="left:524.3px;top:435px;width:2.8px;height:14px;background:linear-gradient(#3cf0a0,#25c8f0);"></div>
<div style="left:528.3px;top:437px;width:2.8px;height:12px;background:linear-gradient(#3cf0a0,#25c8f0);"></div>
<div style="left:524.3px;top:562px;width:2.8px;height:26px;background:linear-gradient(#3cf0a0,#25c8f0);"></div>
<div style="left:528.3px;top:564px;width:2.8px;height:24px;background:linear-gradient(#3cf0a0,#25c8f0);"></div>
<div style="left:524.3px;top:601px;width:2.8px;height:34px;background:linear-gradient(#3cf0a0,#25c8f0);"></div>
<div style="left:528.3px;top:603px;width:2.8px;height:32px;background:linear-gradient(#3cf0a0,#25c8f0);"></div>
<div style="left:524.3px;top:746px;width:2.8px;height:25px;background:linear-gradient(#3cf0a0,#25c8f0);"></div>
<div style="left:528.3px;top:748px;width:2.8px;height:23px;background:linear-gradient(#3cf0a0,#25c8f0);"></div>
<div style="left:524.3px;top:795px;width:2.8px;height:20px;background:linear-gradient(#3cf0a0,#25c8f0);"></div>
<div style="left:528.3px;top:797px;width:2.8px;height:18px;background:linear-gradient(#3cf0a0,#25c8f0);"></div>
<div style="left:524.3px;top:834px;width:2.8px;height:28px;background:linear-gradient(#3cf0a0,#25c8f0);"></div>
<div style="left:528.3px;top:836px;width:2.8px;height:26px;background:linear-gradient(#3cf0a0,#25c8f0);"></div>
<div style="left:524.3px;top:885px;width:2.8px;height:23px;background:linear-gradient(#3cf0a0,#25c8f0);"></div>
<div style="left:528.3px;top:887px;width:2.8px;height:21px;background:linear-gradient(#3cf0a0,#25c8f0);"></div>
<div style="left:524.3px;top:932px;width:2.8px;height:23px;background:linear-gradient(#3cf0a0,#25c8f0);"></div>
<div style="left:528.3px;top:934px;width:2.8px;height:21px;background:linear-gradient(#3cf0a0,#25c8f0);"></div>
<div style="left:524.3px;top:992px;width:2.8px;height:9px;background:linear-gradient(#3cf0a0,#25c8f0);"></div>
<div style="left:528.3px;top:994px;width:2.8px;height:7px;background:linear-gradient(#3cf0a0,#25c8f0);"></div>
<div style="left:524.3px;top:1529px;width:2.8px;height:23px;background:linear-gradient(#3cf0a0,#25c8f0);"></div>
<div style="left:528.3px;top:1531px;width:2.8px;height:21px;background:linear-gradient(#3cf0a0,#25c8f0);"></div>
<div style="left:534.6px;top:46px;width:2.2px;height:1580px;background:#66686b;"></div>
<svg style="left:0;top:0;font-family:'Liberation Sans',sans-serif" width="3000" height="1688"><defs><pattern id="wd" width="60" height="42" patternUnits="userSpaceOnUse"><path fill="#0a2324" d="M0 15.3L1.5 14.1L3 15.2L4.5 16L6 14.9L7.5 16.3L9 16.3L10.5 12.2L12 13.9L13.5 14.8L15 13.6L16.5 12.6L18 16L19.5 16.4L21 15.4L22.5 15.2L24 15.2L25.5 15.3L27 13.9L28.5 14.3L30 15.7L31.5 15.7L33 14.5L34.5 14.3L36 14L37.5 16.5L39 14.1L40.5 14L42 16.3L43.5 14.5L45 16.3L46.5 14L48 16.2L49.5 13.7L51 14.4L52.5 15L54 16L55.5 16.2L57 16.2L58.5 15.9L60 14L60 26.7L58.5 24.8L57 24.6L55.5 24.6L54 24.8L52.5 25.7L51 26.3L49.5 26.9L48 24.6L46.5 26.7L45 24.5L43.5 26.2L42 24.5L40.5 26.7L39 26.5L37.5 24.3L36 26.7L34.5 26.4L33 26.2L31.5 25L30 25.1L28.5 26.4L27 26.8L25.5 25.4L24 25.5L22.5 25.6L21 25.4L19.5 24.4L18 24.8L16.5 28L15 27.1L13.5 25.9L12 26.7L10.5 28.4L9 24.5L7.5 24.5L6 25.9L4.5 24.8L3 25.6L1.5 26.6L0 25.4z"/></pattern><pattern id="wb" width="95" height="42" patternUnits="userSpaceOnUse"><path fill="#0a2324" d="M0 19.7L1.2 18.7L2.4 17.2L3.6 17.1L4.8 17.1L6 16.7L7.2 17.9L8.4 18.7L9.6 19.7L10.8 18.6L12 17.2L13.2 15.9L14.4 16.8L15.6 16.6L16.8 18.1L18 18.8L19.2 19.7L20.4 18.3L21.6 17.9L22.8 15.7L24 16.3L25.2 16.7L26.4 17.3L27.6 19.3L28.8 19.6L30 18.1L31.2 17.1L32.4 17.1L33.6 14.7L34.8 15.7L36 18.3L37.2 19.2L38.4 19.6L39.6 18.5L40.8 16.8L42 16.9L43.2 15.5L44.4 17.6L45.6 18.4L46.8 19.2L48 19.5L49.2 18.3L50.4 16.7L51.6 16.1L52.8 16.3L54 17.7L55.2 17.9L56.4 19.3L57.6 19.3L58.8 17.9L60 17.1L61.2 16.3L62.4 15.6L63.6 16.6L64.8 18.6L66 19.5L67.2 19.3L68.4 18L69.6 16.1L70.8 16L72 17.2L73.2 16.4L74.4 18.4L75.6 19.5L76.8 19.3L78 18L79.2 16.8L80.4 15.3L81.6 17.1L82.8 17L84 18.7L85.2 19.6L86.4 19.3L87.6 18L88.8 16.9L90 15.6L91.2 17.2L92.4 17.3L93.6 18.8L94.8 19.6L94.8 21.3L93.6 22.1L92.4 23.6L91.2 23.6L90 25.2L88.8 24L87.6 22.8L86.4 21.7L85.2 21.4L84 22.2L82.8 23.8L81.6 23.8L80.4 25.5L79.2 24L78 22.9L76.8 21.7L75.6 21.4L74.4 22.5L73.2 24.4L72 23.6L70.8 24.8L69.6 24.7L68.4 22.9L67.2 21.6L66 21.5L64.8 22.3L63.6 24.2L62.4 25.2L61.2 24.5L60 23.8L58.8 22.9L57.6 21.7L56.4 21.7L55.2 23L54 23.2L52.8 24.5L51.6 24.7L50.4 24.1L49.2 22.6L48 21.5L46.8 21.7L45.6 22.5L44.4 23.3L43.2 25.3L42 23.9L40.8 24L39.6 22.4L38.4 21.4L37.2 21.7L36 22.5L34.8 25.1L33.6 26L32.4 23.7L31.2 23.8L30 22.8L28.8 21.3L27.6 21.6L26.4 23.5L25.2 24.1L24 24.5L22.8 25L21.6 23L20.4 22.6L19.2 21.3L18 22.1L16.8 22.8L15.6 24.2L14.4 24L13.2 24.9L12 23.6L10.8 22.3L9.6 21.3L8.4 22.2L7.2 23L6 24.2L4.8 23.7L3.6 23.7L2.4 23.7L1.2 22.2L0 21.3z"/></pattern><pattern id="wt" width="95" height="42" patternUnits="userSpaceOnUse"><path fill="#0a2324" d="M0 19.4L2 19.4L4 19.4L6 19.3L8 19.5L10 19.5L12 19.5L14 19.5L16 19.4L18 19.5L20 19.4L22 19.5L24 19.4L26 19.4L28 19.3L30 19.4L32 19.5L34 19.4L36 19.5L38 19.3L40 19.3L42 19.3L44 19.3L46 19.4L48 19.3L50 19.3L52 19.4L54 19.3L56 19.4L58 19.3L60 19.4L62 18.9L64 19L66 18.9L68 19.1L70 19.3L72 18.4L74 18.4L76 18.1L78 18.5L80 18.7L82 18.5L84 19.3L86 18.6L88 18.9L90 19.3L92 19.2L94 18.8L96 19.4L96 21.5L94 22.1L92 21.7L90 21.7L88 22L86 22.4L84 21.6L82 22.4L80 22.2L78 22.4L76 22.8L74 22.5L72 22.5L70 21.6L68 21.9L66 22L64 21.9L62 22L60 21.6L58 21.6L56 21.5L54 21.6L52 21.5L50 21.6L48 21.6L46 21.6L44 21.6L42 21.6L40 21.6L38 21.6L36 21.5L34 21.5L32 21.5L30 21.6L28 21.6L26 21.5L24 21.5L22 21.5L20 21.6L18 21.5L16 21.6L14 21.5L12 21.5L10 21.5L8 21.5L6 21.6L4 21.6L2 21.6L0 21.5z"/></pattern><pattern id="wl" width="118.6" height="42" patternUnits="userSpaceOnUse"><path fill="#0a2324" d="M0 19.9L1.5 19.9L3 11.6L4.5 11.9L6 14L7.5 14.6L9 14.4L10.5 15L12 16L13.5 16L15 16.6L16.5 16.6L18 17.5L19.5 17.7L21 17.4L22.5 18L24 18.3L25.5 18.2L27 18.4L28.5 18.8L30 18.7L31.5 18.8L33 19.1L34.5 19L36 19.2L37.5 19.3L39 19.4L40.5 19.4L42 19.3L43.5 19.5L45 19.4L46.5 19.6L48 19.6L49.5 19.6L51 19.6L52.5 19.7L54 19.7L55.5 19.7L57 19.7L58.5 19.8L60 19.7L61.5 19.8L63 19.8L64.5 19.8L66 19.8L67.5 19.8L69 19.8L70.5 19.8L72 19.8L73.5 19.9L75 19.9L76.5 19.9L78 19.9L79.5 19.9L81 19.9L82.5 19.9L84 19.9L85.5 19.9L87 19.9L88.5 19.9L90 19.9L91.5 19.9L93 19.9L94.5 19.9L96 19.9L97.5 19.9L99 19.9L100.5 19.9L102 19.9L103.5 19.9L105 19.9L106.5 19.9L108 19.9L109.5 19.9L111 19.9L112.5 19.9L114 19.9L115.5 19.9L117 19.9L118.5 19.9L118.5 21.1L117 21.1L115.5 21.1L114 21.1L112.5 21.1L111 21.1L109.5 21.1L108 21.1L106.5 21.1L105 21.1L103.5 21.1L102 21.1L100.5 21.1L99 21.1L97.5 21.1L96 21.1L94.5 21.1L93 21.1L91.5 21.1L90 21.1L88.5 21.1L87 21.1L85.5 21.1L84 21.1L82.5 21.1L81 21.1L79.5 21.1L78 21.1L76.5 21.1L75 21.1L73.5 21.1L72 21.1L70.5 21.1L69 21.1L67.5 21.2L66 21.1L64.5 21.2L63 21.2L61.5 21.2L60 21.2L58.5 21.2L57 21.2L55.5 21.3L54 21.3L52.5 21.3L51 21.3L49.5 21.4L48 21.4L46.5 21.4L45 21.5L43.5 21.5L42 21.6L40.5 21.5L39 21.6L37.5 21.7L36 21.7L34.5 21.9L33 21.9L31.5 22.1L30 22.2L28.5 22.2L27 22.5L25.5 22.7L24 22.6L22.5 22.9L21 23.4L19.5 23.2L18 23.4L16.5 24.2L15 24.2L13.5 24.8L12 24.8L10.5 25.7L9 26.3L7.5 26.1L6 26.7L4.5 28.7L3 28.9L1.5 21.1L0 21.1z"/></pattern><pattern id="wa" width="15" height="42" patternUnits="userSpaceOnUse"><path fill="#0a2324" d="M0 19.4L1 14.4L2 14.2L3 16L4 15.8L5 17.4L6 17.2L7 17.8L8 18.1L9 18.4L10 18.9L11 19.1L12 19.1L13 19.3L14 19.5L15 19.5L15 21.4L14 21.5L13 21.6L12 21.8L11 21.9L10 22L9 22.5L8 22.8L7 23L6 23.6L5 23.4L4 25L3 24.8L2 26.5L1 26.3L0 21.5z"/></pattern><pattern id="ws" width="474.4" height="42" patternUnits="userSpaceOnUse"><path fill="#0a2324" d="M0 18.7L1.5 18.9L3 19.2L4.5 19.4L6 19.5L7.5 19.8L9 19.8L10.5 19.8L12 19.8L13.5 19.8L15 19.8L16.5 19.8L18 19.8L19.5 19.8L21 19.8L22.5 19.8L24 19.8L25.5 19.8L27 19.8L28.5 19.8L30 19.8L31.5 19.8L33 19.8L34.5 19.8L36 19.8L37.5 19.8L39 19.8L40.5 19.8L42 19.8L43.5 19.8L45 19.8L46.5 19.8L48 19.8L49.5 19.8L51 19.8L52.5 19.8L54 19.8L55.5 19.8L57 19.8L58.5 19.8L60 14.2L61.5 16.5L63 17L64.5 18.4L66 18.6L67.5 18.9L69 19.2L70.5 19.2L72 19.5L73.5 14.5L75 15.7L76.5 17.7L78 17.8L79.5 18.4L81 18.8L82.5 19.3L84 19.4L85.5 19.5L87 16.1L88.5 17.2L90 17.9L91.5 18.5L93 18.5L94.5 19.1L96 19.3L97.5 19.4L99 13.4L100.5 16.5L102 17.7L103.5 17.4L105 18.2L106.5 18.7L108 19.1L109.5 19.4L111 19.5L112.5 15.6L114 16.5L115.5 17.9L117 17.9L118.5 18.4L120 19.1L121.5 19.1L123 19.4L124.5 19.4L126 19.8L127.5 19.8L129 19.8L130.5 19.8L132 19.8L133.5 19.8L135 19.8L136.5 19.8L138 19.8L139.5 19.8L141 19.8L142.5 19.8L144 19.8L145.5 19.8L147 19.8L148.5 19.8L150 19.8L151.5 19.8L153 19.8L154.5 19.8L156 19.8L157.5 19.8L159 19.8L160.5 19.8L162 19.8L163.5 19.8L165 19.8L166.5 19.8L168 19.8L169.5 19.8L171 19.8L172.5 19.8L174 19.8L175.5 19.8L177 19.8L178.5 19.8L180 16L181.5 16.7L183 17.9L184.5 18.3L186 18.8L187.5 19.3L189 19.4L190.5 19.5L192 15.3L193.5 16.6L195 17.3L196.5 17.9L198 18.6L199.5 19L201 19.2L202.5 19.2L204 19.4L205.5 15.2L207 16.3L208.5 17.9L210 18.5L211.5 18.9L213 19.1L214.5 19.4L216 19.4L217.5 19.4L219 16.7L220.5 16.8L222 17.4L223.5 18.2L225 19L226.5 19L228 19.3L229.5 19.5L231 16.2L232.5 16.3L234 16.8L235.5 18.4L237 18.8L238.5 19L240 19.3L241.5 19.3L243 19.4L244.5 15.6L246 19.8L247.5 19.8L249 19.8L250.5 19.8L252 19.8L253.5 19.8L255 19.8L256.5 19.8L258 19.8L259.5 19.8L261 19.8L262.5 19.8L264 19.8L265.5 19.8L267 19.8L268.5 19.8L270 19.8L271.5 19.8L273 19.8L274.5 19.8L276 19.8L277.5 19.8L279 19.8L280.5 19.8L282 19.8L283.5 19.8L285 19.8L286.5 19.8L288 19.8L289.5 19.8L291 19.8L292.5 19.8L294 19.8L295.5 19.8L297 19.8L298.5 16.8L300 17.7L301.5 18.1L303 18.2L304.5 18.6L306 19.1L307.5 19.4L309 19.5L310.5 15.1L312 17L313.5 17.8L315 18.1L316.5 18.3L318 19L319.5 19L321 19.2L322.5 19.5L324 16L325.5 17.2L327 17.4L328.5 17.9L330 18.4L331.5 19.1L333 19.2L334.5 19.5L336 19.5L337.5 16.3L339 17.5L340.5 18.2L342 18L343.5 18.9L345 19.1L346.5 19.3L348 19.4L349.5 14.7L351 16.3L352.5 17.3L354 18.4L355.5 18.4L357 18.8L358.5 19.1L360 19.4L361.5 19.5L363 14.8L364.5 19.8L366 19.8L367.5 19.8L369 19.8L370.5 19.8L372 19.8L373.5 19.8L375 19.8L376.5 19.8L378 19.8L379.5 19.8L381 19.8L382.5 19.8L384 19.8L385.5 19.8L387 19.8L388.5 19.8L390 19.8L391.5 19.8L393 19.8L394.5 19.8L396 19.8L397.5 19.8L399 19.8L400.5 19.8L402 19.8L403.5 19.8L405 19.8L406.5 19.8L408 19.8L409.5 19.8L411 19.8L412.5 19.8L414 19.8L415.5 19.8L417 15.4L418.5 17.6L420 17.9L421.5 18.6L423 18.6L424.5 19.1L426 19.3L427.5 19.5L429 14.9L430.5 15.8L432 17.1L433.5 18.2L435 18.6L436.5 18.8L438 19.3L439.5 19.2L441 19.5L442.5 15.1L444 17.2L445.5 17L447 18L448.5 18.8L450 19L451.5 19.1L453 19.3L454.5 19.5L456 15.5L457.5 16.6L459 17.3L460.5 18.3L462 18.7L463.5 18.9L465 19.3L466.5 19.5L468 14.6L469.5 16.5L471 17L472.5 17.7L474 18.2L474 22.7L472.5 23.1L471 23.9L469.5 24.3L468 26.1L466.5 21.5L465 21.7L463.5 22L462 22.2L460.5 22.6L459 23.5L457.5 24.2L456 25.2L454.5 21.5L453 21.6L451.5 21.8L450 22L448.5 22.1L447 22.9L445.5 23.8L444 23.7L442.5 25.7L441 21.4L439.5 21.7L438 21.7L436.5 22.1L435 22.3L433.5 22.7L432 23.7L430.5 24.9L429 25.8L427.5 21.5L426 21.6L424.5 21.8L423 22.3L421.5 22.3L420 22.9L418.5 23.3L417 25.4L415.5 21.2L414 21.2L412.5 21.2L411 21.2L409.5 21.2L408 21.2L406.5 21.2L405 21.2L403.5 21.2L402 21.2L400.5 21.2L399 21.2L397.5 21.2L396 21.2L394.5 21.2L393 21.2L391.5 21.2L390 21.2L388.5 21.2L387 21.2L385.5 21.2L384 21.2L382.5 21.2L381 21.2L379.5 21.2L378 21.2L376.5 21.2L375 21.2L373.5 21.2L372 21.2L370.5 21.2L369 21.2L367.5 21.2L366 21.2L364.5 21.2L363 25.9L361.5 21.5L360 21.6L358.5 21.9L357 22.1L355.5 22.5L354 22.5L352.5 23.5L351 24.5L349.5 26L348 21.5L346.5 21.7L345 21.9L343.5 22L342 22.9L340.5 22.7L339 23.3L337.5 24.5L336 21.4L334.5 21.5L333 21.7L331.5 21.8L330 22.5L328.5 22.9L327 23.5L325.5 23.7L324 24.7L322.5 21.5L321 21.7L319.5 21.9L318 21.9L316.5 22.6L315 22.8L313.5 23.1L312 23.8L310.5 25.6L309 21.5L307.5 21.6L306 21.9L304.5 22.3L303 22.6L301.5 22.8L300 23.2L298.5 24L297 21.2L295.5 21.2L294 21.2L292.5 21.2L291 21.2L289.5 21.2L288 21.2L286.5 21.2L285 21.2L283.5 21.2L282 21.2L280.5 21.2L279 21.2L277.5 21.2L276 21.2L274.5 21.2L273 21.2L271.5 21.2L270 21.2L268.5 21.2L267 21.2L265.5 21.2L264 21.2L262.5 21.2L261 21.2L259.5 21.2L258 21.2L256.5 21.2L255 21.2L253.5 21.2L252 21.2L250.5 21.2L249 21.2L247.5 21.2L246 21.2L244.5 25.1L243 21.5L241.5 21.6L240 21.6L238.5 22L237 22.1L235.5 22.5L234 24L232.5 24.4L231 24.6L229.5 21.5L228 21.6L226.5 21.9L225 22L223.5 22.7L222 23.4L220.5 24L219 24.1L217.5 21.5L216 21.6L214.5 21.6L213 21.8L211.5 22L210 22.4L208.5 23L207 24.5L205.5 25.5L204 21.5L202.5 21.7L201 21.8L199.5 21.9L198 22.3L196.5 23L195 23.5L193.5 24.2L192 25.5L190.5 21.5L189 21.6L187.5 21.7L186 22.1L184.5 22.6L183 23L181.5 24.1L180 24.7L178.5 21.2L177 21.2L175.5 21.2L174 21.2L172.5 21.2L171 21.2L169.5 21.2L168 21.2L166.5 21.2L165 21.2L163.5 21.2L162 21.2L160.5 21.2L159 21.2L157.5 21.2L156 21.2L154.5 21.2L153 21.2L151.5 21.2L150 21.2L148.5 21.2L147 21.2L145.5 21.2L144 21.2L142.5 21.2L141 21.2L139.5 21.2L138 21.2L136.5 21.2L135 21.2L133.5 21.2L132 21.2L130.5 21.2L129 21.2L127.5 21.2L126 21.2L124.5 21.5L123 21.6L121.5 21.9L120 21.8L118.5 22.5L117 23L115.5 22.9L114 24.3L112.5 25.2L111 21.4L109.5 21.6L108 21.8L106.5 22.2L105 22.7L103.5 23.4L102 23.1L100.5 24.3L99 27.2L97.5 21.6L96 21.7L94.5 21.9L93 22.4L91.5 22.4L90 23L88.5 23.6L87 24.7L85.5 21.5L84 21.6L82.5 21.6L81 22.1L79.5 22.5L78 23.1L76.5 23.2L75 25.1L73.5 26.2L72 21.5L70.5 21.7L69 21.7L67.5 22L66 22.3L64.5 22.5L63 23.9L61.5 24.3L60 26.5L58.5 21.2L57 21.2L55.5 21.2L54 21.2L52.5 21.2L51 21.2L49.5 21.2L48 21.2L46.5 21.2L45 21.2L43.5 21.2L42 21.2L40.5 21.2L39 21.2L37.5 21.2L36 21.2L34.5 21.2L33 21.2L31.5 21.2L30 21.2L28.5 21.2L27 21.2L25.5 21.2L24 21.2L22.5 21.2L21 21.2L19.5 21.2L18 21.2L16.5 21.2L15 21.2L13.5 21.2L12 21.2L10.5 21.2L9 21.2L7.5 21.2L6 21.5L4.5 21.6L3 21.7L1.5 22L0 22.2z"/></pattern><pattern id="wc" width="60" height="42" patternUnits="userSpaceOnUse"><path fill="#0a2324" d="M0 11.7L1.5 11.5L3 11.4L4.5 12.6L6 12L7.5 12.2L9 12.4L10.5 13.4L12 13.6L13.5 13.2L15 12.7L16.5 13.6L18 13.3L19.5 13.6L21 12.9L22.5 12.9L24 13.7L25.5 12.9L27 14.4L28.5 13.3L30 13.3L31.5 14.4L33 13.6L34.5 13.9L36 13.4L37.5 14.5L39 14.1L40.5 13.6L42 14L43.5 14.5L45 14.9L46.5 13.6L48 14.3L49.5 13.6L51 14.9L52.5 13.9L54 13.9L55.5 13.8L57 15.2L58.5 14.7L60 12.4L60 25.2L58.5 23.1L57 22.6L55.5 23.9L54 23.8L52.5 23.8L51 22.9L49.5 24.1L48 23.4L46.5 24.1L45 22.9L43.5 23.3L42 23.8L40.5 24.1L39 23.7L37.5 23.3L36 24.4L34.5 23.8L33 24.1L31.5 23.3L30 24.4L28.5 24.4L27 23.4L25.5 24.8L24 24L22.5 24.8L21 24.8L19.5 24.1L18 24.4L16.5 24.2L15 25L13.5 24.5L12 24.1L10.5 24.4L9 25.3L7.5 25.4L6 25.7L4.5 25.1L3 26.2L1.5 26.2L0 25.9z"/></pattern><pattern id="wp" width="60" height="42" patternUnits="userSpaceOnUse"><path fill="#0a2324" d="M0 18.7L1.5 18.6L3 11.6L4.5 12.4L6 12L7.5 12.4L9 12.8L10.5 13.2L12 13.9L13.5 14.2L15 13.7L16.5 14.6L18 14.3L19.5 14.4L21 14.6L22.5 14.8L24 15.9L25.5 16.1L27 15.7L28.5 16.1L30 16.7L31.5 16.4L33 16.3L34.5 16.5L36 17.2L37.5 17.3L39 17.7L40.5 17.1L42 17.7L43.5 17.5L45 17.7L46.5 17.8L48 17.9L49.5 17.9L51 18.1L52.5 18.3L54 18.5L55.5 18.4L57 18.3L58.5 18.7L60 18.5L60 22.4L58.5 22.2L57 22.6L55.5 22.5L54 22.4L52.5 22.6L51 22.8L49.5 23L48 22.9L46.5 23.1L45 23.1L43.5 23.4L42 23.1L40.5 23.8L39 23.2L37.5 23.5L36 23.6L34.5 24.3L33 24.5L31.5 24.4L30 24.1L28.5 24.7L27 25L25.5 24.7L24 24.8L22.5 26L21 26.1L19.5 26.3L18 26.3L16.5 26.1L15 26.9L13.5 26.5L12 26.8L10.5 27.4L9 27.8L7.5 28.2L6 28.5L4.5 28.2L3 28.9L1.5 22.3L0 22.2z"/></pattern><pattern id="hs" width="3.7" height="42" patternUnits="userSpaceOnUse"><path stroke="rgba(0,0,0,0.14)" stroke-width="1" d="M0.5 0V42"/></pattern><pattern id="sm" width="118.8" height="42" patternUnits="userSpaceOnUse"><rect x="0" y="0" width="118.8" height="13.5" fill="#2a7bb3" opacity="0.45"/><rect x="0" y="27.5" width="118.8" height="14" fill="#2c80b8" opacity="0.3"/><path stroke="#2574ad" stroke-width="0.6" d="M0 0v40M2 0v40M4 0v40M6 0v40M8 0v40M10 0v40M12 0v40M14 0v40M16 0v40M18 0v40M20 0v40M22 0v40M24 0v40M26 0v40M28 0v40M30 0v40M32 0v40M34 0v40M36 0v40M38 0v40M40 0v40M42 0v40M44 0v40M46 0v40M48 0v40M50 0v40M52 0v40M54 0v40M56 0v40M58 0v40M60 0v40M62 0v40M64 0v40M66 0v40M68 0v40M70 0v40M72 0v40M74 0v40M76 0v40M78 0v40M80 0v40M82 0v40M84 0v40M86 0v40M88 0v40M90 0v40M92 0v40M94 0v40M96 0v40M98 0v40M100 0v40M102 0v40M104 0v40M106 0v40M108 0v40M110 0v40M112 0v40M114 0v40M116 0v40M118 0v40"/><path stroke="#1f68a2" stroke-width="1.6" d="M30.1 1.5v13.5M42.3 1.5v13.5M81.5 1.5v13.5M99.3 1.5v13.5M76.9 1.5v13.5M3.4 14.5v13M54.9 14.5v13M111.3 14.5v13M76.6 14.5v13M106.3 14.5v13M43.9 28.5v11.5M102.5 28.5v11.5M44.9 28.5v11.5"/><path stroke="#3e96cc" stroke-width="1.2" d="M0 0V40M29.7 0V40M59.4 0V40M89.1 0V40"/></pattern><pattern id="t1" width="14.8" height="42" patternUnits="userSpaceOnUse"><rect x="0.6" y="0.6" width="13.7" height="40.2" fill="#e5bd44" fill-opacity="0.76" stroke="#e6b638" stroke-width="1.2"/><g transform="translate(1.5 0)" fill="#5e4a17"><path d="M0 7L1 8.2L2 8.9L3 9.4L4 9.8L5 10L6 10.2L7 10.3L8 10.4L9 10.4L10 10.4L11 10.5L12 10.5L12 11.5L11 11.5L10 11.5L9 11.6L8 11.6L7 11.7L6 11.8L5 11.9L4 12.1L3 12.5L2 13L1 13.7L0 14.8z"/><path d="M0 27L1 28.2L2 28.9L3 29.4L4 29.8L5 30L6 30.2L7 30.3L8 30.4L9 30.4L10 30.4L11 30.5L12 30.5L12 31.5L11 31.5L10 31.5L9 31.6L8 31.6L7 31.7L6 31.8L5 31.9L4 32.1L3 32.5L2 33L1 33.7L0 34.8z"/></g></pattern><pattern id="t2" width="14.8" height="42" patternUnits="userSpaceOnUse"><rect x="0.6" y="0.6" width="13.6" height="40.2" fill="#e5bd44" fill-opacity="0.76" stroke="#e6b638" stroke-width="1.2"/><g transform="translate(1.5 0)" fill="#5e4a17"><path d="M0 7L1 8.2L2 8.9L3 9.4L4 9.8L5 10L6 10.2L7 10.3L8 10.4L9 10.4L10 10.4L11 10.5L12 10.5L12 11.5L11 11.5L10 11.5L9 11.6L8 11.6L7 11.7L6 11.8L5 11.9L4 12.1L3 12.5L2 13L1 13.7L0 14.8z"/><path d="M0 27L1 28.2L2 28.9L3 29.4L4 29.8L5 30L6 30.2L7 30.3L8 30.4L9 30.4L10 30.4L11 30.5L12 30.5L12 31.5L11 31.5L10 31.5L9 31.6L8 31.6L7 31.7L6 31.8L5 31.9L4 32.1L3 32.5L2 33L1 33.7L0 34.8z"/></g></pattern><pattern id="cr" width="2000" height="42" patternUnits="userSpaceOnUse"><g fill="#5e4a17"><path d="M0 5.9L2 6.3L4 6.7L6 7.1L8 7.4L10 7.7L12 7.9L14 8.2L16 8.4L18 8.6L20 8.7L22 8.9L24 9L26 9.2L28 9.3L30 9.4L32 9.5L34 9.6L36 9.7L38 9.7L40 9.8L42 9.8L44 9.9L46 9.9L48 10L50 10L52 10.1L54 10.1L56 10.1L58 10.2L60 10.2L62 10.2L64 10.2L66 10.2L68 10.2L70 10.3L70 11.7L68 11.7L66 11.7L64 11.7L62 11.8L60 11.8L58 11.8L56 11.8L54 11.9L52 11.9L50 11.9L48 12L46 12L44 12L42 12.1L40 12.1L38 12.2L36 12.3L34 12.4L32 12.4L30 12.5L28 12.6L26 12.7L24 12.9L22 13L20 13.1L18 13.3L16 13.5L14 13.7L12 13.9L10 14.2L8 14.4L6 14.7L4 15.1L2 15.4L0 15.8z"/><path d="M0 27.2L2 27.2L4 27.2L6 27.2L8 27.9L10 28.5L12 28.9L14 30L16 30.1L18 30.2L20 30.2L22 30.3L24 30.3L26 30.1L28 30.2L30 30.2L32 30.3L34 30.3L36 30.3L38 30.3L40 30.4L42 30.4L44 30.4L46 30.4L48 30.4L50 30.4L52 30.4L54 30.4L56 30.4L58 30.4L60 30.4L62 30.4L64 30.4L66 30.4L68 30.4L70 30.4L70 31.6L68 31.6L66 31.6L64 31.6L62 31.6L60 31.6L58 31.6L56 31.6L54 31.6L52 31.6L50 31.6L48 31.6L46 31.6L44 31.6L42 31.6L40 31.6L38 31.6L36 31.6L34 31.7L32 31.7L30 31.7L28 31.8L26 31.8L24 31.7L22 31.7L20 31.7L18 31.8L16 31.8L14 31.9L12 33L10 33.4L8 33.9L6 34.6L4 34.6L2 34.6L0 34.6z"/><rect x="0" y="10.4" width="2000" height="1.2"/><rect x="0" y="30.4" width="2000" height="1.2"/></g><rect x="12" y="24" width="10" height="15" fill="#d4b55c"/><path fill="#3b2c08" d="M13 37l8-7v7z"/></pattern></defs><path fill="#1d1e21" d="M536.8 46h2175.7v31.5h-2175.7z"/><path fill="#5e6063" d="M536.8 77.5h2175.7v2h-2175.7z"/><path fill="#735ee6" d="M1877.5 50h237.3v25.4h-237.3z"/><path fill="#252628" d="M536.8 79.5h2175.7v1546h-2175.7z"/><path fill="#454649" d="M1877.5 79.5h237.3v1546h-237.3z"/><path fill="#fff" d="M1877.5 50h11l-11 11zM2114.8 50h-11l11 11z"/><text x="577" y="71.2" font-size="11.5" fill="#f0f0f0" font-weight="bold">3</text><text x="636.3" y="71.2" font-size="11.5" fill="#f0f0f0" font-weight="bold">5</text><text x="695.6" y="71.2" font-size="11.5" fill="#f0f0f0" font-weight="bold">7</text><text x="755" y="71.2" font-size="11.5" fill="#f0f0f0" font-weight="bold">9</text><text x="814.3" y="71.2" font-size="11.5" fill="#f0f0f0" font-weight="bold">11</text><text x="873.6" y="71.2" font-size="11.5" fill="#f0f0f0" font-weight="bold">13</text><text x="932.9" y="71.2" font-size="11.5" fill="#f0f0f0" font-weight="bold">15</text><text x="992.2" y="71.2" font-size="11.5" fill="#f0f0f0" font-weight="bold">17</text><text x="1051.6" y="71.2" font-size="11.5" fill="#f0f0f0" font-weight="bold">19</text><text x="1110.9" y="71.2" font-size="11.5" fill="#f0f0f0" font-weight="bold">21</text><text x="1170.2" y="71.2" font-size="11.5" fill="#f0f0f0" font-weight="bold">23</text><text x="1229.5" y="71.2" font-size="11.5" fill="#f0f0f0" font-weight="bold">25</text><text x="1288.8" y="71.2" font-size="11.5" fill="#f0f0f0" font-weight="bold">27</text><text x="1348.2" y="71.2" font-size="11.5" fill="#f0f0f0" font-weight="bold">29</text><text x="1407.5" y="71.2" font-size="11.5" fill="#f0f0f0" font-weight="bold">31</text><text x="1466.8" y="71.2" font-size="11.5" fill="#f0f0f0" font-weight="bold">33</text><text x="1526.1" y="71.2" font-size="11.5" fill="#f0f0f0" font-weight="bold">35</text><text x="1585.4" y="71.2" font-size="11.5" fill="#f0f0f0" font-weight="bold">37</text><text x="1644.8" y="71.2" font-size="11.5" fill="#f0f0f0" font-weight="bold">39</text><text x="1704.1" y="71.2" font-size="11.5" fill="#f0f0f0" font-weight="bold">41</text><text x="1763.4" y="71.2" font-size="11.5" fill="#f0f0f0" font-weight="bold">43</text><text x="1822.7" y="71.2" font-size="11.5" fill="#f0f0f0" font-weight="bold">45</text><text x="1882" y="71.2" font-size="11.5" fill="#f0f0f0" font-weight="bold">47</text><text x="1941.4" y="71.2" font-size="11.5" fill="#f0f0f0" font-weight="bold">49</text><text x="2000.7" y="71.2" font-size="11.5" fill="#f0f0f0" font-weight="bold">51</text><text x="2060" y="71.2" font-size="11.5" fill="#f0f0f0" font-weight="bold">53</text><text x="2119.3" y="71.2" font-size="11.5" fill="#f0f0f0" font-weight="bold">55</text><text x="2178.6" y="71.2" font-size="11.5" fill="#f0f0f0" font-weight="bold">57</text><text x="2238" y="71.2" font-size="11.5" fill="#f0f0f0" font-weight="bold">59</text><text x="2297.3" y="71.2" font-size="11.5" fill="#f0f0f0" font-weight="bold">61</text><text x="2356.6" y="71.2" font-size="11.5" fill="#f0f0f0" font-weight="bold">63</text><text x="2415.9" y="71.2" font-size="11.5" fill="#f0f0f0" font-weight="bold">65</text><text x="2475.2" y="71.2" font-size="11.5" fill="#f0f0f0" font-weight="bold">67</text><text x="2534.6" y="71.2" font-size="11.5" fill="#f0f0f0" font-weight="bold">69</text><text x="2593.9" y="71.2" font-size="11.5" fill="#f0f0f0" font-weight="bold">71</text><text x="2653.2" y="71.2" font-size="11.5" fill="#f0f0f0" font-weight="bold">73</text><text x="2712.5" y="71.2" font-size="11.5" fill="#f0f0f0" font-weight="bold">75</text><path fill="#8a8a8a" d="M542.3 74.5h1.2v1.5h-1.2zM572 74.5h1.2v1.5h-1.2zM601.7 74.5h1.2v1.5h-1.2zM631.3 74.5h1.2v1.5h-1.2zM661 74.5h1.2v1.5h-1.2zM690.6 74.5h1.2v1.5h-1.2zM720.3 74.5h1.2v1.5h-1.2zM750 74.5h1.2v1.5h-1.2zM779.6 74.5h1.2v1.5h-1.2zM809.3 74.5h1.2v1.5h-1.2zM838.9 74.5h1.2v1.5h-1.2zM868.6 74.5h1.2v1.5h-1.2zM898.3 74.5h1.2v1.5h-1.2zM927.9 74.5h1.2v1.5h-1.2zM957.6 74.5h1.2v1.5h-1.2zM987.2 74.5h1.2v1.5h-1.2zM1016.9 74.5h1.2v1.5h-1.2zM1046.6 74.5h1.2v1.5h-1.2zM1076.2 74.5h1.2v1.5h-1.2zM1105.9 74.5h1.2v1.5h-1.2zM1135.5 74.5h1.2v1.5h-1.2zM1165.2 74.5h1.2v1.5h-1.2zM1194.9 74.5h1.2v1.5h-1.2zM1224.5 74.5h1.2v1.5h-1.2zM1254.2 74.5h1.2v1.5h-1.2zM1283.8 74.5h1.2v1.5h-1.2zM1313.5 74.5h1.2v1.5h-1.2zM1343.2 74.5h1.2v1.5h-1.2zM1372.8 74.5h1.2v1.5h-1.2zM1402.5 74.5h1.2v1.5h-1.2zM1432.1 74.5h1.2v1.5h-1.2zM1461.8 74.5h1.2v1.5h-1.2zM1491.5 74.5h1.2v1.5h-1.2zM1521.1 74.5h1.2v1.5h-1.2zM1550.8 74.5h1.2v1.5h-1.2zM1580.4 74.5h1.2v1.5h-1.2zM1610.1 74.5h1.2v1.5h-1.2zM1639.8 74.5h1.2v1.5h-1.2zM1669.4 74.5h1.2v1.5h-1.2zM1699.1 74.5h1.2v1.5h-1.2zM1728.7 74.5h1.2v1.5h-1.2zM1758.4 74.5h1.2v1.5h-1.2zM1788.1 74.5h1.2v1.5h-1.2zM1817.7 74.5h1.2v1.5h-1.2zM1847.4 74.5h1.2v1.5h-1.2zM1877 74.5h1.2v1.5h-1.2zM1906.7 74.5h1.2v1.5h-1.2zM1936.4 74.5h1.2v1.5h-1.2zM1966 74.5h1.2v1.5h-1.2zM1995.7 74.5h1.2v1.5h-1.2zM2025.3 74.5h1.2v1.5h-1.2zM2055 74.5h1.2v1.5h-1.2zM2084.7 74.5h1.2v1.5h-1.2zM2114.3 74.5h1.2v1.5h-1.2zM2144 74.5h1.2v1.5h-1.2zM2173.6 74.5h1.2v1.5h-1.2zM2203.3 74.5h1.2v1.5h-1.2zM2233 74.5h1.2v1.5h-1.2zM2262.6 74.5h1.2v1.5h-1.2zM2292.3 74.5h1.2v1.5h-1.2zM2321.9 74.5h1.2v1.5h-1.2zM2351.6 74.5h1.2v1.5h-1.2zM2381.3 74.5h1.2v1.5h-1.2zM2410.9 74.5h1.2v1.5h-1.2zM2440.6 74.5h1.2v1.5h-1.2zM2470.2 74.5h1.2v1.5h-1.2zM2499.9 74.5h1.2v1.5h-1.2zM2529.6 74.5h1.2v1.5h-1.2zM2559.2 74.5h1.2v1.5h-1.2zM2588.9 74.5h1.2v1.5h-1.2zM2618.5 74.5h1.2v1.5h-1.2zM2648.2 74.5h1.2v1.5h-1.2zM2677.9 74.5h1.2v1.5h-1.2zM2707.5 74.5h1.2v1.5h-1.2z"/><path fill="#d0d0d0" d="M571.7 50h1.8v25h-1.8zM631 50h1.8v25h-1.8zM690.3 50h1.8v25h-1.8zM749.7 50h1.8v25h-1.8zM809 50h1.8v25h-1.8zM868.3 50h1.8v25h-1.8zM927.6 50h1.8v25h-1.8zM986.9 50h1.8v25h-1.8zM1046.3 50h1.8v25h-1.8zM1105.6 50h1.8v25h-1.8zM1164.9 50h1.8v25h-1.8zM1224.2 50h1.8v25h-1.8zM1283.5 50h1.8v25h-1.8zM1342.9 50h1.8v25h-1.8zM1402.2 50h1.8v25h-1.8zM1461.5 50h1.8v25h-1.8zM1520.8 50h1.8v25h-1.8zM1580.1 50h1.8v25h-1.8zM1639.5 50h1.8v25h-1.8zM1698.8 50h1.8v25h-1.8zM1758.1 50h1.8v25h-1.8zM1817.4 50h1.8v25h-1.8zM2173.3 50h1.8v25h-1.8zM2232.7 50h1.8v25h-1.8zM2292 50h1.8v25h-1.8zM2351.3 50h1.8v25h-1.8zM2410.6 50h1.8v25h-1.8zM2469.9 50h1.8v25h-1.8zM2529.3 50h1.8v25h-1.8zM2588.6 50h1.8v25h-1.8zM2647.9 50h1.8v25h-1.8zM2707.2 50h1.8v25h-1.8z"/><path fill="#e8e6ff" d="M1876.7 50h1.8v25h-1.8zM1936.1 50h1.8v25h-1.8zM1995.4 50h1.8v25h-1.8zM2054.7 50h1.8v25h-1.8zM2114 50h1.8v25h-1.8z"/><path fill="#3b3d40" d="M536.8 85.2h2175.7v1.6h-2175.7zM536.8 131.1h2175.7v1.6h-2175.7zM536.8 177h2175.7v1.6h-2175.7zM536.8 222.9h2175.7v1.6h-2175.7zM536.8 268.7h2175.7v1.6h-2175.7zM536.8 314.6h2175.7v1.6h-2175.7zM536.8 360.5h2175.7v1.6h-2175.7zM536.8 406.4h2175.7v1.6h-2175.7zM536.8 452.3h2175.7v1.6h-2175.7zM536.8 498.1h2175.7v1.6h-2175.7zM536.8 544h2175.7v1.6h-2175.7zM536.8 589.9h2175.7v1.6h-2175.7zM536.8 635.8h2175.7v1.6h-2175.7zM536.8 681.7h2175.7v1.6h-2175.7zM536.8 727.5h2175.7v1.6h-2175.7zM536.8 773.4h2175.7v1.6h-2175.7zM536.8 819.3h2175.7v1.6h-2175.7zM536.8 865.2h2175.7v1.6h-2175.7zM536.8 911.1h2175.7v1.6h-2175.7zM536.8 956.9h2175.7v1.6h-2175.7zM536.8 1002.8h2175.7v1.6h-2175.7zM536.8 1048.7h2175.7v1.6h-2175.7zM536.8 1094.6h2175.7v1.6h-2175.7zM536.8 1140.5h2175.7v1.6h-2175.7zM536.8 1186.3h2175.7v1.6h-2175.7zM536.8 1232.2h2175.7v1.6h-2175.7zM536.8 1278.1h2175.7v1.6h-2175.7zM536.8 1324h2175.7v1.6h-2175.7zM536.8 1369.9h2175.7v1.6h-2175.7zM536.8 1415.7h2175.7v1.6h-2175.7zM536.8 1461.6h2175.7v1.6h-2175.7zM536.8 1507.5h2175.7v1.6h-2175.7zM536.8 1553.4h2175.7v1.6h-2175.7zM536.8 1599.3h2175.7v1.6h-2175.7zM536.8 1645.1h2175.7v1.6h-2175.7z"/><path fill="#636568" d="M542.1 79.5h1.4v1546h-1.4zM571.8 79.5h1.4v1546h-1.4zM601.5 79.5h1.4v1546h-1.4zM631.1 79.5h1.4v1546h-1.4zM660.8 79.5h1.4v1546h-1.4zM690.4 79.5h1.4v1546h-1.4zM720.1 79.5h1.4v1546h-1.4zM749.8 79.5h1.4v1546h-1.4zM779.4 79.5h1.4v1546h-1.4zM809.1 79.5h1.4v1546h-1.4zM838.7 79.5h1.4v1546h-1.4zM868.4 79.5h1.4v1546h-1.4zM898.1 79.5h1.4v1546h-1.4zM927.7 79.5h1.4v1546h-1.4zM957.4 79.5h1.4v1546h-1.4zM987 79.5h1.4v1546h-1.4zM1016.7 79.5h1.4v1546h-1.4zM1046.4 79.5h1.4v1546h-1.4zM1076 79.5h1.4v1546h-1.4zM1105.7 79.5h1.4v1546h-1.4zM1135.3 79.5h1.4v1546h-1.4zM1165 79.5h1.4v1546h-1.4zM1194.7 79.5h1.4v1546h-1.4zM1224.3 79.5h1.4v1546h-1.4zM1254 79.5h1.4v1546h-1.4zM1283.6 79.5h1.4v1546h-1.4zM1313.3 79.5h1.4v1546h-1.4zM1343 79.5h1.4v1546h-1.4zM1372.6 79.5h1.4v1546h-1.4zM1402.3 79.5h1.4v1546h-1.4zM1431.9 79.5h1.4v1546h-1.4zM1461.6 79.5h1.4v1546h-1.4zM1491.3 79.5h1.4v1546h-1.4zM1520.9 79.5h1.4v1546h-1.4zM1550.6 79.5h1.4v1546h-1.4zM1580.2 79.5h1.4v1546h-1.4zM1609.9 79.5h1.4v1546h-1.4zM1639.6 79.5h1.4v1546h-1.4zM1669.2 79.5h1.4v1546h-1.4zM1698.9 79.5h1.4v1546h-1.4zM1728.5 79.5h1.4v1546h-1.4zM1758.2 79.5h1.4v1546h-1.4zM1787.9 79.5h1.4v1546h-1.4zM1817.5 79.5h1.4v1546h-1.4zM1847.2 79.5h1.4v1546h-1.4zM2143.8 79.5h1.4v1546h-1.4zM2173.4 79.5h1.4v1546h-1.4zM2203.1 79.5h1.4v1546h-1.4zM2232.8 79.5h1.4v1546h-1.4zM2262.4 79.5h1.4v1546h-1.4zM2292.1 79.5h1.4v1546h-1.4zM2321.7 79.5h1.4v1546h-1.4zM2351.4 79.5h1.4v1546h-1.4zM2381.1 79.5h1.4v1546h-1.4zM2410.7 79.5h1.4v1546h-1.4zM2440.4 79.5h1.4v1546h-1.4zM2470 79.5h1.4v1546h-1.4zM2499.7 79.5h1.4v1546h-1.4zM2529.4 79.5h1.4v1546h-1.4zM2559 79.5h1.4v1546h-1.4zM2588.7 79.5h1.4v1546h-1.4zM2618.3 79.5h1.4v1546h-1.4zM2648 79.5h1.4v1546h-1.4zM2677.7 79.5h1.4v1546h-1.4zM2707.3 79.5h1.4v1546h-1.4z"/><path fill="#737477" d="M1876.8 79.5h1.4v1546h-1.4zM1906.5 79.5h1.4v1546h-1.4zM1936.2 79.5h1.4v1546h-1.4zM1965.8 79.5h1.4v1546h-1.4zM1995.5 79.5h1.4v1546h-1.4zM2025.1 79.5h1.4v1546h-1.4zM2054.8 79.5h1.4v1546h-1.4zM2084.5 79.5h1.4v1546h-1.4zM2114.1 79.5h1.4v1546h-1.4z"/><path fill="#8d959c" d="M536.8 106.5h2175.7v1.6h-2175.7zM536.8 565.3h2175.7v1.6h-2175.7zM536.8 748.8h2175.7v1.6h-2175.7zM536.8 1528.8h2175.7v1.6h-2175.7z"/><path fill="#ecbd36" d="M573 80h2024.5v4.6h-2024.5z"/><path fill="#e5bd44" fill-opacity="0.76" d="M574.3 80h2021.9v3.3h-2021.9zM572.8 134.4h96.7v41.4h-96.7zM692 134.4h236.6v41.4h-236.6zM929.9 134.4h473.1v41.4h-473.1zM1403 134.4h237.5v41.4h-237.5zM1640.5 134.4h475v41.4h-475zM2115.5 134.4h237.5v41.4h-237.5zM2353 134.4h237v41.4h-237zM692 226.1h236.6v41.4h-236.6zM1641 226.1h236.7v41.4h-236.7zM1877.7 226.1h237.8v41.4h-237.8zM2115.5 226.1h237.5v41.4h-237.5zM2353 226.1h237v41.4h-237zM692 272h236.6v41.4h-236.6zM1641 272h236.7v41.4h-236.7zM1877.7 272h237.8v41.4h-237.8zM2115.5 272h237.5v41.4h-237.5zM2353 272h237v41.4h-237zM662.7 455.5h7.2v41.4h-7.2zM669.9 455.5h7.2v41.4h-7.2zM677.1 455.5h7.2v41.4h-7.2zM684.3 455.5h7.2v41.4h-7.2z"/><path fill="#e0b73c" fill-opacity="0.76" d="M572.8 180.3h96.7v41.4h-96.7zM692 180.3h236.6v41.4h-236.6zM1641 180.3h949v41.4h-949zM692 409.7h236.6v41.4h-236.6zM1641 409.7h949v41.4h-949z"/><path fill="#806216" fill-opacity="0.76" d="M574.3 181.8h93.7v13h-93.7zM693.5 181.8h233.6v13h-233.6zM1642.5 181.8h946v13h-946zM693.5 411.2h233.6v13h-233.6zM1642.5 411.2h946v13h-946z"/><path fill="#6387ff" fill-opacity="0.76" d="M691.3 501.4h236.4v41.4h-236.4zM929 501.4h474v41.4h-474zM1640.7 501.4h237.3v41.4h-237.3zM1878 501.4h237v41.4h-237zM2115 501.4h238v41.4h-238zM2353 501.4h237v41.4h-237zM1403 501.4h237.7v41.4h-237.7z"/><path fill="#1f4acc" fill-opacity="0.76" d="M692.8 516.9h233.4v24.4h-233.4zM930.5 516.9h471v24.4h-471zM1642.2 516.9h234.3v24.4h-234.3zM1879.5 516.9h234v24.4h-234zM2116.5 516.9h235v24.4h-235zM2354.5 516.9h234v24.4h-234zM1404.5 516.9h234.7v10.5h-234.7z"/><path fill="#6984dc" fill-opacity="0.76" d="M692.8 528.2h233.4v1.2h-233.4zM930.5 528.2h471v1.2h-471zM1642.2 528.2h234.3v1.2h-234.3zM1879.5 528.2h234v1.2h-234zM2116.5 528.2h235v1.2h-235zM2354.5 528.2h234v1.2h-234z"/><path fill="#5e7ef8" fill-opacity="0.76" d="M691.3 593.2h236.4v41.4h-236.4zM929 593.2h474v41.4h-474zM1403 593.2h237.7v41.4h-237.7zM1640.7 593.2h237.3v41.4h-237.3zM1878 593.2h237v41.4h-237zM2115 593.2h238v41.4h-238zM2353 593.2h237v41.4h-237zM691.3 639.1h236.4v41.4h-236.4zM929 639.1h474v41.4h-474zM1640.7 639.1h237.3v41.4h-237.3zM1878 639.1h237v41.4h-237zM2115 639.1h238v41.4h-238zM2353 639.1h237v41.4h-237z"/><path fill="#32cecf" fill-opacity="0.76" d="M573.3 684.9h94.1v41.4h-94.1zM690 684.9h236v41.4h-236zM926 684.9h473v41.4h-473zM1399 684.9h238.6v41.4h-238.6zM1637.6 684.9h473.4v41.4h-473.4zM2111 684.9h479v41.4h-479zM691 776.7h237v41.4h-237zM1640 776.7h475v41.4h-475zM2115 776.7h475v41.4h-475zM573 822.6h94v41.4h-94zM691 822.6h237v41.4h-237zM1640 822.6h475v41.4h-475zM2115 822.6h475v41.4h-475zM573 868.5h94v41.4h-94zM691 868.5h237v41.4h-237zM1640 868.5h475v41.4h-475zM2115 868.5h475v41.4h-475zM691 914.3h237v41.4h-237zM1404 914.3h162v41.4h-162zM1566.5 914.3h6.5v41.4h-6.5zM1573.5 914.3h6.5v41.4h-6.5zM1581 914.3h59v41.4h-59zM1640 914.3h475v41.4h-475zM2115 914.3h475v41.4h-475zM691 960.2h208v41.4h-208zM900 960.2h28v41.4h-28zM1523 960.2h117v41.4h-117zM1640 960.2h208v41.4h-208zM1848 960.2h30v41.4h-30zM1878 960.2h175v41.4h-175zM2053 960.2h62v41.4h-62zM2115 960.2h207.5v41.4h-207.5zM2323 960.2h29v41.4h-29zM2353 960.2h173v41.4h-173zM2526 960.2h64v41.4h-64zM690.4 1006.1h234.2v41.4h-234.2zM1637.6 1006.1h473.4v41.4h-473.4zM2111 1006.1h475v41.4h-475zM866 1052h62.4v41.4h-62.4zM1816 1052h62v41.4h-62zM2053 1052h62v41.4h-62zM2290 1052h62v41.4h-62zM2527 1052h63v41.4h-63zM866 1097.9h62.4v41.4h-62.4zM1816 1097.9h62v41.4h-62zM2053 1097.9h62v41.4h-62zM2290 1097.9h62v41.4h-62zM2527 1097.9h63v41.4h-63zM926.5 1143.7h478.7v41.4h-478.7zM926.5 1189.6h478.7v41.4h-478.7zM965.9 1235.5h7.6v41.4h-7.6zM974 1235.5h13.9v41.4h-13.9zM994 1281.4h16.3v41.4h-16.3zM1166.8 1327.3h117.2v41.4h-117.2zM1285 1327.3h117.5v41.4h-117.5zM1399.4 1373.1h179.1v41.4h-179.1zM1432.6 1419h96.1v41.4h-96.1z"/><path fill="#00aeb2" fill-opacity="0.76" d="M574.8 688.9h91.1v7h-91.1zM691.5 688.9h233v14h-233zM927.5 708.9h470v5h-470zM1400.5 694.9h235.6v4h-235.6zM1639.1 688.9h470.4v14h-470.4zM2112.5 688.9h476v14h-476z"/><path fill="#40d0d0" fill-opacity="0.76" d="M1523 686.3h56v39h-56z"/><path fill="#42affb" fill-opacity="0.76" d="M691.6 1464.9h236.4v41.4h-236.4zM929 1464.9h474v41.4h-474zM1403 1464.9h178.8v41.4h-178.8zM1630.4 1464.9h475v41.4h-475zM2105.4 1464.9h484.6v41.4h-484.6z"/><path fill="#0871c8" fill-opacity="0.76" d="M693.1 1466.9h233.4v11h-233.4zM930.5 1482.9h471v2.5h-471zM1404.5 1485.9h175.8v2h-175.8zM1631.9 1469.4h472v9.5h-472zM1631.9 1494.4h472v2.2h-472zM2106.9 1466.4h481.6v12.5h-481.6zM2106.9 1494.9h481.6v9.9h-481.6z"/><path fill="#31a4f3" fill-opacity="0.76" d="M691.6 1556.7h117.8v41.4h-117.8zM810 1556.7h118v41.4h-118zM2115 1556.7h119v41.4h-119zM2234 1556.7h119v41.4h-119zM2353 1556.7h118.5v41.4h-118.5zM2472 1556.7h118v41.4h-118zM691.6 1602.5h117.8v23.2h-117.8zM810 1602.5h118v23.2h-118zM1641 1602.5h118v23.2h-118zM1759 1602.5h119v23.2h-119zM1878 1602.5h118v23.2h-118zM1996 1602.5h119v23.2h-119zM2115 1602.5h119v23.2h-119zM2234 1602.5h119v23.2h-119zM2353 1602.5h118.5v23.2h-118.5zM2472 1602.5h118v23.2h-118z"/><path fill="#4ab4f4" d="M691.6 1602.5h1.5v23.2h-1.5zM807.9 1602.5h1.5v23.2h-1.5zM691.6 1602.5h117.8v1.5h-117.8zM810 1602.5h1.5v23.2h-1.5zM926.5 1602.5h1.5v23.2h-1.5zM810 1602.5h118v1.5h-118zM1641 1602.5h1.5v23.2h-1.5zM1757.5 1602.5h1.5v23.2h-1.5zM1641 1602.5h118v1.5h-118zM1759 1602.5h1.5v23.2h-1.5zM1876.5 1602.5h1.5v23.2h-1.5zM1759 1602.5h119v1.5h-119zM1878 1602.5h1.5v23.2h-1.5zM1994.5 1602.5h1.5v23.2h-1.5zM1878 1602.5h118v1.5h-118zM1996 1602.5h1.5v23.2h-1.5zM2113.5 1602.5h1.5v23.2h-1.5zM1996 1602.5h119v1.5h-119zM2115 1602.5h1.5v23.2h-1.5zM2232.5 1602.5h1.5v23.2h-1.5zM2115 1602.5h119v1.5h-119zM2234 1602.5h1.5v23.2h-1.5zM2351.5 1602.5h1.5v23.2h-1.5zM2234 1602.5h119v1.5h-119zM2353 1602.5h1.5v23.2h-1.5zM2470 1602.5h1.5v23.2h-1.5zM2353 1602.5h118.5v1.5h-118.5zM2472 1602.5h1.5v23.2h-1.5zM2588.5 1602.5h1.5v23.2h-1.5zM2472 1602.5h118v1.5h-118z"/><path fill="#86681c" d="M575.3 168.4h3.2v4h-3.2zM579 164.4h3.2v4h-3.2zM582.7 168.4h6.4v4h-6.4zM586.4 168.4h3.2v4h-3.2zM593.8 164.4h3.2v4h-3.2zM597.5 168.4h6.4v4h-6.4zM605 168.4h3.2v4h-3.2zM608.7 164.4h3.2v4h-3.2zM612.4 168.4h6.4v4h-6.4zM616.1 168.4h3.2v4h-3.2zM623.5 164.4h3.2v4h-3.2zM627.2 168.4h6.4v4h-6.4zM630.9 164.4h3.2v4h-3.2zM634.6 168.4h3.2v4h-3.2zM638.3 164.4h3.2v4h-3.2zM642 168.4h6.4v4h-6.4zM645.7 168.4h3.2v4h-3.2zM653.2 164.4h3.2v4h-3.2zM656.9 168.4h6.4v4h-6.4zM660.6 164.4h3.2v4h-3.2zM664.3 168.4h3.2v4h-3.2zM694.5 168.4h3.2v4h-3.2zM698.2 164.4h3.2v4h-3.2zM701.9 168.4h6.4v4h-6.4zM705.6 168.4h3.2v4h-3.2zM713 164.4h3.2v4h-3.2zM716.7 168.4h6.4v4h-6.4zM724.2 168.4h3.2v4h-3.2zM727.9 164.4h3.2v4h-3.2zM731.6 168.4h6.4v4h-6.4zM735.3 168.4h3.2v4h-3.2zM742.7 164.4h3.2v4h-3.2zM746.4 168.4h6.4v4h-6.4zM753.8 168.4h3.2v4h-3.2zM757.5 164.4h3.2v4h-3.2zM761.2 168.4h6.4v4h-6.4zM764.9 168.4h3.2v4h-3.2zM772.4 164.4h3.2v4h-3.2zM776.1 168.4h6.4v4h-6.4zM783.5 168.4h3.2v4h-3.2zM787.2 164.4h3.2v4h-3.2zM790.9 168.4h6.4v4h-6.4zM794.6 168.4h3.2v4h-3.2zM802 164.4h3.2v4h-3.2zM805.7 168.4h6.4v4h-6.4zM809.4 164.4h3.2v4h-3.2zM813.1 168.4h3.2v4h-3.2zM816.8 164.4h3.2v4h-3.2zM820.6 168.4h6.4v4h-6.4zM824.3 168.4h3.2v4h-3.2zM831.7 164.4h3.2v4h-3.2zM835.4 168.4h6.4v4h-6.4zM839.1 164.4h3.2v4h-3.2zM842.8 168.4h3.2v4h-3.2zM846.5 164.4h3.2v4h-3.2zM850.2 168.4h6.4v4h-6.4zM853.9 168.4h3.2v4h-3.2zM861.3 164.4h3.2v4h-3.2zM865 168.4h6.4v4h-6.4zM868.8 164.4h3.2v4h-3.2zM872.5 168.4h3.2v4h-3.2zM876.2 164.4h3.2v4h-3.2zM879.9 168.4h6.4v4h-6.4zM883.6 168.4h3.2v4h-3.2zM891 164.4h3.2v4h-3.2zM894.7 168.4h6.4v4h-6.4zM898.4 164.4h3.2v4h-3.2zM902.1 168.4h3.2v4h-3.2zM905.8 164.4h3.2v4h-3.2zM909.5 168.4h6.4v4h-6.4zM913.2 168.4h3.2v4h-3.2zM920.7 164.4h3.2v4h-3.2zM932.4 168.4h3.2v4h-3.2zM936.1 164.4h3.2v4h-3.2zM939.8 168.4h6.4v4h-6.4zM943.5 168.4h3.2v4h-3.2zM950.9 164.4h3.2v4h-3.2zM954.6 168.4h6.4v4h-6.4zM958.4 164.4h3.2v4h-3.2zM962.1 168.4h3.2v4h-3.2zM965.8 164.4h3.2v4h-3.2zM969.5 168.4h6.4v4h-6.4zM973.2 168.4h3.2v4h-3.2zM980.6 164.4h3.2v4h-3.2zM984.3 168.4h6.4v4h-6.4zM988 164.4h3.2v4h-3.2zM991.7 168.4h3.2v4h-3.2zM995.4 164.4h3.2v4h-3.2zM999.1 168.4h6.4v4h-6.4zM1002.8 168.4h3.2v4h-3.2zM1010.3 164.4h3.2v4h-3.2zM1014 168.4h6.4v4h-6.4zM1021.4 168.4h3.2v4h-3.2zM1025.1 164.4h3.2v4h-3.2zM1028.8 168.4h6.4v4h-6.4zM1032.5 168.4h3.2v4h-3.2zM1039.9 164.4h3.2v4h-3.2zM1043.6 168.4h6.4v4h-6.4zM1051 168.4h3.2v4h-3.2zM1054.7 164.4h3.2v4h-3.2zM1058.5 168.4h6.4v4h-6.4zM1062.2 168.4h3.2v4h-3.2zM1069.6 164.4h3.2v4h-3.2zM1073.3 168.4h6.4v4h-6.4zM1077 164.4h3.2v4h-3.2zM1080.7 168.4h3.2v4h-3.2zM1084.4 164.4h3.2v4h-3.2zM1088.1 168.4h6.4v4h-6.4zM1091.8 168.4h3.2v4h-3.2zM1099.2 164.4h3.2v4h-3.2zM1102.9 168.4h6.4v4h-6.4zM1110.4 168.4h3.2v4h-3.2zM1114.1 164.4h3.2v4h-3.2zM1117.8 168.4h6.4v4h-6.4zM1121.5 168.4h3.2v4h-3.2zM1128.9 164.4h3.2v4h-3.2zM1132.6 168.4h6.4v4h-6.4zM1136.3 164.4h3.2v4h-3.2zM1140 168.4h3.2v4h-3.2zM1143.7 164.4h3.2v4h-3.2zM1147.4 168.4h6.4v4h-6.4zM1151.1 168.4h3.2v4h-3.2zM1158.6 164.4h3.2v4h-3.2zM1162.3 168.4h6.4v4h-6.4zM1169.7 168.4h3.2v4h-3.2zM1173.4 164.4h3.2v4h-3.2zM1177.1 168.4h6.4v4h-6.4zM1180.8 168.4h3.2v4h-3.2zM1188.2 164.4h3.2v4h-3.2zM1191.9 168.4h6.4v4h-6.4zM1195.6 164.4h3.2v4h-3.2zM1199.3 168.4h3.2v4h-3.2zM1203 164.4h3.2v4h-3.2zM1206.8 168.4h6.4v4h-6.4zM1210.5 168.4h3.2v4h-3.2zM1217.9 164.4h3.2v4h-3.2zM1221.6 168.4h6.4v4h-6.4zM1225.3 164.4h3.2v4h-3.2zM1229 168.4h3.2v4h-3.2zM1232.7 164.4h3.2v4h-3.2zM1236.4 168.4h6.4v4h-6.4zM1240.1 168.4h3.2v4h-3.2zM1247.5 164.4h3.2v4h-3.2zM1251.2 168.4h6.4v4h-6.4zM1255 164.4h3.2v4h-3.2zM1258.7 168.4h3.2v4h-3.2zM1262.4 164.4h3.2v4h-3.2zM1266.1 168.4h6.4v4h-6.4zM1269.8 168.4h3.2v4h-3.2zM1277.2 164.4h3.2v4h-3.2zM1280.9 168.4h6.4v4h-6.4zM1284.6 164.4h3.2v4h-3.2zM1288.3 168.4h3.2v4h-3.2zM1292 164.4h3.2v4h-3.2zM1295.7 168.4h6.4v4h-6.4zM1299.4 168.4h3.2v4h-3.2zM1306.9 164.4h3.2v4h-3.2zM1310.6 168.4h6.4v4h-6.4zM1318 168.4h3.2v4h-3.2zM1321.7 164.4h3.2v4h-3.2zM1325.4 168.4h6.4v4h-6.4zM1329.1 168.4h3.2v4h-3.2zM1336.5 164.4h3.2v4h-3.2zM1340.2 168.4h6.4v4h-6.4zM1347.6 168.4h3.2v4h-3.2zM1351.3 164.4h3.2v4h-3.2zM1355.1 168.4h6.4v4h-6.4zM1358.8 168.4h3.2v4h-3.2zM1366.2 164.4h3.2v4h-3.2zM1369.9 168.4h6.4v4h-6.4zM1373.6 164.4h3.2v4h-3.2zM1377.3 168.4h3.2v4h-3.2zM1381 164.4h3.2v4h-3.2zM1384.7 168.4h6.4v4h-6.4zM1388.4 168.4h3.2v4h-3.2zM1395.8 164.4h3.2v4h-3.2zM1405.5 168.4h3.2v4h-3.2zM1409.2 164.4h3.2v4h-3.2zM1412.9 168.4h6.4v4h-6.4zM1416.6 168.4h3.2v4h-3.2zM1424 164.4h3.2v4h-3.2zM1427.7 168.4h6.4v4h-6.4zM1431.5 164.4h3.2v4h-3.2zM1435.2 168.4h3.2v4h-3.2zM1438.9 164.4h3.2v4h-3.2zM1442.6 168.4h6.4v4h-6.4zM1446.3 168.4h3.2v4h-3.2zM1453.7 164.4h3.2v4h-3.2zM1457.4 168.4h6.4v4h-6.4zM1461.1 164.4h3.2v4h-3.2zM1464.8 168.4h3.2v4h-3.2zM1468.5 164.4h3.2v4h-3.2zM1472.2 168.4h6.4v4h-6.4zM1475.9 168.4h3.2v4h-3.2zM1483.4 164.4h3.2v4h-3.2zM1487.1 168.4h6.4v4h-6.4zM1494.5 168.4h3.2v4h-3.2zM1498.2 164.4h3.2v4h-3.2zM1501.9 168.4h6.4v4h-6.4zM1505.6 168.4h3.2v4h-3.2zM1513 164.4h3.2v4h-3.2zM1516.7 168.4h6.4v4h-6.4zM1520.4 164.4h3.2v4h-3.2zM1524.1 168.4h3.2v4h-3.2zM1527.8 164.4h3.2v4h-3.2zM1531.6 168.4h6.4v4h-6.4zM1535.3 168.4h3.2v4h-3.2zM1542.7 164.4h3.2v4h-3.2zM1546.4 168.4h6.4v4h-6.4zM1550.1 164.4h3.2v4h-3.2zM1553.8 168.4h3.2v4h-3.2zM1557.5 164.4h3.2v4h-3.2zM1561.2 168.4h6.4v4h-6.4zM1564.9 168.4h3.2v4h-3.2zM1572.3 164.4h3.2v4h-3.2zM1576 168.4h6.4v4h-6.4zM1579.8 164.4h3.2v4h-3.2zM1583.5 168.4h3.2v4h-3.2zM1587.2 164.4h3.2v4h-3.2zM1590.9 168.4h6.4v4h-6.4zM1594.6 168.4h3.2v4h-3.2zM1602 164.4h3.2v4h-3.2zM1605.7 168.4h6.4v4h-6.4zM1613.1 168.4h3.2v4h-3.2zM1616.8 164.4h3.2v4h-3.2zM1620.5 168.4h6.4v4h-6.4zM1624.2 168.4h3.2v4h-3.2zM1631.7 164.4h3.2v4h-3.2zM1635.4 168.4h6.4v4h-6.4zM1643 168.4h3.2v4h-3.2zM1646.7 164.4h3.2v4h-3.2zM1650.4 168.4h6.4v4h-6.4zM1654.1 168.4h3.2v4h-3.2zM1661.5 164.4h3.2v4h-3.2zM1665.2 168.4h6.4v4h-6.4zM1672.7 168.4h3.2v4h-3.2zM1676.4 164.4h3.2v4h-3.2zM1680.1 168.4h6.4v4h-6.4zM1683.8 168.4h3.2v4h-3.2zM1691.2 164.4h3.2v4h-3.2zM1694.9 168.4h6.4v4h-6.4zM1698.6 164.4h3.2v4h-3.2zM1702.3 168.4h3.2v4h-3.2zM1706 164.4h3.2v4h-3.2zM1709.7 168.4h6.4v4h-6.4zM1713.4 168.4h3.2v4h-3.2zM1720.9 164.4h3.2v4h-3.2zM1724.6 168.4h6.4v4h-6.4zM1728.3 164.4h3.2v4h-3.2zM1732 168.4h3.2v4h-3.2zM1735.7 164.4h3.2v4h-3.2zM1739.4 168.4h6.4v4h-6.4zM1743.1 168.4h3.2v4h-3.2zM1750.5 164.4h3.2v4h-3.2zM1754.2 168.4h6.4v4h-6.4zM1761.6 168.4h3.2v4h-3.2zM1765.3 164.4h3.2v4h-3.2zM1769.1 168.4h6.4v4h-6.4zM1772.8 168.4h3.2v4h-3.2zM1780.2 164.4h3.2v4h-3.2zM1783.9 168.4h6.4v4h-6.4zM1791.3 168.4h3.2v4h-3.2zM1795 164.4h3.2v4h-3.2zM1798.7 168.4h6.4v4h-6.4zM1802.4 168.4h3.2v4h-3.2zM1809.8 164.4h3.2v4h-3.2zM1813.5 168.4h6.4v4h-6.4zM1821 168.4h3.2v4h-3.2zM1824.7 164.4h3.2v4h-3.2zM1828.4 168.4h6.4v4h-6.4zM1832.1 168.4h3.2v4h-3.2zM1839.5 164.4h3.2v4h-3.2zM1843.2 168.4h6.4v4h-6.4zM1846.9 164.4h3.2v4h-3.2zM1850.6 168.4h3.2v4h-3.2zM1854.3 164.4h3.2v4h-3.2zM1858 168.4h6.4v4h-6.4zM1861.7 168.4h3.2v4h-3.2zM1869.2 164.4h3.2v4h-3.2zM1872.9 168.4h6.4v4h-6.4zM1876.6 164.4h3.2v4h-3.2zM1880.3 168.4h3.2v4h-3.2zM1884 164.4h3.2v4h-3.2zM1887.7 168.4h6.4v4h-6.4zM1891.4 168.4h3.2v4h-3.2zM1898.8 164.4h3.2v4h-3.2zM1902.5 168.4h6.4v4h-6.4zM1906.2 164.4h3.2v4h-3.2zM1909.9 168.4h3.2v4h-3.2zM1913.6 164.4h3.2v4h-3.2zM1917.4 168.4h6.4v4h-6.4zM1921.1 168.4h3.2v4h-3.2zM1928.5 164.4h3.2v4h-3.2zM1932.2 168.4h6.4v4h-6.4zM1939.6 168.4h3.2v4h-3.2zM1943.3 164.4h3.2v4h-3.2zM1947 168.4h6.4v4h-6.4zM1950.7 168.4h3.2v4h-3.2zM1958.1 164.4h3.2v4h-3.2zM1961.8 168.4h6.4v4h-6.4zM1969.3 168.4h3.2v4h-3.2zM1973 164.4h3.2v4h-3.2zM1976.7 168.4h6.4v4h-6.4zM1980.4 168.4h3.2v4h-3.2zM1987.8 164.4h3.2v4h-3.2zM1991.5 168.4h6.4v4h-6.4zM1998.9 168.4h3.2v4h-3.2zM2002.6 164.4h3.2v4h-3.2zM2006.3 168.4h6.4v4h-6.4zM2010 168.4h3.2v4h-3.2zM2017.5 164.4h3.2v4h-3.2zM2021.2 168.4h6.4v4h-6.4zM2028.6 168.4h3.2v4h-3.2zM2032.3 164.4h3.2v4h-3.2zM2036 168.4h6.4v4h-6.4zM2039.7 168.4h3.2v4h-3.2zM2047.1 164.4h3.2v4h-3.2zM2050.8 168.4h6.4v4h-6.4zM2058.2 168.4h3.2v4h-3.2zM2061.9 164.4h3.2v4h-3.2zM2065.7 168.4h6.4v4h-6.4zM2069.4 168.4h3.2v4h-3.2zM2076.8 164.4h3.2v4h-3.2zM2080.5 168.4h6.4v4h-6.4zM2084.2 164.4h3.2v4h-3.2zM2087.9 168.4h3.2v4h-3.2zM2091.6 164.4h3.2v4h-3.2zM2095.3 168.4h6.4v4h-6.4zM2099 168.4h3.2v4h-3.2zM2106.4 164.4h3.2v4h-3.2zM2110.1 168.4h6.4v4h-6.4zM2118 168.4h3.2v4h-3.2zM2121.7 164.4h3.2v4h-3.2zM2125.4 168.4h6.4v4h-6.4zM2129.1 168.4h3.2v4h-3.2zM2136.5 164.4h3.2v4h-3.2zM2140.2 168.4h6.4v4h-6.4zM2144 164.4h3.2v4h-3.2zM2147.7 168.4h3.2v4h-3.2zM2151.4 164.4h3.2v4h-3.2zM2155.1 168.4h6.4v4h-6.4zM2158.8 168.4h3.2v4h-3.2zM2166.2 164.4h3.2v4h-3.2zM2169.9 168.4h6.4v4h-6.4zM2173.6 164.4h3.2v4h-3.2zM2177.3 168.4h3.2v4h-3.2zM2181 164.4h3.2v4h-3.2zM2184.7 168.4h6.4v4h-6.4zM2188.4 168.4h3.2v4h-3.2zM2195.9 164.4h3.2v4h-3.2zM2199.6 168.4h6.4v4h-6.4zM2203.3 164.4h3.2v4h-3.2zM2207 168.4h3.2v4h-3.2zM2210.7 164.4h3.2v4h-3.2zM2214.4 168.4h6.4v4h-6.4zM2218.1 168.4h3.2v4h-3.2zM2225.5 164.4h3.2v4h-3.2zM2229.2 168.4h6.4v4h-6.4zM2236.6 168.4h3.2v4h-3.2zM2240.3 164.4h3.2v4h-3.2zM2244.1 168.4h6.4v4h-6.4zM2247.8 168.4h3.2v4h-3.2zM2255.2 164.4h3.2v4h-3.2zM2258.9 168.4h6.4v4h-6.4zM2266.3 168.4h3.2v4h-3.2zM2270 164.4h3.2v4h-3.2zM2273.7 168.4h6.4v4h-6.4zM2277.4 168.4h3.2v4h-3.2zM2284.8 164.4h3.2v4h-3.2zM2288.5 168.4h6.4v4h-6.4zM2292.3 164.4h3.2v4h-3.2zM2296 168.4h3.2v4h-3.2zM2299.7 164.4h3.2v4h-3.2zM2303.4 168.4h6.4v4h-6.4zM2307.1 168.4h3.2v4h-3.2zM2314.5 164.4h3.2v4h-3.2zM2318.2 168.4h6.4v4h-6.4zM2325.6 168.4h3.2v4h-3.2zM2329.3 164.4h3.2v4h-3.2zM2333 168.4h6.4v4h-6.4zM2336.7 168.4h3.2v4h-3.2zM2344.2 164.4h3.2v4h-3.2zM2347.9 168.4h6.4v4h-6.4zM2355.5 168.4h3.2v4h-3.2zM2359.2 164.4h3.2v4h-3.2zM2362.9 168.4h6.4v4h-6.4zM2366.6 168.4h3.2v4h-3.2zM2374 164.4h3.2v4h-3.2zM2377.7 168.4h6.4v4h-6.4zM2385.2 168.4h3.2v4h-3.2zM2388.9 164.4h3.2v4h-3.2zM2392.6 168.4h6.4v4h-6.4zM2396.3 168.4h3.2v4h-3.2zM2403.7 164.4h3.2v4h-3.2zM2407.4 168.4h6.4v4h-6.4zM2411.1 164.4h3.2v4h-3.2zM2414.8 168.4h3.2v4h-3.2zM2418.5 164.4h3.2v4h-3.2zM2422.2 168.4h6.4v4h-6.4zM2425.9 168.4h3.2v4h-3.2zM2433.4 164.4h3.2v4h-3.2zM2437.1 168.4h6.4v4h-6.4zM2444.5 168.4h3.2v4h-3.2zM2448.2 164.4h3.2v4h-3.2zM2451.9 168.4h6.4v4h-6.4zM2455.6 168.4h3.2v4h-3.2zM2463 164.4h3.2v4h-3.2zM2466.7 168.4h6.4v4h-6.4zM2470.4 164.4h3.2v4h-3.2zM2474.1 168.4h3.2v4h-3.2zM2477.8 164.4h3.2v4h-3.2zM2481.6 168.4h6.4v4h-6.4zM2485.3 168.4h3.2v4h-3.2zM2492.7 164.4h3.2v4h-3.2zM2496.4 168.4h6.4v4h-6.4zM2500.1 164.4h3.2v4h-3.2zM2503.8 168.4h3.2v4h-3.2zM2507.5 164.4h3.2v4h-3.2zM2511.2 168.4h6.4v4h-6.4zM2514.9 168.4h3.2v4h-3.2zM2522.3 164.4h3.2v4h-3.2zM2526 168.4h6.4v4h-6.4zM2533.5 168.4h3.2v4h-3.2zM2537.2 164.4h3.2v4h-3.2zM2540.9 168.4h6.4v4h-6.4zM2544.6 168.4h3.2v4h-3.2zM2552 164.4h3.2v4h-3.2zM2555.7 168.4h6.4v4h-6.4zM2559.4 164.4h3.2v4h-3.2zM2563.1 168.4h3.2v4h-3.2zM2566.8 164.4h3.2v4h-3.2zM2570.5 168.4h6.4v4h-6.4zM2574.2 168.4h3.2v4h-3.2zM2581.7 164.4h3.2v4h-3.2z"/><path fill="#8a6a1a" d="M694 160.4h231.6v3.2h-231.6zM870.6 154.4h2v3h-2zM881.6 151.4h2v3h-2zM892.6 154.4h2v3h-2zM903.6 151.4h2v3h-2zM931.9 153.4h468.1v3.2h-468.1zM1345 147.4h2v3h-2zM1356 144.4h2v3h-2zM1367 147.4h2v3h-2zM1378 144.4h2v3h-2zM1405 143.9h148v3.2h-148zM1556 147.9h1.8v3h-1.8zM1560 150.9h1.8v3h-1.8zM1564 153.9h1.8v3h-1.8zM1568 147.9h1.8v3h-1.8zM1572 150.9h1.8v3h-1.8zM1642.5 157.9h469.5v3.2h-469.5zM2057.5 151.9h2v3h-2zM2068.5 148.9h2v3h-2zM2079.5 151.9h2v3h-2zM2090.5 148.9h2v3h-2zM2117.5 157.9h232.5v3.2h-232.5zM2295 151.9h2v3h-2zM2306 148.9h2v3h-2zM2317 151.9h2v3h-2zM2328 148.9h2v3h-2zM2355 157.9h232v3.2h-232zM2532 151.9h2v3h-2zM2543 148.9h2v3h-2zM2554 151.9h2v3h-2zM2565 148.9h2v3h-2z"/><path fill="#1f40b8" d="M694.3 605.2h14v3.2h-14zM708.9 605.2h8v3.2h-8zM718.4 605.2h16v3.2h-16zM737.4 605.2h14v3.2h-14zM752.9 605.2h14v3.2h-14zM769.9 602.2h14v3.2h-14zM785.4 602.2h14v3.2h-14zM800.9 602.2h12v3.2h-12zM813.5 602.2h12v3.2h-12zM826.1 602.2h14v3.2h-14zM843.1 599.2h14v3.2h-14zM860.1 601.2h16v3.2h-16zM877.6 601.2h12v3.2h-12zM892.6 601.2h8v3.2h-8zM903.6 601.2h14v3.2h-14zM919.1 598.2h5.6v3.2h-5.6zM932 605.2h12v3.2h-12zM947 602.2h16v3.2h-16zM963.6 607.2h24v3.2h-24zM990.6 602.2h16v3.2h-16zM1008.1 602.2h8v3.2h-8zM1019.1 602.2h12v3.2h-12zM1032.6 602.2h24v3.2h-24zM1058.1 607.2h6v3.2h-6zM1064.7 607.2h12v3.2h-12zM1079.7 604.2h12v3.2h-12zM1092.3 599.2h14v3.2h-14zM1106.9 596.2h12v3.2h-12zM1121.9 596.2h8v3.2h-8zM1131.4 598.2h6v3.2h-6zM1138.9 603.2h12v3.2h-12zM1152.4 598.2h24v3.2h-24zM1177.9 603.2h24v3.2h-24zM1204.9 606.2h24v3.2h-24zM1229.5 601.2h24v3.2h-24zM1256.5 604.2h6v3.2h-6zM1264 599.2h8v3.2h-8zM1272.6 599.2h14v3.2h-14zM1289.6 596.2h24v3.2h-24zM1315.1 596.2h12v3.2h-12zM1328.6 596.2h8v3.2h-8zM1337.2 601.2h6v3.2h-6zM1344.7 603.2h6v3.2h-6zM1351.3 598.2h8v3.2h-8zM1362.3 603.2h8v3.2h-8zM1370.9 603.2h16v3.2h-16zM1389.9 603.2h10.1v3.2h-10.1zM1406 605.2h16v3.2h-16zM1423.5 605.2h6v3.2h-6zM1432.5 605.2h24v3.2h-24zM1458 605.2h16v3.2h-16zM1475.5 605.2h14v3.2h-14zM1491 607.2h24v3.2h-24zM1515.6 602.2h14v3.2h-14zM1530.2 607.2h24v3.2h-24zM1557.2 609.2h8v3.2h-8zM1568.2 606.2h16v3.2h-16zM1585.7 601.2h6v3.2h-6zM1592.3 601.2h14v3.2h-14zM1607.8 598.2h8v3.2h-8zM1618.8 603.2h14v3.2h-14zM1643.7 605.2h6v3.2h-6zM1651.2 610.2h6v3.2h-6zM1660.2 615.2h24v3.2h-24zM1687.2 612.2h16v3.2h-16zM1703.8 615.2h12v3.2h-12zM1718.8 615.2h12v3.2h-12zM1732.3 612.2h6v3.2h-6zM1738.9 607.2h12v3.2h-12zM1752.4 604.2h24v3.2h-24zM1777 606.2h14v3.2h-14zM1794 606.2h16v3.2h-16zM1811.5 608.2h24v3.2h-24zM1837 608.2h12v3.2h-12zM1852 603.2h14v3.2h-14zM1869 598.2h6v3.2h-6zM1881 605.2h6v3.2h-6zM1888.5 602.2h24v3.2h-24zM1914 602.2h24v3.2h-24zM1941 602.2h12v3.2h-12zM1954.5 604.2h14v3.2h-14zM1971.5 606.2h6v3.2h-6zM1979 603.2h14v3.2h-14zM1993.6 603.2h12v3.2h-12zM2008.6 603.2h12v3.2h-12zM2022.1 603.2h14v3.2h-14zM2036.7 600.2h14v3.2h-14zM2052.2 602.2h8v3.2h-8zM2060.8 602.2h6v3.2h-6zM2069.8 599.2h14v3.2h-14zM2086.8 596.2h8v3.2h-8zM2097.8 596.2h14v3.2h-14zM2118 605.2h16v3.2h-16zM2137 605.2h24v3.2h-24zM2161.6 607.2h14v3.2h-14zM2176.2 612.2h16v3.2h-16zM2193.7 612.2h8v3.2h-8zM2203.2 612.2h8v3.2h-8zM2212.7 609.2h8v3.2h-8zM2222.2 609.2h8v3.2h-8zM2233.2 612.2h8v3.2h-8zM2241.8 609.2h24v3.2h-24zM2268.8 609.2h12v3.2h-12zM2282.3 609.2h8v3.2h-8zM2290.9 604.2h12v3.2h-12zM2303.5 601.2h6v3.2h-6zM2311 598.2h12v3.2h-12zM2326 598.2h24v3.2h-24zM2356 605.2h6v3.2h-6zM2362.6 602.2h14v3.2h-14zM2377.2 599.2h8v3.2h-8zM2386.7 596.2h14v3.2h-14zM2403.7 596.2h16v3.2h-16zM2422.7 599.2h6v3.2h-6zM2430.2 601.2h12v3.2h-12zM2442.8 601.2h24v3.2h-24zM2469.8 601.2h24v3.2h-24zM2494.4 603.2h12v3.2h-12zM2507.9 606.2h12v3.2h-12zM2522.9 603.2h24v3.2h-24zM2549.9 598.2h8v3.2h-8zM2558.5 600.2h16v3.2h-16zM2577.5 600.2h9.5v3.2h-9.5zM694.3 651.1h14v3.2h-14zM708.9 651.1h8v3.2h-8zM718.4 651.1h16v3.2h-16zM737.4 651.1h14v3.2h-14zM752.9 651.1h14v3.2h-14zM769.9 648.1h14v3.2h-14zM785.4 648.1h14v3.2h-14zM800.9 648.1h12v3.2h-12zM813.5 648.1h12v3.2h-12zM826.1 648.1h14v3.2h-14zM843.1 645.1h14v3.2h-14zM860.1 647.1h16v3.2h-16zM877.6 647.1h12v3.2h-12zM892.6 647.1h8v3.2h-8zM903.6 647.1h14v3.2h-14zM919.1 644.1h5.6v3.2h-5.6zM932 651.1h12v3.2h-12zM947 648.1h16v3.2h-16zM963.6 653.1h24v3.2h-24zM990.6 648.1h16v3.2h-16zM1008.1 648.1h8v3.2h-8zM1019.1 648.1h12v3.2h-12zM1032.6 648.1h24v3.2h-24zM1058.1 653.1h6v3.2h-6zM1064.7 653.1h12v3.2h-12zM1079.7 650.1h12v3.2h-12zM1092.3 645.1h14v3.2h-14zM1106.9 642.1h12v3.2h-12zM1121.9 642.1h8v3.2h-8zM1131.4 644.1h6v3.2h-6zM1138.9 649.1h12v3.2h-12zM1152.4 644.1h24v3.2h-24zM1177.9 649.1h24v3.2h-24zM1204.9 652.1h24v3.2h-24zM1229.5 647.1h24v3.2h-24zM1256.5 650.1h6v3.2h-6zM1264 645.1h8v3.2h-8zM1272.6 645.1h14v3.2h-14zM1289.6 642.1h24v3.2h-24zM1315.1 642.1h12v3.2h-12zM1328.6 642.1h8v3.2h-8zM1337.2 647.1h6v3.2h-6zM1344.7 649.1h6v3.2h-6zM1351.3 644.1h8v3.2h-8zM1362.3 649.1h8v3.2h-8zM1370.9 649.1h16v3.2h-16zM1389.9 649.1h10.1v3.2h-10.1zM1643.7 651.1h6v3.2h-6zM1651.2 656.1h6v3.2h-6zM1660.2 661.1h24v3.2h-24zM1687.2 658.1h16v3.2h-16zM1703.8 661.1h12v3.2h-12zM1718.8 661.1h12v3.2h-12zM1732.3 658.1h6v3.2h-6zM1738.9 653.1h12v3.2h-12zM1752.4 650.1h24v3.2h-24zM1777 652.1h14v3.2h-14zM1794 652.1h16v3.2h-16zM1811.5 654.1h24v3.2h-24zM1837 654.1h12v3.2h-12zM1852 649.1h14v3.2h-14zM1869 644.1h6v3.2h-6zM1881 651.1h6v3.2h-6zM1888.5 648.1h24v3.2h-24zM1914 648.1h24v3.2h-24zM1941 648.1h12v3.2h-12zM1954.5 650.1h14v3.2h-14zM1971.5 652.1h6v3.2h-6zM1979 649.1h14v3.2h-14zM1993.6 649.1h12v3.2h-12zM2008.6 649.1h12v3.2h-12zM2022.1 649.1h14v3.2h-14zM2036.7 646.1h14v3.2h-14zM2052.2 648.1h8v3.2h-8zM2060.8 648.1h6v3.2h-6zM2069.8 645.1h14v3.2h-14zM2086.8 642.1h8v3.2h-8zM2097.8 642.1h14v3.2h-14zM2118 651.1h16v3.2h-16zM2137 651.1h24v3.2h-24zM2161.6 653.1h14v3.2h-14zM2176.2 658.1h16v3.2h-16zM2193.7 658.1h8v3.2h-8zM2203.2 658.1h8v3.2h-8zM2212.7 655.1h8v3.2h-8zM2222.2 655.1h8v3.2h-8zM2233.2 658.1h8v3.2h-8zM2241.8 655.1h24v3.2h-24zM2268.8 655.1h12v3.2h-12zM2282.3 655.1h8v3.2h-8zM2290.9 650.1h12v3.2h-12zM2303.5 647.1h6v3.2h-6zM2311 644.1h12v3.2h-12zM2326 644.1h24v3.2h-24zM2356 651.1h6v3.2h-6zM2362.6 648.1h14v3.2h-14zM2377.2 645.1h8v3.2h-8zM2386.7 642.1h14v3.2h-14zM2403.7 642.1h16v3.2h-16zM2422.7 645.1h6v3.2h-6zM2430.2 647.1h12v3.2h-12zM2442.8 647.1h24v3.2h-24zM2469.8 647.1h24v3.2h-24zM2494.4 649.1h12v3.2h-12zM2507.9 652.1h12v3.2h-12zM2522.9 649.1h24v3.2h-24zM2549.9 644.1h8v3.2h-8zM2558.5 646.1h16v3.2h-16zM2577.5 646.1h9.5v3.2h-9.5z"/><g transform="translate(574.3 181.8)"><rect width="93.7" height="38.4" fill="url(#hs)"/></g><g transform="translate(693.5 181.8)"><rect width="233.6" height="38.4" fill="url(#hs)"/></g><g transform="translate(1642.5 181.8)"><rect width="946" height="38.4" fill="url(#hs)"/></g><g transform="translate(693.5 411.2)"><rect width="233.6" height="38.4" fill="url(#hs)"/></g><g transform="translate(1642.5 411.2)"><rect width="946" height="38.4" fill="url(#hs)"/></g><g transform="translate(694 226.1)"><rect width="232.6" height="39.9" fill="url(#cr)"/></g><g transform="translate(1643 226.1)"><rect width="232.7" height="39.9" fill="url(#cr)"/></g><g transform="translate(1879.7 226.1)"><rect width="233.8" height="39.9" fill="url(#cr)"/></g><g transform="translate(2117.5 226.1)"><rect width="233.5" height="39.9" fill="url(#cr)"/></g><g transform="translate(2355 226.1)"><rect width="233" height="39.9" fill="url(#cr)"/></g><g transform="translate(694 272)"><rect width="232.6" height="39.9" fill="url(#cr)"/></g><g transform="translate(1643 272)"><rect width="232.7" height="39.9" fill="url(#cr)"/></g><g transform="translate(1879.7 272)"><rect width="233.8" height="39.9" fill="url(#cr)"/></g><g transform="translate(2117.5 272)"><rect width="233.5" height="39.9" fill="url(#cr)"/></g><g transform="translate(2355 272)"><rect width="233" height="39.9" fill="url(#cr)"/></g><g transform="translate(699.4 317.9)"><rect width="237.6" height="41.4" fill="url(#t1)"/></g><g transform="translate(1648.4 317.9)"><rect width="949.1" height="41.4" fill="url(#t2)"/></g><g transform="translate(699.4 363.8)"><rect width="237.6" height="41.4" fill="url(#t1)"/></g><g transform="translate(1648.4 363.8)"><rect width="949.1" height="41.4" fill="url(#t2)"/></g><g transform="translate(693 776.7)"><rect width="233" height="39.9" fill="url(#wd)"/></g><g transform="translate(1642 776.7)"><rect width="471" height="39.9" fill="url(#wd)"/></g><g transform="translate(2117 776.7)"><rect width="471" height="39.9" fill="url(#wd)"/></g><g transform="translate(575 822.6)"><rect width="90" height="39.9" fill="url(#wd)"/></g><g transform="translate(693 822.6)"><rect width="233" height="39.9" fill="url(#wd)"/></g><g transform="translate(1642 822.6)"><rect width="471" height="39.9" fill="url(#wd)"/></g><g transform="translate(2117 822.6)"><rect width="471" height="39.9" fill="url(#wd)"/></g><g transform="translate(575 868.5)"><rect width="90" height="39.9" fill="url(#wb)"/></g><g transform="translate(693 868.5)"><rect width="233" height="39.9" fill="url(#wb)"/></g><g transform="translate(1642 868.5)"><rect width="471" height="39.9" fill="url(#wb)"/></g><g transform="translate(2117 868.5)"><rect width="471" height="39.9" fill="url(#wb)"/></g><g transform="translate(693 914.3)"><rect width="233" height="39.9" fill="url(#wb)"/></g><g transform="translate(1406 914.3)"><rect width="158" height="39.9" fill="url(#wt)"/></g><g transform="translate(1568.5 914.3)"><rect width="2.5" height="39.9" fill="url(#wb)"/></g><g transform="translate(1575.5 914.3)"><rect width="2.5" height="39.9" fill="url(#wb)"/></g><g transform="translate(1583 914.3)"><rect width="55" height="39.9" fill="url(#wb)"/></g><g transform="translate(1642 914.3)"><rect width="471" height="39.9" fill="url(#wb)"/></g><g transform="translate(2117 914.3)"><rect width="471" height="39.9" fill="url(#wb)"/></g><g transform="translate(693 960.2)"><rect width="204" height="39.9" fill="url(#wt)"/></g><g transform="translate(902 960.2)"><rect width="24" height="39.9" fill="url(#wt)"/></g><g transform="translate(1525 960.2)"><rect width="113" height="39.9" fill="url(#wt)"/></g><g transform="translate(1642 960.2)"><rect width="204" height="39.9" fill="url(#wt)"/></g><g transform="translate(1850 960.2)"><rect width="26" height="39.9" fill="url(#wt)"/></g><g transform="translate(1880 960.2)"><rect width="171" height="39.9" fill="url(#wt)"/></g><g transform="translate(2055 960.2)"><rect width="58" height="39.9" fill="url(#wt)"/></g><g transform="translate(2117 960.2)"><rect width="203.5" height="39.9" fill="url(#wt)"/></g><g transform="translate(2325 960.2)"><rect width="25" height="39.9" fill="url(#wt)"/></g><g transform="translate(2355 960.2)"><rect width="169" height="39.9" fill="url(#wt)"/></g><g transform="translate(2528 960.2)"><rect width="60" height="39.9" fill="url(#wt)"/></g><g transform="translate(692.4 1006.1)"><rect width="230.2" height="39.9" fill="url(#wl)"/></g><g transform="translate(1639.6 1006.1)"><rect width="469.4" height="39.9" fill="url(#wl)"/></g><g transform="translate(2113 1006.1)"><rect width="471" height="39.9" fill="url(#wl)"/></g><g transform="translate(868 1052)"><rect width="58.4" height="39.9" fill="url(#wa)"/></g><g transform="translate(1818 1052)"><rect width="58" height="39.9" fill="url(#wa)"/></g><g transform="translate(2055 1052)"><rect width="58" height="39.9" fill="url(#wa)"/></g><g transform="translate(2292 1052)"><rect width="58" height="39.9" fill="url(#wa)"/></g><g transform="translate(2529 1052)"><rect width="59" height="39.9" fill="url(#wa)"/></g><g transform="translate(868 1097.9)"><rect width="58.4" height="39.9" fill="url(#wa)"/></g><g transform="translate(1818 1097.9)"><rect width="58" height="39.9" fill="url(#wa)"/></g><g transform="translate(2055 1097.9)"><rect width="58" height="39.9" fill="url(#wa)"/></g><g transform="translate(2292 1097.9)"><rect width="58" height="39.9" fill="url(#wa)"/></g><g transform="translate(2529 1097.9)"><rect width="59" height="39.9" fill="url(#wa)"/></g><g transform="translate(928.5 1143.7)"><rect width="474.7" height="39.9" fill="url(#ws)"/></g><g transform="translate(928.5 1189.6)"><rect width="474.7" height="39.9" fill="url(#ws)"/></g><g transform="translate(967.9 1235.5)"><rect width="3.6" height="39.9" fill="url(#wa)"/></g><g transform="translate(976 1235.5)"><rect width="9.9" height="39.9" fill="url(#wa)"/></g><g transform="translate(996 1281.4)"><rect width="12.3" height="39.9" fill="url(#wa)"/></g><g transform="translate(1168.8 1327.3)"><rect width="113.2" height="39.9" fill="url(#wc)"/></g><g transform="translate(1287 1327.3)"><rect width="113.5" height="39.9" fill="url(#wc)"/></g><g transform="translate(1401.4 1373.1)"><rect width="175.1" height="39.9" fill="url(#wp)"/></g><g transform="translate(1434.6 1419)"><rect width="92.1" height="39.9" fill="url(#wt)"/></g><g transform="translate(693.1 1558.2)"><rect width="114.8" height="39.9" fill="url(#sm)"/></g><g transform="translate(811.5 1558.2)"><rect width="115" height="39.9" fill="url(#sm)"/></g><g transform="translate(2116.5 1558.2)"><rect width="116" height="39.9" fill="url(#sm)"/></g><g transform="translate(2235.5 1558.2)"><rect width="116" height="39.9" fill="url(#sm)"/></g><g transform="translate(2354.5 1558.2)"><rect width="115.5" height="39.9" fill="url(#sm)"/></g><g transform="translate(2473.5 1558.2)"><rect width="115" height="39.9" fill="url(#sm)"/></g><g transform="translate(693.1 1604)"><rect width="114.8" height="21.7" fill="url(#sm)"/></g><g transform="translate(811.5 1604)"><rect width="115" height="21.7" fill="url(#sm)"/></g><g transform="translate(1642.5 1604)"><rect width="115" height="21.7" fill="url(#sm)"/></g><g transform="translate(1760.5 1604)"><rect width="116" height="21.7" fill="url(#sm)"/></g><g transform="translate(1879.5 1604)"><rect width="115" height="21.7" fill="url(#sm)"/></g><g transform="translate(1997.5 1604)"><rect width="116" height="21.7" fill="url(#sm)"/></g><g transform="translate(2116.5 1604)"><rect width="116" height="21.7" fill="url(#sm)"/></g><g transform="translate(2235.5 1604)"><rect width="116" height="21.7" fill="url(#sm)"/></g><g transform="translate(2354.5 1604)"><rect width="115.5" height="21.7" fill="url(#sm)"/></g><g transform="translate(2473.5 1604)"><rect width="115" height="21.7" fill="url(#sm)"/></g><path fill="none" stroke="#f0c444" stroke-width="1.5" d="M573.5 135.1h95.2v39.9h-95.2zM692.8 135.1h235.1v39.9h-235.1zM930.6 135.1h471.6v39.9h-471.6zM1403.8 135.1h236v39.9h-236zM1641.2 135.1h473.5v39.9h-473.5zM2116.2 135.1h236v39.9h-236zM2353.8 135.1h235.5v39.9h-235.5zM573.5 181h95.2v39.9h-95.2zM692.8 181h235.1v39.9h-235.1zM1641.8 181h947.5v39.9h-947.5zM692.8 410.4h235.1v39.9h-235.1zM1641.8 410.4h947.5v39.9h-947.5zM692.8 226.9h235.1v39.9h-235.1zM1641.8 226.9h235.2v39.9h-235.2zM1878.5 226.9h236.3v39.9h-236.3zM2116.2 226.9h236v39.9h-236zM2353.8 226.9h235.5v39.9h-235.5zM692.8 272.8h235.1v39.9h-235.1zM1641.8 272.8h235.2v39.9h-235.2zM1878.5 272.8h236.3v39.9h-236.3zM2116.2 272.8h236v39.9h-236zM2353.8 272.8h235.5v39.9h-235.5zM663.5 456.3h5.7v39.9h-5.7zM670.7 456.3h5.7v39.9h-5.7zM677.9 456.3h5.7v39.9h-5.7zM685.1 456.3h5.7v39.9h-5.7z"/><path fill="none" stroke="#6f8cf6" stroke-width="1.5" d="M692 502.2h234.9v39.9h-234.9zM929.8 502.2h472.5v39.9h-472.5zM1641.5 502.2h235.8v39.9h-235.8zM1878.8 502.2h235.5v39.9h-235.5zM2115.8 502.2h236.5v39.9h-236.5zM2353.8 502.2h235.5v39.9h-235.5zM1403.8 502.2h236.2v39.9h-236.2z"/><path fill="none" stroke="#6c8af0" stroke-width="1.5" d="M692 593.9h234.9v39.9h-234.9zM929.8 593.9h472.5v39.9h-472.5zM1403.8 593.9h236.2v39.9h-236.2zM1641.5 593.9h235.8v39.9h-235.8zM1878.8 593.9h235.5v39.9h-235.5zM2115.8 593.9h236.5v39.9h-236.5zM2353.8 593.9h235.5v39.9h-235.5zM692 639.8h234.9v39.9h-234.9zM929.8 639.8h472.5v39.9h-472.5zM1641.5 639.8h235.8v39.9h-235.8zM1878.8 639.8h235.5v39.9h-235.5zM2115.8 639.8h236.5v39.9h-236.5zM2353.8 639.8h235.5v39.9h-235.5z"/><path fill="none" stroke="#42e8e8" stroke-width="1.5" d="M574 685.7h92.6v39.9h-92.6zM690.8 685.7h234.5v39.9h-234.5zM926.8 685.7h471.5v39.9h-471.5zM1399.8 685.7h237.1v39.9h-237.1zM1638.3 685.7h471.9v39.9h-471.9zM2111.8 685.7h477.5v39.9h-477.5zM691.8 777.5h235.5v39.9h-235.5zM1640.8 777.5h473.5v39.9h-473.5zM2115.8 777.5h473.5v39.9h-473.5zM573.8 823.3h92.5v39.9h-92.5zM691.8 823.3h235.5v39.9h-235.5zM1640.8 823.3h473.5v39.9h-473.5zM2115.8 823.3h473.5v39.9h-473.5zM573.8 869.2h92.5v39.9h-92.5zM691.8 869.2h235.5v39.9h-235.5zM1640.8 869.2h473.5v39.9h-473.5zM2115.8 869.2h473.5v39.9h-473.5zM691.8 915.1h235.5v39.9h-235.5zM1404.8 915.1h160.5v39.9h-160.5zM1567.2 915.1h5v39.9h-5zM1574.2 915.1h5v39.9h-5zM1581.8 915.1h57.5v39.9h-57.5zM1640.8 915.1h473.5v39.9h-473.5zM2115.8 915.1h473.5v39.9h-473.5zM691.8 961h206.5v39.9h-206.5zM900.8 961h26.5v39.9h-26.5zM1523.8 961h115.5v39.9h-115.5zM1640.8 961h206.5v39.9h-206.5zM1848.8 961h28.5v39.9h-28.5zM1878.8 961h173.5v39.9h-173.5zM2053.8 961h60.5v39.9h-60.5zM2115.8 961h206v39.9h-206zM2323.8 961h27.5v39.9h-27.5zM2353.8 961h171.5v39.9h-171.5zM2526.8 961h62.5v39.9h-62.5zM691.1 1006.9h232.7v39.9h-232.7zM1638.3 1006.9h471.9v39.9h-471.9zM2111.8 1006.9h473.5v39.9h-473.5zM866.8 1052.7h60.9v39.9h-60.9zM1816.8 1052.7h60.5v39.9h-60.5zM2053.8 1052.7h60.5v39.9h-60.5zM2290.8 1052.7h60.5v39.9h-60.5zM2527.8 1052.7h61.5v39.9h-61.5zM866.8 1098.6h60.9v39.9h-60.9zM1816.8 1098.6h60.5v39.9h-60.5zM2053.8 1098.6h60.5v39.9h-60.5zM2290.8 1098.6h60.5v39.9h-60.5zM2527.8 1098.6h61.5v39.9h-61.5zM927.2 1144.5h477.2v39.9h-477.2zM927.2 1190.4h477.2v39.9h-477.2zM966.6 1236.2h6.1v39.9h-6.1zM974.8 1236.2h12.4v39.9h-12.4zM994.8 1282.1h14.8v39.9h-14.8zM1167.5 1328h115.7v39.9h-115.7zM1285.8 1328h116v39.9h-116zM1400.2 1373.9h177.6v39.9h-177.6zM1433.3 1419.8h94.6v39.9h-94.6z"/><path fill="none" stroke="#4ab4f4" stroke-width="1.5" d="M692.4 1465.7h234.9v39.9h-234.9zM929.8 1465.7h472.5v39.9h-472.5zM1403.8 1465.7h177.3v39.9h-177.3zM1631.2 1465.7h473.5v39.9h-473.5zM2106.2 1465.7h483.1v39.9h-483.1zM692.4 1557.4h116.3v39.9h-116.3zM810.8 1557.4h116.5v39.9h-116.5zM2115.8 1557.4h117.5v39.9h-117.5zM2234.8 1557.4h117.5v39.9h-117.5zM2353.8 1557.4h117v39.9h-117zM2472.8 1557.4h116.5v39.9h-116.5z"/><rect x="574.3" y="181.8" width="24" height="16" fill="#e2c77c"/><text x="577.8" y="194.6" font-size="11" font-weight="bold" fill="#111">1</text><path fill="#111" d="M585.8 186.3h8l-4 5z"/><rect x="693.5" y="181.8" width="24" height="16" fill="#e2c77c"/><text x="697" y="194.6" font-size="11" font-weight="bold" fill="#111">1</text><path fill="#111" d="M705 186.3h8l-4 5z"/><rect x="1642.5" y="181.8" width="24" height="16" fill="#e2c77c"/><text x="1646" y="194.6" font-size="11" font-weight="bold" fill="#111">1</text><path fill="#111" d="M1654 186.3h8l-4 5z"/><rect x="693.5" y="411.2" width="24" height="16" fill="#e2c77c"/><text x="697" y="424" font-size="11" font-weight="bold" fill="#111">1</text><path fill="#111" d="M705 415.7h8l-4 5z"/><rect x="1642.5" y="411.2" width="24" height="16" fill="#e2c77c"/><text x="1646" y="424" font-size="11" font-weight="bold" fill="#111">1</text><path fill="#111" d="M1654 415.7h8l-4 5z"/><path fill="#5e4a17" d="M664.7 464.5l3 2l-3 2zM664.7 484.5l3 2l-3 2z"/><path fill="#5e4a17" d="M671.9 464.5l3 2l-3 2zM671.9 484.5l3 2l-3 2z"/><path fill="#5e4a17" d="M679.1 464.5l3 2l-3 2zM679.1 484.5l3 2l-3 2z"/><path fill="#5e4a17" d="M686.3 464.5l3 2l-3 2zM686.3 484.5l3 2l-3 2z"/><rect x="701" y="803.2" width="55.8" height="12.5" fill="#47c9c9"/><path fill="#0a1e1e" d="M703.5 813.2l8-6v6z"/><text x="712.5" y="813.5" font-size="10" fill="#0a1e1e">12.46 dB</text><rect x="1650" y="803.2" width="55.8" height="12.5" fill="#47c9c9"/><path fill="#0a1e1e" d="M1652.5 813.2l8-6v6z"/><text x="1661.5" y="813.5" font-size="10" fill="#0a1e1e">-0.37 dB</text><rect x="2125" y="803.2" width="11" height="12.5" fill="#47c9c9"/><path fill="#0a1e1e" d="M2127.5 813.2l8-6v6z"/><rect x="583" y="849.1" width="50.2" height="12.5" fill="#47c9c9"/><path fill="#0a1e1e" d="M585.5 859.1l8-6v6z"/><text x="594.5" y="859.3" font-size="10" fill="#0a1e1e">7.97 dB</text><rect x="701" y="849.1" width="55.8" height="12.5" fill="#47c9c9"/><path fill="#0a1e1e" d="M703.5 859.1l8-6v6z"/><text x="712.5" y="859.3" font-size="10" fill="#0a1e1e">12.46 dB</text><rect x="1650" y="849.1" width="55.8" height="12.5" fill="#47c9c9"/><path fill="#0a1e1e" d="M1652.5 859.1l8-6v6z"/><text x="1661.5" y="859.3" font-size="10" fill="#0a1e1e">-0.37 dB</text><rect x="2125" y="849.1" width="11" height="12.5" fill="#47c9c9"/><path fill="#0a1e1e" d="M2127.5 859.1l8-6v6z"/><rect x="583" y="895" width="11" height="12.5" fill="#47c9c9"/><path fill="#0a1e1e" d="M585.5 905l8-6v6z"/><rect x="701" y="895" width="55.8" height="12.5" fill="#47c9c9"/><path fill="#0a1e1e" d="M703.5 905l8-6v6z"/><text x="712.5" y="905.2" font-size="10" fill="#0a1e1e">-1.01 dB</text><rect x="1650" y="895" width="55.8" height="12.5" fill="#47c9c9"/><path fill="#0a1e1e" d="M1652.5 905l8-6v6z"/><text x="1661.5" y="905.2" font-size="10" fill="#0a1e1e">-4.21 dB</text><rect x="2125" y="895" width="55.8" height="12.5" fill="#47c9c9"/><path fill="#0a1e1e" d="M2127.5 905l8-6v6z"/><text x="2136.5" y="905.2" font-size="10" fill="#0a1e1e">-2.29 dB</text><rect x="701" y="940.8" width="55.8" height="12.5" fill="#47c9c9"/><path fill="#0a1e1e" d="M703.5 950.8l8-6v6z"/><text x="712.5" y="951.1" font-size="10" fill="#0a1e1e">-1.01 dB</text><rect x="1414" y="940.8" width="55.8" height="12.5" fill="#47c9c9"/><path fill="#0a1e1e" d="M1416.5 950.8l8-6v6z"/><text x="1425.5" y="951.1" font-size="10" fill="#0a1e1e">-1.01 dB</text><rect x="1591" y="940.8" width="11" height="12.5" fill="#47c9c9"/><path fill="#0a1e1e" d="M1593.5 950.8l8-6v6z"/><rect x="1650" y="940.8" width="55.8" height="12.5" fill="#47c9c9"/><path fill="#0a1e1e" d="M1652.5 950.8l8-6v6z"/><text x="1661.5" y="951.1" font-size="10" fill="#0a1e1e">-4.21 dB</text><rect x="2125" y="940.8" width="55.8" height="12.5" fill="#47c9c9"/><path fill="#0a1e1e" d="M2127.5 950.8l8-6v6z"/><text x="2136.5" y="951.1" font-size="10" fill="#0a1e1e">-2.29 dB</text><rect x="701" y="986.7" width="55.8" height="12.5" fill="#47c9c9"/><path fill="#0a1e1e" d="M703.5 996.7l8-6v6z"/><text x="712.5" y="997" font-size="10" fill="#0a1e1e">10.53 dB</text><rect x="1533" y="986.7" width="55.8" height="12.5" fill="#47c9c9"/><path fill="#0a1e1e" d="M1535.5 996.7l8-6v6z"/><text x="1544.5" y="997" font-size="10" fill="#0a1e1e">10.53 dB</text><rect x="1650" y="986.7" width="55.8" height="12.5" fill="#47c9c9"/><path fill="#0a1e1e" d="M1652.5 996.7l8-6v6z"/><text x="1661.5" y="997" font-size="10" fill="#0a1e1e">10.53 dB</text><rect x="1888" y="986.7" width="55.8" height="12.5" fill="#47c9c9"/><path fill="#0a1e1e" d="M1890.5 996.7l8-6v6z"/><text x="1899.5" y="997" font-size="10" fill="#0a1e1e">10.53 dB</text><rect x="2063" y="986.7" width="11" height="12.5" fill="#47c9c9"/><path fill="#0a1e1e" d="M2065.5 996.7l8-6v6z"/><rect x="2125" y="986.7" width="55.8" height="12.5" fill="#47c9c9"/><path fill="#0a1e1e" d="M2127.5 996.7l8-6v6z"/><text x="2136.5" y="997" font-size="10" fill="#0a1e1e">10.53 dB</text><rect x="2363" y="986.7" width="55.8" height="12.5" fill="#47c9c9"/><path fill="#0a1e1e" d="M2365.5 996.7l8-6v6z"/><text x="2374.5" y="997" font-size="10" fill="#0a1e1e">10.53 dB</text><rect x="2536" y="986.7" width="11" height="12.5" fill="#47c9c9"/><path fill="#0a1e1e" d="M2538.5 996.7l8-6v6z"/><rect x="700.4" y="1033.1" width="11" height="12.5" fill="#47c9c9"/><path fill="#0a1e1e" d="M702.9 1043.1l8-6v6z"/><rect x="1647.6" y="1033.1" width="11" height="12.5" fill="#47c9c9"/><path fill="#0a1e1e" d="M1650.1 1043.1l8-6v6z"/><rect x="2121" y="1033.1" width="11" height="12.5" fill="#47c9c9"/><path fill="#0a1e1e" d="M2123.5 1043.1l8-6v6z"/><rect x="876" y="1079" width="11" height="12.5" fill="#47c9c9"/><path fill="#0a1e1e" d="M878.5 1089l8-6v6z"/><rect x="1826" y="1079" width="11" height="12.5" fill="#47c9c9"/><path fill="#0a1e1e" d="M1828.5 1089l8-6v6z"/><rect x="2063" y="1079" width="11" height="12.5" fill="#47c9c9"/><path fill="#0a1e1e" d="M2065.5 1089l8-6v6z"/><rect x="2300" y="1079" width="11" height="12.5" fill="#47c9c9"/><path fill="#0a1e1e" d="M2302.5 1089l8-6v6z"/><rect x="2537" y="1079" width="11" height="12.5" fill="#47c9c9"/><path fill="#0a1e1e" d="M2539.5 1089l8-6v6z"/><rect x="876" y="1124.9" width="11" height="12.5" fill="#47c9c9"/><path fill="#0a1e1e" d="M878.5 1134.9l8-6v6z"/><rect x="1826" y="1124.9" width="11" height="12.5" fill="#47c9c9"/><path fill="#0a1e1e" d="M1828.5 1134.9l8-6v6z"/><rect x="2063" y="1124.9" width="11" height="12.5" fill="#47c9c9"/><path fill="#0a1e1e" d="M2065.5 1134.9l8-6v6z"/><rect x="2300" y="1124.9" width="11" height="12.5" fill="#47c9c9"/><path fill="#0a1e1e" d="M2302.5 1134.9l8-6v6z"/><rect x="2537" y="1124.9" width="11" height="12.5" fill="#47c9c9"/><path fill="#0a1e1e" d="M2539.5 1134.9l8-6v6z"/><rect x="936.5" y="1170.7" width="11" height="12.5" fill="#47c9c9"/><path fill="#0a1e1e" d="M939 1180.7l8-6v6z"/><rect x="936.5" y="1216.6" width="11" height="12.5" fill="#47c9c9"/><path fill="#0a1e1e" d="M939 1226.6l8-6v6z"/><rect x="1176.8" y="1353.8" width="50.2" height="12.5" fill="#47c9c9"/><path fill="#0a1e1e" d="M1179.3 1363.8l8-6v6z"/><text x="1188.3" y="1364" font-size="10" fill="#0a1e1e">9.89 dB</text><rect x="1295" y="1353.8" width="50.2" height="12.5" fill="#47c9c9"/><path fill="#0a1e1e" d="M1297.5 1363.8l8-6v6z"/><text x="1306.5" y="1364" font-size="10" fill="#0a1e1e">9.89 dB</text><rect x="1409.4" y="1400.1" width="11" height="12.5" fill="#47c9c9"/><path fill="#0a1e1e" d="M1411.9 1410.1l8-6v6z"/><rect x="1442.6" y="1446" width="11" height="12.5" fill="#47c9c9"/><path fill="#0a1e1e" d="M1445.1 1456l8-6v6z"/><rect x="693.1" y="1558.2" width="24" height="15.5" fill="#74bdea"/><text x="696.6" y="1570.5" font-size="11" font-weight="bold" fill="#111">1</text><path fill="#111" d="M704.6 1562.2h8l-4 5z"/><rect x="811.5" y="1558.2" width="24" height="15.5" fill="#74bdea"/><text x="815" y="1570.5" font-size="11" font-weight="bold" fill="#111">2</text><path fill="#111" d="M823 1562.2h8l-4 5z"/><rect x="2116.5" y="1558.2" width="24" height="15.5" fill="#74bdea"/><text x="2120" y="1570.5" font-size="11" font-weight="bold" fill="#111">1</text><path fill="#111" d="M2128 1562.2h8l-4 5z"/><rect x="2235.5" y="1558.2" width="24" height="15.5" fill="#74bdea"/><text x="2239" y="1570.5" font-size="11" font-weight="bold" fill="#111">2</text><path fill="#111" d="M2247 1562.2h8l-4 5z"/><rect x="2354.5" y="1558.2" width="24" height="15.5" fill="#74bdea"/><text x="2358" y="1570.5" font-size="11" font-weight="bold" fill="#111">1</text><path fill="#111" d="M2366 1562.2h8l-4 5z"/><rect x="2473.5" y="1558.2" width="24" height="15.5" fill="#74bdea"/><text x="2477" y="1570.5" font-size="11" font-weight="bold" fill="#111">2</text><path fill="#111" d="M2485 1562.2h8l-4 5z"/><rect x="693.1" y="1604" width="24" height="15.5" fill="#74bdea"/><text x="696.6" y="1616.3" font-size="11" font-weight="bold" fill="#111">1</text><path fill="#111" d="M704.6 1608h8l-4 5z"/><rect x="811.5" y="1604" width="24" height="15.5" fill="#74bdea"/><text x="815" y="1616.3" font-size="11" font-weight="bold" fill="#111">2</text><path fill="#111" d="M823 1608h8l-4 5z"/><rect x="1642.5" y="1604" width="24" height="15.5" fill="#74bdea"/><text x="1646" y="1616.3" font-size="11" font-weight="bold" fill="#111">1</text><path fill="#111" d="M1654 1608h8l-4 5z"/><rect x="1760.5" y="1604" width="24" height="15.5" fill="#74bdea"/><text x="1764" y="1616.3" font-size="11" font-weight="bold" fill="#111">2</text><path fill="#111" d="M1772 1608h8l-4 5z"/><rect x="1879.5" y="1604" width="24" height="15.5" fill="#74bdea"/><text x="1883" y="1616.3" font-size="11" font-weight="bold" fill="#111">1</text><path fill="#111" d="M1891 1608h8l-4 5z"/><rect x="1997.5" y="1604" width="24" height="15.5" fill="#74bdea"/><text x="2001" y="1616.3" font-size="11" font-weight="bold" fill="#111">2</text><path fill="#111" d="M2009 1608h8l-4 5z"/><rect x="2116.5" y="1604" width="24" height="15.5" fill="#74bdea"/><text x="2120" y="1616.3" font-size="11" font-weight="bold" fill="#111">1</text><path fill="#111" d="M2128 1608h8l-4 5z"/><rect x="2235.5" y="1604" width="24" height="15.5" fill="#74bdea"/><text x="2239" y="1616.3" font-size="11" font-weight="bold" fill="#111">2</text><path fill="#111" d="M2247 1608h8l-4 5z"/><rect x="2354.5" y="1604" width="24" height="15.5" fill="#74bdea"/><text x="2358" y="1616.3" font-size="11" font-weight="bold" fill="#111">1</text><path fill="#111" d="M2366 1608h8l-4 5z"/><rect x="2473.5" y="1604" width="24" height="15.5" fill="#74bdea"/><text x="2477" y="1616.3" font-size="11" font-weight="bold" fill="#111">2</text><path fill="#111" d="M2485 1608h8l-4 5z"/><rect x="1987.3" y="50" width="1.8" height="1575.5" fill="#f2f2f2"/></svg>
<div style="left:2712.5px;top:46px;width:15.5px;height:1580px;background:#232629;"></div>
<div style="left:2707px;top:50px;width:1.6px;height:25px;background:#d0d0d0;"></div>
<div style="left:2713px;top:50.3px;width:11.6px;height:21.4px;background:#3b3e42;border-radius:3px;border:1px solid #56575a;"></div>
<svg style="left:2713px;top:50.3px;" width="12" height="21" viewBox="0 0 12 21"><path d="M2 8 H10 L6 14Z" fill="#ddd"/></svg>
<div style="left:2713px;top:80.3px;width:11.6px;height:11.4px;background:#3b3e42;border-radius:3px;border:1px solid #56575a;"></div>
<svg style="left:2713px;top:80.3px;" width="12" height="11.4" viewBox="0 0 12 11.4"><path d="M3 9 L9 2" stroke="#eee" stroke-width="1.6"/></svg>
<div style="left:2713px;top:95.2px;width:11.6px;height:47.6px;background:#3b3e42;border-radius:3px;border:1px solid #56575a;"></div>
<div style="left:2718.2px;top:100px;width:1.2px;height:36px;background:#8a8a8a;"></div>
<div style="left:2714.5px;top:132.5px;width:9px;height:9px;background:#f4f4f4;border-radius:50%;"></div>
<div style="left:2713px;top:146.2px;width:11.6px;height:1365px;background:#3b3e42;border-radius:3px;"></div>
<svg style="left:2713px;top:147px;" width="12" height="14" viewBox="0 0 12 14"><path d="M3 9 L6 5.5 L9 9" stroke="#ddd" stroke-width="1.2" fill="none"/></svg>
<div style="left:2715px;top:164px;width:7.6px;height:1342px;background:#545659;border-radius:3px;"></div>
<div style="left:2715px;top:178px;width:7.6px;height:544px;background:#f2f2f2;border-radius:3px;"></div>
<svg style="left:2713px;top:1512px;" width="12" height="12" viewBox="0 0 12 12"><path d="M3 4 L6 7.5 L9 4" stroke="#ddd" stroke-width="1.2" fill="none"/></svg>
<div style="left:2713px;top:1527px;width:11.6px;height:11.4px;background:#3b3e42;border-radius:3px;border:1px solid #56575a;"></div>
<svg style="left:2713px;top:1527px;" width="12" height="11.4" viewBox="0 0 12 11.4"><path d="M2.5 3 H9.5 L6 9Z" fill="#eee"/></svg>
<div style="left:2713px;top:1542.7px;width:11.6px;height:82.6px;background:#3b3e42;border-radius:3px;border:1px solid #56575a;"></div>
<div style="left:2715.5px;top:1548.5px;width:7px;height:1.8px;background:#eee;"></div>
<div style="left:2714.5px;top:1557px;width:9px;height:9px;background:#f4f4f4;border-radius:50%;"></div>
<div style="left:2718.2px;top:1566px;width:1.2px;height:44px;background:#8a8a8a;"></div>
<svg style="left:2713px;top:1612px;" width="12" height="12" viewBox="0 0 12 12"><path d="M6 2 V10 M2 6 H10" stroke="#eee" stroke-width="1.8"/></svg>
<div style="left:536.8px;top:1625.5px;width:2175.7px;height:15px;background:#232629;"></div>
<div style="left:539px;top:1626.5px;width:2057px;height:11px;background:#545659;border-radius:3px;"></div>
<svg style="left:541px;top:1627px;" width="10" height="10" viewBox="0 0 10 10"><path d="M6.5 2 L3 5.5 L6.5 9" stroke="#ddd" stroke-width="1.3" fill="none"/></svg>
<div style="left:557.5px;top:1628px;width:112.7px;height:8px;background:#f2f2f2;border-radius:4px;"></div>
<svg style="left:2598px;top:1627px;" width="10" height="10" viewBox="0 0 10 10"><path d="M3.5 2 L7 5.5 L3.5 9" stroke="#ddd" stroke-width="1.3" fill="none"/></svg>
<div style="left:2614px;top:1626.3px;width:11.7px;height:11.2px;background:#3b3e42;border-radius:3px;border:1px solid #56575a;"></div>
<svg style="left:2614px;top:1626.3px;" width="12" height="11" viewBox="0 0 12 11"><path d="M2.5 3 H9.5 L6 9Z" fill="#eee"/></svg>
<div style="left:2629.2px;top:1626.3px;width:83.2px;height:11.2px;background:#3b3e42;border-radius:3px;border:1px solid #56575a;"></div>
<div style="left:2632.5px;top:1631px;width:8px;height:1.8px;background:#eee;"></div>
<div style="left:2645px;top:1631.2px;width:52px;height:1.4px;background:#777;"></div>
<div style="left:2662px;top:1627.7px;width:9px;height:9px;background:#f4f4f4;border-radius:50%;"></div>
<svg style="left:2701px;top:1626.3px;" width="11" height="11" viewBox="0 0 11 11"><path d="M5.5 1.5 V9.5 M1.5 5.5 H9.5" stroke="#eee" stroke-width="1.8"/></svg>
<div style="left:123px;top:44.5px;width:2607px;height:1598.5px;border-radius:7px;border:1.6px solid #8f9194;"></div>
<div style="left:2735.5px;top:45px;width:260.5px;height:1598px;background:#1c1e21;"></div>
<div style="left:2737px;top:45.5px;width:138.5px;height:21px;background:#1b1c1f;border-radius:6px 6px 0 0;"></div>
<div style="left:2814.5px;top:49px;width:1px;height:14px;background:#2c2e31;"></div>
<div style="left:2875.5px;top:45px;width:79px;height:22px;background:#232629;border-radius:6px 6px 0 0;"></div>
<div style="left:2954.5px;top:47px;width:40px;height:20px;background:#1c1e21;border-radius:0 6px 0 0;"></div>
<div class="t" style="left:2737px;top:50.5px;font-size:12.5px;color:#d8d8d8;font-weight:bold;width:75px;text-align:center;">Media</div>
<div class="t" style="left:2815px;top:50.5px;font-size:12.5px;color:#d8d8d8;font-weight:bold;width:60px;text-align:center;">CR</div>
<div class="t" style="left:2875.5px;top:50.5px;font-size:12.5px;color:#e8e8e8;font-weight:bold;width:79px;text-align:center;">Meter</div>
<div style="left:2735.5px;top:66.5px;width:260.5px;height:1556px;background:#232629;border-radius:0 6px 6px 6px;"></div>
<div style="left:2744px;top:79.2px;width:160.4px;height:24.4px;background:#26292c;border-radius:4px;border:1px solid #414347;"></div>
<div style="left:2744.5px;top:79.7px;width:79px;height:23.4px;background:#17181a;border-radius:4px 0 0 4px;"></div>
<div class="t" style="left:2750px;top:85.5px;font-size:12.5px;color:#e2e2e2;">Digital...</div>
<svg style="left:2807px;top:85px;" width="12" height="12" viewBox="0 0 12 12"><path d="M1 2 H11 L6 9Z" fill="#e2e2e2"/></svg>
<div class="t" style="left:2830px;top:85.5px;font-size:12.5px;color:#6c6e72;">-18 d...</div>
<svg style="left:2888px;top:85px;" width="12" height="12" viewBox="0 0 12 12"><path d="M1 2 H11 L6 9Z" fill="#6c6e72"/></svg>
<div style="left:2908px;top:79.2px;width:49.6px;height:24.4px;background:#444548;border-radius:4px;border:1px solid #56575a;"></div>
<div style="left:2932.5px;top:80px;width:1px;height:23px;background:#2c2f33;"></div>
<svg style="left:2908px;top:79.2px;" width="50" height="24.4" viewBox="0 0 50 24.4"><circle cx="12.5" cy="12.2" r="4.8" stroke="#ddd" stroke-width="3" fill="none" stroke-dasharray="2.6 1.3"/><circle cx="12.5" cy="12.2" r="2.2" fill="#ddd"/><rect x="31" y="7" width="2" height="10" fill="#ddd"/><path d="M33 12 L38 7 V17Z M38 12 L43 7 V17Z" fill="#ddd"/></svg>
<div style="left:2961px;top:79.2px;width:25px;height:24.4px;background:#d4d4d4;border-radius:4px;"></div>
<svg style="left:2961px;top:79.2px;" width="25" height="24.4" viewBox="0 0 25 24.4"><path d="M2 9 H5 L9 5 V19 L5 15 H2Z M23 9 H20 L16 5 V19 L20 15 H23Z" fill="#111"/><circle cx="12.5" cy="12" r="2" fill="#111"/></svg>
<div style="left:2804px;top:121.7px;width:121.5px;height:1185.5px;background:#0a0a0a;border:1.6px solid #5c5e61;"></div>
<div style="left:2806.4px;top:124.8px;width:117px;height:1180.7px;background:linear-gradient(to bottom,#36f69c 0px,#35f59c 190px,#3de8be 330px,#3be0d2 580px,#33d8e4 900px,#2bd0f8 1180px);"></div>
<div style="left:2806.4px;top:124.8px;width:58px;height:21.8px;background:#000;"></div>
<div style="left:2806.4px;top:128.2px;width:58px;height:1.2px;background:#3a6ad8;"></div>
<div style="left:2865.4px;top:124.8px;width:58px;height:4.4px;background:#000;"></div>
<div style="left:2865.4px;top:128.2px;width:58px;height:1.2px;background:#3a6ad8;"></div>
<div style="left:2806.4px;top:314.3px;width:58px;height:990px;background:linear-gradient(to bottom,#3ee9bf 0px,#3be2cf 390px,#33d8e4 700px,#2bd0f8 990px);"></div>
<div style="left:2865.4px;top:304.3px;width:58px;height:1000px;background:linear-gradient(to bottom,#3ee9bf 0px,#3be2cf 400px,#33d8e4 710px,#2bd0f8 1000px);"></div>
<div style="left:2806.4px;top:313.6px;width:58px;height:1.2px;background:#1a2a7a;"></div>
<div style="left:2865.4px;top:303.6px;width:58px;height:1.2px;background:#1a2a7a;"></div>
<div style="left:2864.4px;top:124.8px;width:1.2px;height:1180px;background:#0d1a1a;"></div>
<div style="left:2806.4px;top:125.9px;width:117px;height:1px;background:rgba(0,60,60,0.35);"></div>
<div style="left:2792.5px;top:125.2px;width:9px;height:1.6px;background:#cfcfcf;"></div>
<div style="left:2928px;top:125.2px;width:9px;height:1.6px;background:#cfcfcf;"></div>
<div class="t" style="left:2740px;top:119.4px;font-size:13.5px;color:#d4d4d4;font-weight:bold;width:49px;text-align:right;">0</div>
<div class="t" style="left:2939.5px;top:119.4px;font-size:13.5px;color:#d4d4d4;font-weight:bold;">0</div>
<div style="left:2806.4px;top:269.8px;width:117px;height:1px;background:rgba(0,60,60,0.35);"></div>
<div style="left:2792.5px;top:269.1px;width:9px;height:1.6px;background:#cfcfcf;"></div>
<div style="left:2928px;top:269.1px;width:9px;height:1.6px;background:#cfcfcf;"></div>
<div class="t" style="left:2740px;top:263.3px;font-size:13.5px;color:#d4d4d4;font-weight:bold;width:49px;text-align:right;">5</div>
<div class="t" style="left:2939.5px;top:263.3px;font-size:13.5px;color:#d4d4d4;font-weight:bold;">5</div>
<div style="left:2806.4px;top:413.4px;width:117px;height:1px;background:rgba(0,60,60,0.35);"></div>
<div style="left:2792.5px;top:412.7px;width:9px;height:1.6px;background:#cfcfcf;"></div>
<div style="left:2928px;top:412.7px;width:9px;height:1.6px;background:#cfcfcf;"></div>
<div class="t" style="left:2740px;top:406.9px;font-size:12px;color:#d4d4d4;font-weight:bold;width:49px;text-align:right;">10</div>
<div class="t" style="left:2939.5px;top:406.9px;font-size:12px;color:#d4d4d4;font-weight:bold;">10</div>
<div style="left:2806.4px;top:557.8px;width:117px;height:1px;background:rgba(0,60,60,0.35);"></div>
<div style="left:2792.5px;top:557.1px;width:9px;height:1.6px;background:#cfcfcf;"></div>
<div style="left:2928px;top:557.1px;width:9px;height:1.6px;background:#cfcfcf;"></div>
<div class="t" style="left:2740px;top:551.3px;font-size:12px;color:#d4d4d4;font-weight:bold;width:49px;text-align:right;">15</div>
<div class="t" style="left:2939.5px;top:551.3px;font-size:12px;color:#d4d4d4;font-weight:bold;">15</div>
<div style="left:2806.4px;top:703.5px;width:117px;height:1px;background:rgba(0,60,60,0.35);"></div>
<div style="left:2792.5px;top:702.8px;width:9px;height:1.6px;background:#cfcfcf;"></div>
<div style="left:2928px;top:702.8px;width:9px;height:1.6px;background:#cfcfcf;"></div>
<div class="t" style="left:2740px;top:697px;font-size:12px;color:#d4d4d4;font-weight:bold;width:49px;text-align:right;">20</div>
<div class="t" style="left:2939.5px;top:697px;font-size:12px;color:#d4d4d4;font-weight:bold;">20</div>
<div style="left:2806.4px;top:825px;width:117px;height:1px;background:rgba(0,60,60,0.35);"></div>
<div style="left:2792.5px;top:824.3px;width:9px;height:1.6px;background:#cfcfcf;"></div>
<div style="left:2928px;top:824.3px;width:9px;height:1.6px;background:#cfcfcf;"></div>
<div class="t" style="left:2740px;top:818.5px;font-size:12px;color:#d4d4d4;font-weight:bold;width:49px;text-align:right;">25</div>
<div class="t" style="left:2939.5px;top:818.5px;font-size:12px;color:#d4d4d4;font-weight:bold;">25</div>
<div style="left:2806.4px;top:932.8px;width:117px;height:1px;background:rgba(0,60,60,0.35);"></div>
<div style="left:2792.5px;top:932.1px;width:9px;height:1.6px;background:#cfcfcf;"></div>
<div style="left:2928px;top:932.1px;width:9px;height:1.6px;background:#cfcfcf;"></div>
<div class="t" style="left:2740px;top:926.3px;font-size:12px;color:#d4d4d4;font-weight:bold;width:49px;text-align:right;">30</div>
<div class="t" style="left:2939.5px;top:926.3px;font-size:12px;color:#d4d4d4;font-weight:bold;">30</div>
<div style="left:2806.4px;top:1027.7px;width:117px;height:1px;background:rgba(0,60,60,0.35);"></div>
<div style="left:2792.5px;top:1027px;width:9px;height:1.6px;background:#cfcfcf;"></div>
<div style="left:2928px;top:1027px;width:9px;height:1.6px;background:#cfcfcf;"></div>
<div class="t" style="left:2740px;top:1021.2px;font-size:12px;color:#d4d4d4;font-weight:bold;width:49px;text-align:right;">35</div>
<div class="t" style="left:2939.5px;top:1021.2px;font-size:12px;color:#d4d4d4;font-weight:bold;">35</div>
<div style="left:2806.4px;top:1107.2px;width:117px;height:1px;background:rgba(0,60,60,0.35);"></div>
<div style="left:2792.5px;top:1106.5px;width:9px;height:1.6px;background:#cfcfcf;"></div>
<div style="left:2928px;top:1106.5px;width:9px;height:1.6px;background:#cfcfcf;"></div>
<div class="t" style="left:2740px;top:1100.7px;font-size:12px;color:#d4d4d4;font-weight:bold;width:49px;text-align:right;">40</div>
<div class="t" style="left:2939.5px;top:1100.7px;font-size:12px;color:#d4d4d4;font-weight:bold;">40</div>
<div style="left:2806.4px;top:1224.3px;width:117px;height:1px;background:rgba(0,60,60,0.35);"></div>
<div style="left:2792.5px;top:1223.6px;width:9px;height:1.6px;background:#cfcfcf;"></div>
<div style="left:2928px;top:1223.6px;width:9px;height:1.6px;background:#cfcfcf;"></div>
<div class="t" style="left:2740px;top:1217.8px;font-size:12px;color:#d4d4d4;font-weight:bold;width:49px;text-align:right;">50</div>
<div class="t" style="left:2939.5px;top:1217.8px;font-size:12px;color:#d4d4d4;font-weight:bold;">50</div>
<div style="left:2806.4px;top:1269.8px;width:117px;height:1px;background:rgba(0,60,60,0.35);"></div>
<div style="left:2792.5px;top:1269.1px;width:9px;height:1.6px;background:#cfcfcf;"></div>
<div style="left:2928px;top:1269.1px;width:9px;height:1.6px;background:#cfcfcf;"></div>
<div class="t" style="left:2740px;top:1263.3px;font-size:12px;color:#d4d4d4;font-weight:bold;width:49px;text-align:right;">60</div>
<div class="t" style="left:2939.5px;top:1263.3px;font-size:12px;color:#d4d4d4;font-weight:bold;">60</div>
<div style="left:2797.5px;top:153.98px;width:4.5px;height:1.6px;background:#cfcfcf;"></div>
<div style="left:2928px;top:153.98px;width:4.5px;height:1.6px;background:#cfcfcf;"></div>
<div style="left:2797.5px;top:297.82px;width:4.5px;height:1.6px;background:#cfcfcf;"></div>
<div style="left:2928px;top:297.82px;width:4.5px;height:1.6px;background:#cfcfcf;"></div>
<div style="left:2797.5px;top:182.76px;width:4.5px;height:1.6px;background:#cfcfcf;"></div>
<div style="left:2928px;top:182.76px;width:4.5px;height:1.6px;background:#cfcfcf;"></div>
<div style="left:2797.5px;top:326.54px;width:4.5px;height:1.6px;background:#cfcfcf;"></div>
<div style="left:2928px;top:326.54px;width:4.5px;height:1.6px;background:#cfcfcf;"></div>
<div style="left:2797.5px;top:211.54px;width:4.5px;height:1.6px;background:#cfcfcf;"></div>
<div style="left:2928px;top:211.54px;width:4.5px;height:1.6px;background:#cfcfcf;"></div>
<div style="left:2797.5px;top:355.26px;width:4.5px;height:1.6px;background:#cfcfcf;"></div>
<div style="left:2928px;top:355.26px;width:4.5px;height:1.6px;background:#cfcfcf;"></div>
<div style="left:2797.5px;top:240.32px;width:4.5px;height:1.6px;background:#cfcfcf;"></div>
<div style="left:2928px;top:240.32px;width:4.5px;height:1.6px;background:#cfcfcf;"></div>
<div style="left:2797.5px;top:383.98px;width:4.5px;height:1.6px;background:#cfcfcf;"></div>
<div style="left:2928px;top:383.98px;width:4.5px;height:1.6px;background:#cfcfcf;"></div>
<div style="left:2797.5px;top:1172.3px;width:4.5px;height:1.6px;background:#cfcfcf;"></div>
<div style="left:2928px;top:1172.3px;width:4.5px;height:1.6px;background:#cfcfcf;"></div>
<div style="left:2744.4px;top:1330.7px;width:241.6px;height:59.2px;background:#1a1c1e;border-radius:6px;"></div>
<div class="t" style="left:2744.4px;top:1342px;font-size:12px;color:#e0e0e0;width:158px;text-align:center;">RMS Max.</div>
<div class="t" style="left:2865px;top:1342px;font-size:12px;color:#e0e0e0;width:83px;text-align:center;">Peak Max.</div>
<div class="t" style="left:2744.4px;top:1367px;font-size:12px;color:#e0e0e0;width:158px;text-align:center;">-5.2</div>
<div class="t" style="left:2865px;top:1367px;font-size:12px;color:#e0e0e0;width:83px;text-align:center;">-0.1</div>
<div style="left:2744.4px;top:1400.8px;width:240.6px;height:18.2px;background:#606164;border-radius:4px;"></div>
<div style="left:2965.5px;top:1401px;width:19.5px;height:18px;background:#55565a;border-radius:0 4px 4px 0;"></div>
<svg style="left:2750px;top:1405px;" width="9" height="9" viewBox="0 0 9 9"><path d="M1 2 H8 L4.5 7.5Z" fill="#eee"/></svg>
<div class="t" style="left:2763px;top:1404.5px;font-size:12.5px;color:#ececec;font-weight:bold;">Main</div>
<div class="t" style="left:2930px;top:1405px;font-size:11.5px;color:#ececec;width:31px;text-align:right;">stereo</div>
<svg style="left:2965.5px;top:1401px;" width="19.5" height="18" viewBox="0 0 19.5 18"><path d="M2 9 L7 5 V13Z M17.5 9 L12.5 5 V13Z" fill="#4ab0f8"/><circle cx="9.75" cy="9" r="1.8" fill="#4ab0f8"/></svg>
<div style="left:2745.5px;top:1427.5px;width:238.5px;height:25.4px;background:#2a2c30;border-radius:5px;border:1px solid #3b3d41;"></div>
<div style="left:2748.5px;top:1430.3px;width:160px;height:2.4px;background:#f0963a;"></div>
<div style="left:2745.5px;top:1433.8px;width:238.5px;height:19.1px;background:#f3953a;border-radius:0 0 5px 5px;"></div>
<div class="t" style="left:2745.5px;top:1437.5px;font-size:11.5px;color:#2a1500;width:238.5px;text-align:center;">Mix</div>
<div style="left:2745.5px;top:1463.5px;width:25px;height:24.7px;background:#d4d4d4;border-radius:4px;"></div>
<div style="left:2774px;top:1463.5px;width:24.6px;height:24.7px;background:#d4d4d4;border-radius:4px;"></div>
<svg style="left:2748.5px;top:1463.5px;" width="19" height="25" viewBox="0 0 19 25"><path d="M5 20 L9 6 H12 L15 20Z" fill="#111"/><path d="M10 14 L15 8" stroke="#d4d4d4" stroke-width="1.5"/><circle cx="15" cy="8" r="1.6" fill="#111"/></svg>
<div class="t" style="left:2774px;top:1468px;font-size:17px;color:#111;font-weight:bold;width:24.6px;text-align:center;">L</div>
<div style="left:2745.5px;top:1498.4px;width:53.1px;height:24.3px;background:#3b3e42;border-radius:4px;border:1px solid #56575a;"></div>
<svg style="left:2762px;top:1502px;" width="20" height="17" viewBox="0 0 20 17"><circle cx="10" cy="8.5" r="6" stroke="#e0e0e0" stroke-width="1.6" fill="none"/><path d="M6 11 L13.5 5.5 V11Z" fill="#e0e0e0"/></svg>
<div style="left:2745.5px;top:1533.4px;width:53.1px;height:24.1px;background:#3b3e42;border-radius:4px;border:1px solid #56575a;"></div>
<div class="t" style="left:2745.5px;top:1539px;font-size:12px;color:#e0e0e0;width:53.1px;text-align:center;">Dim</div>
<svg style="left:2836px;top:1464px;" width="68" height="68" viewBox="0 0 68 68"><circle cx="34" cy="34" r="33" fill="#1d1f21"/><path d="M14.5 54.5 A27.5 27.5 0 1 1 53.5 54.5" stroke="#3f4043" stroke-width="4.5" fill="none"/><path d="M14.5 54.5 A27.5 27.5 0 1 1 61 39" stroke="#f04545" stroke-width="4.5" fill="none"/><circle cx="34" cy="34" r="22" fill="#4a3c3d" stroke="#f04545" stroke-width="1.6"/><path d="M36.5 33.5 L47 30.5" stroke="#e6e0e0" stroke-width="4.5" stroke-linecap="round"/></svg>
<div style="left:2845.5px;top:1538.5px;width:49.1px;height:17.8px;background:#17181a;border-radius:3px;border:1px solid #4a4c50;"></div>
<div class="t" style="left:2845.5px;top:1542.5px;font-size:11px;color:#e2e2e2;width:49.1px;text-align:center;">0.00 dB</div>
<div style="left:2935.2px;top:1459.2px;width:47.5px;height:102.2px;background:#1b1c1e;border-radius:4px;"></div>
<div style="left:2938px;top:1475px;width:40px;height:78.5px;background:linear-gradient(to bottom,#36f59c,#2fe0c8 50%,#2ad0f8);"></div>
<div style="left:2938px;top:1475px;width:20px;height:2.5px;background:#1b1c1e;"></div>
<div style="left:2958px;top:1471px;width:1.2px;height:84px;background:#222;"></div>
<div style="left:2938px;top:1485.3px;width:40px;height:0.8px;background:rgba(0,60,60,0.4);"></div>
<div style="left:2938px;top:1495.6px;width:40px;height:0.8px;background:rgba(0,60,60,0.4);"></div>
<div style="left:2938px;top:1505.9px;width:40px;height:0.8px;background:rgba(0,60,60,0.4);"></div>
<div style="left:2938px;top:1516.2px;width:40px;height:0.8px;background:rgba(0,60,60,0.4);"></div>
<div style="left:2938px;top:1526.5px;width:40px;height:0.8px;background:rgba(0,60,60,0.4);"></div>
<div style="left:2938px;top:1536.8px;width:40px;height:0.8px;background:rgba(0,60,60,0.4);"></div>
<div style="left:2938px;top:1547.1px;width:40px;height:0.8px;background:rgba(0,60,60,0.4);"></div>
<div style="left:2745.5px;top:1568.5px;width:92.4px;height:18.3px;background:#d4d4d4;border-radius:4px;"></div>
<div class="t" style="left:2745.5px;top:1572.5px;font-size:11.5px;color:#222;width:92.4px;text-align:center;">A</div>
<div style="left:2842px;top:1568.5px;width:142px;height:18.3px;background:#3b3e42;border-radius:4px;border:1px solid #56575a;"></div>
<div class="t" style="left:2851px;top:1572.5px;font-size:11.5px;color:#e0e0e0;">1</div>
<div class="t" style="left:2900px;top:1572.5px;font-size:11.5px;color:#e0e0e0;width:70px;text-align:center;">Stereo</div>
<svg style="left:2747px;top:1597px;" width="8" height="9" viewBox="0 0 8 9"><path d="M1 1 L7 4.5 L1 8Z" fill="#ddd"/></svg>
<div class="t" style="left:2759.5px;top:1596px;font-size:11.5px;color:#e0e0e0;font-weight:bold;">Levels</div>
<div style="left:2797.5px;top:1602px;width:187px;height:1px;background:#4a4c50;"></div>
<div style="left:2735.5px;top:1622.3px;width:260.5px;height:21px;background:#1c1e21;"></div>
<div style="left:2735.5px;top:1622.3px;width:79.5px;height:21px;background:#232629;border-radius:0 0 6px 6px;"></div>
<div style="left:2815px;top:1623px;width:93px;height:20px;background:#1b1c1f;border-radius:0 0 6px 0;"></div>
<div class="t" style="left:2735.5px;top:1627px;font-size:12px;color:#e8e8e8;font-weight:bold;width:79.5px;text-align:center;">Master</div>
<div class="t" style="left:2815px;top:1627px;font-size:12px;color:#d8d8d8;font-weight:bold;width:93px;text-align:center;">Loudness</div>
<div style="left:0px;top:1643.5px;width:3000px;height:44.5px;background:#212427;"></div>
<div style="left:0px;top:1643px;width:3000px;height:1px;background:#191b1d;"></div>
<div style="left:4px;top:1655px;width:25px;height:24.6px;background:#55575a;border-radius:4px;"></div>
<svg style="left:4px;top:1655px;" width="25" height="25" viewBox="0 0 25 25"><circle cx="12.5" cy="12.5" r="7" stroke="#ddd" stroke-width="2.2" fill="none" stroke-dasharray="9 3"/><path d="M12.5 9 V13 H15" stroke="#ddd" stroke-width="1.6" fill="none"/></svg>
<div style="left:34px;top:1655px;width:43.5px;height:24.6px;background:#17181a;border-radius:4px;border:1px solid #3a3c40;"></div>
<svg style="left:34px;top:1655px;" width="44" height="25" viewBox="0 0 44 25"><circle cx="12" cy="12.3" r="6" fill="#ddd"/><path d="M27 9 H35 L31 15.5Z" fill="#ddd"/></svg>
<div style="left:80.5px;top:1661px;width:2.6px;height:2.6px;background:#d0d0d0;border-radius:1px;"></div>
<div style="left:80.5px;top:1665.5px;width:2.6px;height:2.6px;background:#d0d0d0;border-radius:1px;"></div>
<div style="left:80.5px;top:1670px;width:2.6px;height:2.6px;background:#d0d0d0;border-radius:1px;"></div>
<div style="left:89px;top:1655px;width:43.5px;height:24.6px;background:#17181a;border-radius:4px;border:1px solid #3a3c40;"></div>
<svg style="left:89px;top:1655px;" width="44" height="25" viewBox="0 0 44 25"><path d="M3 12 H5 L7 7 L9 17 L11 4 L13 20 L15 7 L17 15 L19 10 L20 12 H22" stroke="#ddd" stroke-width="1.8" fill="none"/><path d="M27 9 H35 L31 15.5Z" fill="#ddd"/></svg>
<div style="left:135.5px;top:1661px;width:2.6px;height:2.6px;background:#d0d0d0;border-radius:1px;"></div>
<div style="left:135.5px;top:1665.5px;width:2.6px;height:2.6px;background:#d0d0d0;border-radius:1px;"></div>
<div style="left:135.5px;top:1670px;width:2.6px;height:2.6px;background:#d0d0d0;border-radius:1px;"></div>
<div style="left:144px;top:1655px;width:43.5px;height:24.6px;background:#17181a;border-radius:4px;border:1px solid #3a3c40;"></div>
<svg style="left:144px;top:1655px;" width="44" height="25" viewBox="0 0 44 25"><circle cx="12" cy="12.3" r="7" fill="#ddd"/><circle cx="9" cy="10" r="1" fill="#222"/><circle cx="12" cy="8.5" r="1" fill="#222"/><circle cx="15" cy="10" r="1" fill="#222"/><circle cx="9.5" cy="13.5" r="1" fill="#222"/><circle cx="14.5" cy="13.5" r="1" fill="#222"/><path d="M27 9 H35 L31 15.5Z" fill="#ddd"/></svg>
<div style="left:190.5px;top:1661px;width:2.6px;height:2.6px;background:#d0d0d0;border-radius:1px;"></div>
<div style="left:190.5px;top:1665.5px;width:2.6px;height:2.6px;background:#d0d0d0;border-radius:1px;"></div>
<div style="left:190.5px;top:1670px;width:2.6px;height:2.6px;background:#d0d0d0;border-radius:1px;"></div>
<div style="left:198.5px;top:1655px;width:37.5px;height:24.6px;background:#4f5154;border-radius:4px;"></div>
<div class="t" style="left:198.5px;top:1661px;font-size:13px;color:#e8e8e8;font-weight:bold;width:37.5px;text-align:center;">AQ</div>
<div style="left:1246.3px;top:1652.6px;width:198.4px;height:30.4px;background:#b8b8b8;border-radius:5px;"></div>
<div style="left:1247.8px;top:1654px;width:48.5px;height:27.6px;background:#8f7ce9;border-radius:4px 0 0 4px;"></div>
<div style="left:1296.3px;top:1654px;width:49.4px;height:27.6px;background:#6b6c70;"></div>
<div style="left:1345.7px;top:1654px;width:49.6px;height:27.6px;background:#35d435;"></div>
<div style="left:1395.3px;top:1654px;width:47.9px;height:27.6px;background:#6b6c70;border-radius:0 4px 4px 0;"></div>
<svg style="left:1247.7px;top:1654px;" width="48.5" height="27.6" viewBox="0 0 48.5 27.6"><path d="M20.5 13.6 L13.4 20 H25.6 A6 6 0 0 0 25.6 8 H23.5" stroke="#1d1333" stroke-width="2.6" fill="none" stroke-linecap="round" stroke-linejoin="round"/></svg>
<div style="left:1313.5px;top:1661.5px;width:14.5px;height:13.5px;border:2.4px solid #dcdcdc;"></div>
<svg style="left:1345.7px;top:1654px;" width="49.6" height="27.6" viewBox="0 0 49.6 27.6"><path d="M19 7 L31 14 L19 21Z" stroke="#0b1f0b" stroke-width="2.4" fill="none" stroke-linejoin="round"/></svg>
<div style="left:1411.5px;top:1660.5px;width:16px;height:16px;border:2.6px solid #e4e4e4;border-radius:50%;"></div>
<div style="left:1447.5px;top:1660px;width:2.6px;height:2.6px;background:#d0d0d0;border-radius:1px;"></div>
<div style="left:1447.5px;top:1664.5px;width:2.6px;height:2.6px;background:#d0d0d0;border-radius:1px;"></div>
<div style="left:1447.5px;top:1669px;width:2.6px;height:2.6px;background:#d0d0d0;border-radius:1px;"></div>
<div style="left:1456.4px;top:1653.5px;width:37.2px;height:28.5px;background:#3b3d41;border-radius:4px;border:1px solid #2b2d30;"></div>
<svg style="left:1456.4px;top:1653.5px;" width="37" height="28" viewBox="0 0 37 28"><circle cx="19" cy="14" r="6" fill="#6a6c70"/><circle cx="16" cy="14" r="4" fill="#3b3d41"/><circle cx="14" cy="14" r="2.6" fill="#6a6c70"/></svg>
<div style="left:1499.8px;top:1653.5px;width:148.2px;height:28.5px;background:#17181a;border-radius:4px;border:1px solid #3a3c40;"></div>
<div style="left:1523px;top:1654px;width:1px;height:27.5px;background:#3a3c40;"></div>
<svg style="left:1499.8px;top:1653.5px;" width="24" height="28" viewBox="0 0 24 28"><path d="M14 7 V19" stroke="#ddd" stroke-width="1.6"/><ellipse cx="11" cy="19.5" rx="3.5" ry="2.6" fill="#ddd"/></svg>
<div class="t" style="left:1525px;top:1659.5px;font-size:15.5px;color:#e6e6e6;width:117px;text-align:right;">50.&nbsp;&nbsp;3.&nbsp;&nbsp;3.107</div>
<div style="left:1650px;top:1660px;width:2.6px;height:2.6px;background:#d0d0d0;border-radius:1px;"></div>
<div style="left:1650px;top:1664.5px;width:2.6px;height:2.6px;background:#d0d0d0;border-radius:1px;"></div>
<div style="left:1650px;top:1669px;width:2.6px;height:2.6px;background:#d0d0d0;border-radius:1px;"></div>
<div style="left:1659.9px;top:1653.5px;width:180.1px;height:28.5px;background:#17181a;border-radius:4px;border:1px solid #3a3c40;"></div>
<div style="left:1660.5px;top:1654px;width:23.5px;height:27.5px;background:#d4d4d4;border-radius:4px 0 0 4px;"></div>
<svg style="left:1660.5px;top:1654px;" width="24" height="28" viewBox="0 0 24 28"><path d="M10 7 V19" stroke="#111" stroke-width="1.6"/><ellipse cx="7.5" cy="19" rx="3" ry="2.4" fill="#111"/><path d="M15 6 V20 M12.5 9 L15 6 L17.5 9 M12.5 17 L15 20 L17.5 17" stroke="#111" stroke-width="1.4" fill="none"/></svg>
<div class="t" style="left:1686px;top:1659.5px;font-size:15px;color:#e6e6e6;width:60px;text-align:right;">170.000</div>
<svg style="left:1750px;top:1656px;" width="12" height="24" viewBox="0 0 12 24"><path d="M6 3 L10 9 H2Z M6 21 L10 15 H2Z" fill="#ddd"/></svg>
<div style="left:1765px;top:1654px;width:51px;height:27.5px;background:#3b3d41;"></div>
<div class="t" style="left:1765px;top:1660px;font-size:13px;color:#e0e0e0;width:51px;text-align:center;">Tap</div>
<svg style="left:1816px;top:1654px;" width="24" height="28" viewBox="0 0 24 28"><path d="M7 10 H17 L12 17Z" fill="#e0e0e0"/></svg>
<div style="left:1843.5px;top:1660px;width:2.6px;height:2.6px;background:#d0d0d0;border-radius:1px;"></div>
<div style="left:1843.5px;top:1664.5px;width:2.6px;height:2.6px;background:#d0d0d0;border-radius:1px;"></div>
<div style="left:1843.5px;top:1669px;width:2.6px;height:2.6px;background:#d0d0d0;border-radius:1px;"></div>
<div style="left:2846.8px;top:1655.4px;width:43.2px;height:24.1px;background:#3b3e42;border-radius:4px;border:1px solid #56575a;"></div>
<div style="left:2868px;top:1656px;width:1px;height:23px;background:#2c2f33;"></div>
<svg style="left:2846.8px;top:1655.4px;" width="22" height="24" viewBox="0 0 22 24"><path d="M6 20 L9.5 6 H12.5 L16 20Z" fill="#ddd"/><path d="M11 14 L16 7.5" stroke="#3b3e42" stroke-width="1.4"/><circle cx="16" cy="7.5" r="1.5" fill="#ddd"/></svg>
<svg style="left:2868.5px;top:1655.4px;" width="22" height="24" viewBox="0 0 22 24"><circle cx="11" cy="12" r="4.5" stroke="#ddd" stroke-width="3" fill="none" stroke-dasharray="2.4 1.2"/><circle cx="11" cy="12" r="2" fill="#ddd"/></svg>
<div style="left:2893px;top:1661px;width:2.6px;height:2.6px;background:#d0d0d0;border-radius:1px;"></div>
<div style="left:2893px;top:1665.5px;width:2.6px;height:2.6px;background:#d0d0d0;border-radius:1px;"></div>
<div style="left:2893px;top:1670px;width:2.6px;height:2.6px;background:#d0d0d0;border-radius:1px;"></div>
<div style="left:2901.4px;top:1655.4px;width:87.6px;height:24.1px;background:#17181a;border-radius:4px;border:1px solid #3a3c40;"></div>
<div style="left:2927px;top:1658px;width:1px;height:19px;background:#3a3c40;"></div>
<div style="left:2962px;top:1658px;width:6.5px;height:19px;background:linear-gradient(#36f59c,#2ad0f8);"></div>
<div style="left:2970px;top:1657px;width:6.5px;height:20px;background:linear-gradient(#36f59c,#2ad0f8);"></div>
<div style="left:2970px;top:1657px;width:6.5px;height:1px;background:#f0963a;"></div>
<div style="left:2992px;top:1661px;width:2.6px;height:2.6px;background:#d0d0d0;border-radius:1px;"></div>
<div style="left:2992px;top:1665.5px;width:2.6px;height:2.6px;background:#d0d0d0;border-radius:1px;"></div>
<div style="left:2992px;top:1670px;width:2.6px;height:2.6px;background:#d0d0d0;border-radius:1px;"></div>
</body></html>
